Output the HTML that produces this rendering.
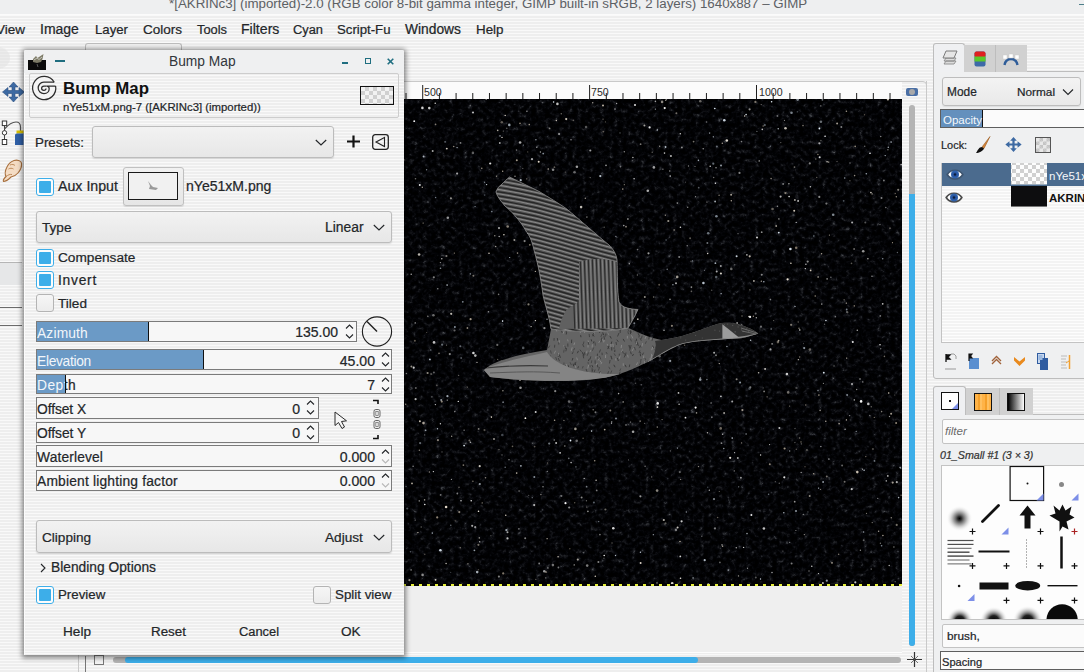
<!DOCTYPE html>
<html><head><meta charset="utf-8"><style>
html,body{margin:0;padding:0;}
body{width:1084px;height:672px;overflow:hidden;position:relative;font-family:"Liberation Sans",sans-serif;
background:repeating-linear-gradient(to bottom,#f9f9f9 0px,#f9f9f9 1px,#eeeeee 1px,#eeeeee 3px);}
div{box-sizing:border-box;}
svg{position:absolute;overflow:visible;pointer-events:none}
</style></head><body>
<div style="position:absolute;left:0px;top:0px;width:1084px;height:14px;background:#eeeff0"></div>
<div style="position:absolute;left:0px;top:14px;width:1084px;height:1px;background:#fbfbfb"></div>
<svg style="left:168.6px;top:-16px" width="900" height="32"><text x="0" y="23.50" font-size="13.32" fill="#5c6064" font-weight="400" font-family="Liberation Sans">*[AKRINc3] (imported)-2.0 (RGB color 8-bit gamma integer, GIMP built-in sRGB, 2 layers) 1640x887 – GIMP</text></svg>
<svg style="left:-4.2px;top:10px" width="900" height="32"><text x="0" y="24.00" font-size="13.5" fill="#232629" font-weight="400" stroke="#232629" stroke-width="0.22" font-family="Liberation Sans">View</text></svg>
<svg style="left:40px;top:10px" width="900" height="32"><text x="0" y="24.00" font-size="14.0" fill="#232629" font-weight="400" stroke="#232629" stroke-width="0.22" font-family="Liberation Sans">Image</text></svg>
<svg style="left:95px;top:10px" width="900" height="32"><text x="0" y="24.00" font-size="13.2" fill="#232629" font-weight="400" stroke="#232629" stroke-width="0.22" font-family="Liberation Sans">Layer</text></svg>
<svg style="left:143px;top:10px" width="900" height="32"><text x="0" y="24.00" font-size="13.5" fill="#232629" font-weight="400" stroke="#232629" stroke-width="0.22" font-family="Liberation Sans">Colors</text></svg>
<svg style="left:197px;top:10px" width="900" height="32"><text x="0" y="24.00" font-size="12.85" fill="#232629" font-weight="400" stroke="#232629" stroke-width="0.22" font-family="Liberation Sans">Tools</text></svg>
<svg style="left:241px;top:10px" width="900" height="32"><text x="0" y="24.00" font-size="14.1" fill="#232629" font-weight="400" stroke="#232629" stroke-width="0.22" font-family="Liberation Sans">Filters</text></svg>
<svg style="left:293px;top:10px" width="900" height="32"><text x="0" y="24.00" font-size="12.85" fill="#232629" font-weight="400" stroke="#232629" stroke-width="0.22" font-family="Liberation Sans">Cyan</text></svg>
<svg style="left:337px;top:10px" width="900" height="32"><text x="0" y="24.00" font-size="13.2" fill="#232629" font-weight="400" stroke="#232629" stroke-width="0.22" font-family="Liberation Sans">Script-Fu</text></svg>
<svg style="left:405px;top:10px" width="900" height="32"><text x="0" y="24.00" font-size="13.8" fill="#232629" font-weight="400" stroke="#232629" stroke-width="0.22" font-family="Liberation Sans">Windows</text></svg>
<svg style="left:475.5px;top:10px" width="900" height="32"><text x="0" y="24.00" font-size="13.4" fill="#232629" font-weight="400" stroke="#232629" stroke-width="0.22" font-family="Liberation Sans">Help</text></svg>
<div style="position:absolute;left:85px;top:43px;width:97px;height:10px;border:1px solid #bdbdbd;border-bottom:none;border-radius:3px 3px 0 0;background:#f0f0f0"></div>
<div style="position:absolute;left:-14px;top:47px;width:24px;height:22px;border-radius:50%;background:#e2e2e2;opacity:.6"></div>
<svg style="left:2px;top:82px" width="23" height="20" viewBox="0 0 23 20">
<path d="M11.5 0 L16 5 L13 5 L13 8.5 L17 8.5 L17 5.5 L22.5 10 L17 14.5 L17 11.5 L13 11.5 L13 15 L16 15 L11.5 20 L7 15 L10 15 L10 11.5 L6 11.5 L6 14.5 L0.5 10 L6 5.5 L6 8.5 L10 8.5 L10 5 L7 5 Z" fill="#3d6aa3" stroke="#2b4f80" stroke-width=".6"/></svg>
<svg style="left:0px;top:119px" width="26" height="28" viewBox="0 0 26 28">
<path d="M4.5 4 V23" stroke="#444" stroke-width="1"/>
<rect x="2.3" y="2" width="4.4" height="4.6" fill="#fff" stroke="#333" stroke-width="1"/>
<circle cx="4.5" cy="13.8" r="2.2" fill="#fff" stroke="#333" stroke-width="1"/>
<rect x="2.3" y="20.5" width="4.4" height="5" fill="#fff" stroke="#333" stroke-width="1"/>
<path d="M4.5 10 C8 6 12 3 16 3 C19 3 20.5 5 20.5 8 V12" fill="none" stroke="#555" stroke-width="1.2"/>
<rect x="16.5" y="11.5" width="7" height="3" fill="#d8c000"/>
<path d="M15 16 Q15 14.5 17 14.5 H23.5 V26 H15 Z" fill="#2f5fa6"/></svg>
<svg style="left:2px;top:159px" width="21" height="24" viewBox="0 0 21 24">
<path d="M12 1.5 C15 0.5 19 1.5 19.5 4 C20 7 18.5 11 16 14 C14 16.5 11 17.5 9 18 C7 20 4 22.5 1.5 22.5 C0.8 21.5 2 19.5 4 17.5 C3 15.5 3 12 4.5 9 C6 5.5 9 2.5 12 1.5 Z" fill="#f4dcc4" stroke="#a8703e" stroke-width="1.1"/>
<path d="M4 17.5 C6 16 8 15 10 15.5 M6.5 10 C8 9 10 9 11.5 10 M8 6 C10 5 12 5.5 13 6.5" fill="none" stroke="#b98250" stroke-width=".9"/></svg>
<div style="position:absolute;left:0px;top:262px;width:22px;height:1px;background:#b5b5b5"></div>
<div style="position:absolute;left:0px;top:263px;width:22px;height:22px;background:#e6e7e8"></div>
<div style="position:absolute;left:0px;top:307px;width:22px;height:1px;background:#6b6b6b"></div>
<div style="position:absolute;left:0px;top:325px;width:22px;height:1px;background:#6b6b6b"></div>
<div style="position:absolute;left:1078.5px;top:3.5px;width:6px;height:1.8px;background:#4d7f8a"></div>
<div style="position:absolute;left:78px;top:81px;width:849px;height:600px;border:1px solid #c9c9c9;border-radius:4px;"></div>
<div style="position:absolute;left:86px;top:82px;width:816px;height:17px;background:#fbfbfb"></div>
<svg style="left:0;top:0" width="1084" height="672"><rect x="405.51" y="93" width="1" height="6" fill="#1e1e1e"/><rect x="422.20" y="85" width="1" height="14" fill="#1e1e1e"/><rect x="438.89" y="93" width="1" height="6" fill="#1e1e1e"/><rect x="455.58" y="93" width="1" height="6" fill="#1e1e1e"/><rect x="472.27" y="93" width="1" height="6" fill="#1e1e1e"/><rect x="488.96" y="93" width="1" height="6" fill="#1e1e1e"/><rect x="505.65" y="93" width="1" height="6" fill="#1e1e1e"/><rect x="522.34" y="93" width="1" height="6" fill="#1e1e1e"/><rect x="539.03" y="93" width="1" height="6" fill="#1e1e1e"/><rect x="555.72" y="93" width="1" height="6" fill="#1e1e1e"/><rect x="572.41" y="93" width="1" height="6" fill="#1e1e1e"/><rect x="589.10" y="85" width="1" height="14" fill="#1e1e1e"/><rect x="605.79" y="93" width="1" height="6" fill="#1e1e1e"/><rect x="622.48" y="93" width="1" height="6" fill="#1e1e1e"/><rect x="639.17" y="93" width="1" height="6" fill="#1e1e1e"/><rect x="655.86" y="93" width="1" height="6" fill="#1e1e1e"/><rect x="672.55" y="93" width="1" height="6" fill="#1e1e1e"/><rect x="689.24" y="93" width="1" height="6" fill="#1e1e1e"/><rect x="705.93" y="93" width="1" height="6" fill="#1e1e1e"/><rect x="722.62" y="93" width="1" height="6" fill="#1e1e1e"/><rect x="739.31" y="93" width="1" height="6" fill="#1e1e1e"/><rect x="756.00" y="85" width="1" height="14" fill="#1e1e1e"/><rect x="772.69" y="93" width="1" height="6" fill="#1e1e1e"/><rect x="789.38" y="93" width="1" height="6" fill="#1e1e1e"/><rect x="806.07" y="93" width="1" height="6" fill="#1e1e1e"/><rect x="822.76" y="93" width="1" height="6" fill="#1e1e1e"/><rect x="839.45" y="93" width="1" height="6" fill="#1e1e1e"/><rect x="856.14" y="93" width="1" height="6" fill="#1e1e1e"/><rect x="872.83" y="93" width="1" height="6" fill="#1e1e1e"/><rect x="889.52" y="93" width="1" height="6" fill="#1e1e1e"/></svg>
<svg style="left:424.0px;top:72px" width="900" height="32"><text x="0" y="24.20" font-size="10.6" fill="#2b2b2b" font-weight="400" font-family="Liberation Sans">500</text></svg>
<svg style="left:590.5px;top:72px" width="900" height="32"><text x="0" y="24.20" font-size="10.6" fill="#2b2b2b" font-weight="400" font-family="Liberation Sans">750</text></svg>
<svg style="left:758.5px;top:72px" width="900" height="32"><text x="0" y="24.20" font-size="10.6" fill="#2b2b2b" font-weight="400" font-family="Liberation Sans">1000</text></svg>
<div style="position:absolute;left:906px;top:88px;width:12px;height:8px;border-radius:2px;background:#4a6fa5"><div style="position:absolute;left:3px;top:1px;width:6px;height:6px;border-radius:50%;background:#a9a9a9"></div></div>
<div style="position:absolute;left:404px;top:99px;width:498px;height:485px;background:#08080a;overflow:hidden"><svg style="left:-404px;top:-99px" width="1084" height="672"><filter id="nz" x="404" y="99" width="498" height="485" filterUnits="userSpaceOnUse" color-interpolation-filters="sRGB"><feTurbulence type="fractalNoise" baseFrequency="0.22" numOctaves="3" seed="11" result="t"/><feColorMatrix in="t" type="matrix" values="1 0 0 0 0  1 0 0 0 0  1 0 0 0 0  0 0 0 0 1"/><feComponentTransfer><feFuncR type="table" tableValues="0 0 0 0.001 0.008 0.034 0.095 0.23 0.46"/><feFuncG type="table" tableValues="0 0 0 0.002 0.01 0.037 0.1 0.24 0.46"/><feFuncB type="table" tableValues="0 0 0 0.006 0.02 0.052 0.115 0.26 0.46"/></feComponentTransfer></filter><rect x="404" y="99" width="498" height="485" filter="url(#nz)"/><circle cx="565.3" cy="172.2" r="0.6" fill="rgb(149,144,134)" opacity="0.5"/><circle cx="586.1" cy="127.1" r="1.3" fill="rgb(167,167,167)" opacity="0.5"/><circle cx="620.0" cy="132.9" r="0.7" fill="rgb(190,200,210)" opacity="0.5"/><circle cx="815.8" cy="159.0" r="0.8" fill="rgb(220,215,205)" opacity="0.5"/><circle cx="691.4" cy="291.4" r="0.8" fill="rgb(145,140,130)" opacity="0.65"/><circle cx="548.2" cy="169.0" r="0.7" fill="rgb(213,203,188)" opacity="1.0"/><circle cx="810.4" cy="186.7" r="0.8" fill="rgb(187,187,187)" opacity="1.0"/><circle cx="758.6" cy="372.7" r="0.8" fill="rgb(203,198,188)" opacity="0.9"/><circle cx="791.1" cy="324.8" r="1.1" fill="rgb(186,176,161)" opacity="0.65"/><circle cx="799.6" cy="438.0" r="0.8" fill="rgb(150,145,135)" opacity="0.8"/><circle cx="665.5" cy="523.4" r="1.1" fill="rgb(176,171,161)" opacity="0.5"/><circle cx="462.8" cy="301.8" r="0.9" fill="rgb(139,149,159)" opacity="0.9"/><circle cx="423.5" cy="423.1" r="1.3" fill="rgb(213,203,188)" opacity="0.8"/><circle cx="750.3" cy="387.3" r="1.1" fill="rgb(148,148,148)" opacity="0.8"/><circle cx="640.1" cy="421.1" r="0.6" fill="rgb(233,223,208)" opacity="1.0"/><circle cx="898.6" cy="497.6" r="0.8" fill="rgb(211,221,231)" opacity="0.8"/><circle cx="415.2" cy="322.9" r="0.7" fill="rgb(218,218,218)" opacity="0.9"/><circle cx="433.4" cy="471.6" r="0.7" fill="rgb(234,234,234)" opacity="0.9"/><circle cx="598.7" cy="521.6" r="0.7" fill="rgb(141,151,161)" opacity="0.9"/><circle cx="677.6" cy="527.4" r="1.0" fill="rgb(250,245,235)" opacity="0.8"/><circle cx="755.8" cy="577.4" r="1.0" fill="rgb(169,169,169)" opacity="0.5"/><circle cx="491.8" cy="211.5" r="0.8" fill="rgb(121,131,141)" opacity="1.0"/><circle cx="494.8" cy="235.7" r="0.7" fill="rgb(193,188,178)" opacity="0.8"/><circle cx="707.7" cy="253.5" r="0.7" fill="rgb(228,223,213)" opacity="1.0"/><circle cx="730.2" cy="457.8" r="1.1" fill="rgb(255,250,240)" opacity="0.9"/><circle cx="602.2" cy="290.1" r="1.1" fill="rgb(201,211,221)" opacity="0.5"/><circle cx="498.9" cy="576.6" r="1.1" fill="rgb(160,160,160)" opacity="0.8"/><circle cx="703.2" cy="148.7" r="0.7" fill="rgb(208,208,208)" opacity="0.8"/><circle cx="709.6" cy="133.1" r="0.8" fill="rgb(198,208,218)" opacity="0.65"/><circle cx="719.9" cy="562.4" r="0.9" fill="rgb(200,200,200)" opacity="0.5"/><circle cx="826.8" cy="580.7" r="1.1" fill="rgb(181,191,201)" opacity="0.8"/><circle cx="446.8" cy="148.6" r="0.9" fill="rgb(234,224,209)" opacity="0.9"/><circle cx="816.8" cy="177.3" r="0.6" fill="rgb(166,161,151)" opacity="0.8"/><circle cx="477.0" cy="362.4" r="0.6" fill="rgb(237,232,222)" opacity="0.8"/><circle cx="891.3" cy="517.7" r="0.8" fill="rgb(206,196,181)" opacity="0.65"/><circle cx="581.1" cy="207.1" r="1.3" fill="rgb(239,234,224)" opacity="0.8"/><circle cx="720.9" cy="396.4" r="0.8" fill="rgb(243,243,243)" opacity="0.9"/><circle cx="772.5" cy="209.0" r="1.3" fill="rgb(203,193,178)" opacity="0.5"/><circle cx="896.8" cy="482.2" r="1.1" fill="rgb(173,173,173)" opacity="1.0"/><circle cx="880.3" cy="315.9" r="0.9" fill="rgb(186,186,186)" opacity="0.65"/><circle cx="454.9" cy="327.0" r="0.9" fill="rgb(146,156,166)" opacity="1.0"/><circle cx="894.7" cy="395.0" r="0.6" fill="rgb(201,191,176)" opacity="0.5"/><circle cx="819.7" cy="157.2" r="1.0" fill="rgb(240,240,240)" opacity="0.9"/><circle cx="846.7" cy="309.5" r="0.9" fill="rgb(131,141,151)" opacity="0.9"/><circle cx="603.9" cy="558.2" r="0.7" fill="rgb(161,161,161)" opacity="0.5"/><circle cx="479.3" cy="537.9" r="0.7" fill="rgb(218,213,203)" opacity="0.9"/><circle cx="731.3" cy="268.9" r="1.3" fill="rgb(210,210,210)" opacity="0.5"/><circle cx="411.1" cy="569.9" r="0.7" fill="rgb(207,207,207)" opacity="0.9"/><circle cx="895.3" cy="193.5" r="0.8" fill="rgb(143,133,118)" opacity="0.65"/><circle cx="549.9" cy="215.7" r="0.9" fill="rgb(173,168,158)" opacity="0.9"/><circle cx="819.4" cy="128.5" r="0.9" fill="rgb(234,244,254)" opacity="1.0"/><circle cx="809.9" cy="349.6" r="1.3" fill="rgb(156,151,141)" opacity="0.65"/><circle cx="664.7" cy="108.1" r="1.1" fill="rgb(239,239,239)" opacity="1.0"/><circle cx="406.0" cy="486.6" r="0.7" fill="rgb(138,148,158)" opacity="1.0"/><circle cx="765.1" cy="368.9" r="0.9" fill="rgb(227,222,212)" opacity="1.0"/><circle cx="680.6" cy="479.4" r="0.7" fill="rgb(253,248,238)" opacity="0.5"/><circle cx="527.8" cy="233.3" r="0.7" fill="rgb(184,194,204)" opacity="1.0"/><circle cx="417.9" cy="532.6" r="0.7" fill="rgb(196,186,171)" opacity="1.0"/><circle cx="888.7" cy="393.0" r="0.8" fill="rgb(228,218,203)" opacity="0.9"/><circle cx="657.1" cy="490.6" r="1.3" fill="rgb(171,166,156)" opacity="0.8"/><circle cx="863.5" cy="532.0" r="0.8" fill="rgb(227,237,247)" opacity="0.65"/><circle cx="611.5" cy="289.3" r="0.9" fill="rgb(149,149,149)" opacity="0.9"/><circle cx="440.4" cy="423.7" r="0.7" fill="rgb(254,254,254)" opacity="0.8"/><circle cx="475.2" cy="527.2" r="1.1" fill="rgb(168,168,168)" opacity="0.9"/><circle cx="844.7" cy="178.0" r="0.8" fill="rgb(140,150,160)" opacity="1.0"/><circle cx="605.1" cy="303.3" r="0.9" fill="rgb(180,180,180)" opacity="0.8"/><circle cx="413.7" cy="367.7" r="1.1" fill="rgb(230,230,230)" opacity="0.9"/><circle cx="569.1" cy="401.6" r="1.3" fill="rgb(148,148,148)" opacity="0.65"/><circle cx="887.9" cy="149.8" r="0.8" fill="rgb(174,174,174)" opacity="0.65"/><circle cx="538.7" cy="161.8" r="1.0" fill="rgb(248,238,223)" opacity="0.9"/><circle cx="478.4" cy="544.8" r="1.1" fill="rgb(229,219,204)" opacity="0.5"/><circle cx="543.0" cy="486.8" r="0.7" fill="rgb(194,194,194)" opacity="0.8"/><circle cx="871.3" cy="406.7" r="0.8" fill="rgb(150,145,135)" opacity="0.65"/><circle cx="437.2" cy="517.4" r="1.1" fill="rgb(141,131,116)" opacity="1.0"/><circle cx="612.0" cy="543.0" r="0.7" fill="rgb(145,140,130)" opacity="0.65"/><circle cx="871.2" cy="569.1" r="0.8" fill="rgb(146,146,146)" opacity="0.65"/><circle cx="868.3" cy="403.9" r="1.3" fill="rgb(237,237,237)" opacity="0.8"/><circle cx="626.0" cy="425.0" r="0.8" fill="rgb(184,184,184)" opacity="0.8"/><circle cx="422.4" cy="107.9" r="1.3" fill="rgb(210,210,210)" opacity="1.0"/><circle cx="640.4" cy="552.3" r="0.7" fill="rgb(204,214,224)" opacity="0.9"/><circle cx="675.9" cy="530.0" r="1.3" fill="rgb(179,179,179)" opacity="0.65"/><circle cx="574.7" cy="502.7" r="0.7" fill="rgb(191,181,166)" opacity="0.5"/><circle cx="820.8" cy="105.9" r="0.8" fill="rgb(195,195,195)" opacity="0.5"/><circle cx="446.1" cy="507.0" r="1.3" fill="rgb(225,215,200)" opacity="1.0"/><circle cx="524.6" cy="241.1" r="1.1" fill="rgb(163,163,163)" opacity="0.8"/><circle cx="626.0" cy="226.7" r="0.9" fill="rgb(210,200,185)" opacity="0.65"/><circle cx="421.2" cy="527.0" r="0.8" fill="rgb(185,185,185)" opacity="0.5"/><circle cx="571.0" cy="139.7" r="0.8" fill="rgb(204,204,204)" opacity="0.65"/><circle cx="655.4" cy="101.4" r="0.8" fill="rgb(244,244,244)" opacity="0.65"/><circle cx="603.0" cy="119.2" r="0.6" fill="rgb(178,168,153)" opacity="0.65"/><circle cx="446.1" cy="563.5" r="0.7" fill="rgb(224,219,209)" opacity="0.9"/><circle cx="784.6" cy="448.5" r="1.1" fill="rgb(159,149,134)" opacity="1.0"/><circle cx="724.3" cy="120.2" r="1.3" fill="rgb(200,210,220)" opacity="1.0"/><circle cx="473.4" cy="353.0" r="1.3" fill="rgb(212,212,212)" opacity="1.0"/><circle cx="801.4" cy="443.9" r="0.8" fill="rgb(150,150,150)" opacity="0.5"/><circle cx="470.3" cy="273.9" r="0.7" fill="rgb(168,178,188)" opacity="1.0"/><circle cx="429.3" cy="108.1" r="1.3" fill="rgb(227,227,227)" opacity="0.9"/><circle cx="535.4" cy="320.6" r="0.7" fill="rgb(235,230,220)" opacity="1.0"/><circle cx="449.8" cy="354.1" r="1.1" fill="rgb(172,172,172)" opacity="0.8"/><circle cx="520.9" cy="465.9" r="0.8" fill="rgb(214,224,234)" opacity="0.9"/><circle cx="825.1" cy="136.2" r="0.8" fill="rgb(238,238,238)" opacity="1.0"/><circle cx="719.1" cy="195.2" r="0.7" fill="rgb(182,172,157)" opacity="0.8"/><circle cx="713.3" cy="163.7" r="1.1" fill="rgb(127,137,147)" opacity="0.8"/><circle cx="888.3" cy="147.3" r="0.8" fill="rgb(206,216,226)" opacity="0.8"/><circle cx="757.0" cy="237.5" r="1.1" fill="rgb(199,199,199)" opacity="1.0"/><circle cx="503.2" cy="573.4" r="1.1" fill="rgb(142,132,117)" opacity="0.9"/><circle cx="442.1" cy="344.7" r="1.1" fill="rgb(154,164,174)" opacity="0.65"/><circle cx="860.4" cy="550.3" r="0.7" fill="rgb(214,214,214)" opacity="0.65"/><circle cx="776.2" cy="226.0" r="0.9" fill="rgb(156,151,141)" opacity="1.0"/><circle cx="543.2" cy="153.6" r="0.9" fill="rgb(149,159,169)" opacity="0.9"/><circle cx="600.3" cy="176.1" r="1.1" fill="rgb(207,217,227)" opacity="0.9"/><circle cx="554.4" cy="167.2" r="0.9" fill="rgb(188,178,163)" opacity="0.5"/><circle cx="822.4" cy="99.8" r="0.9" fill="rgb(227,237,247)" opacity="0.5"/><circle cx="872.1" cy="193.9" r="0.6" fill="rgb(255,245,230)" opacity="0.8"/><circle cx="589.4" cy="289.6" r="0.7" fill="rgb(166,176,186)" opacity="0.8"/><circle cx="829.4" cy="235.1" r="0.6" fill="rgb(246,236,221)" opacity="0.65"/><circle cx="528.2" cy="227.9" r="1.3" fill="rgb(180,180,180)" opacity="0.8"/><circle cx="795.0" cy="306.5" r="0.6" fill="rgb(223,233,243)" opacity="1.0"/><circle cx="677.5" cy="448.0" r="0.6" fill="rgb(213,223,233)" opacity="0.9"/><circle cx="710.2" cy="166.2" r="0.8" fill="rgb(202,202,202)" opacity="1.0"/><circle cx="467.4" cy="328.0" r="0.9" fill="rgb(176,166,151)" opacity="0.8"/><circle cx="772.0" cy="572.5" r="0.8" fill="rgb(191,191,191)" opacity="0.8"/><circle cx="644.6" cy="423.4" r="0.7" fill="rgb(161,161,161)" opacity="0.5"/><circle cx="507.5" cy="538.4" r="1.1" fill="rgb(210,210,210)" opacity="0.9"/><circle cx="855.3" cy="582.3" r="1.1" fill="rgb(194,194,194)" opacity="1.0"/><circle cx="499.8" cy="143.0" r="0.9" fill="rgb(211,211,211)" opacity="0.8"/><circle cx="523.1" cy="224.3" r="0.8" fill="rgb(253,253,253)" opacity="0.9"/><circle cx="594.7" cy="460.7" r="0.8" fill="rgb(188,178,163)" opacity="0.8"/><circle cx="778.6" cy="340.6" r="0.9" fill="rgb(156,151,141)" opacity="1.0"/><circle cx="717.6" cy="517.5" r="0.8" fill="rgb(151,141,126)" opacity="0.65"/><circle cx="595.5" cy="412.2" r="1.0" fill="rgb(179,179,179)" opacity="0.65"/><circle cx="420.1" cy="443.1" r="1.1" fill="rgb(195,205,215)" opacity="0.5"/><circle cx="440.4" cy="550.2" r="1.3" fill="rgb(229,239,249)" opacity="0.9"/><circle cx="527.7" cy="151.9" r="0.7" fill="rgb(159,154,144)" opacity="0.5"/><circle cx="872.9" cy="449.0" r="1.1" fill="rgb(150,145,135)" opacity="0.5"/><circle cx="404.7" cy="159.9" r="0.6" fill="rgb(222,212,197)" opacity="0.65"/><circle cx="716.0" cy="355.2" r="1.0" fill="rgb(229,229,229)" opacity="0.5"/><circle cx="439.0" cy="353.4" r="0.8" fill="rgb(189,179,164)" opacity="0.65"/><circle cx="797.7" cy="99.6" r="1.3" fill="rgb(158,168,178)" opacity="0.8"/><circle cx="881.6" cy="411.6" r="0.8" fill="rgb(200,195,185)" opacity="0.65"/><circle cx="676.4" cy="113.2" r="1.0" fill="rgb(230,220,205)" opacity="0.5"/><circle cx="414.9" cy="340.7" r="1.0" fill="rgb(150,140,125)" opacity="0.65"/><circle cx="736.3" cy="547.7" r="0.8" fill="rgb(203,203,203)" opacity="0.8"/><circle cx="761.7" cy="274.7" r="1.0" fill="rgb(165,165,165)" opacity="0.8"/><circle cx="772.1" cy="343.9" r="0.8" fill="rgb(203,203,203)" opacity="0.8"/><circle cx="785.4" cy="193.1" r="1.1" fill="rgb(168,158,143)" opacity="0.8"/><circle cx="458.3" cy="401.4" r="0.7" fill="rgb(254,254,254)" opacity="0.9"/><circle cx="611.7" cy="421.7" r="0.7" fill="rgb(190,190,190)" opacity="0.65"/><circle cx="415.8" cy="388.1" r="1.0" fill="rgb(146,146,146)" opacity="0.65"/><circle cx="599.9" cy="534.6" r="0.9" fill="rgb(233,233,233)" opacity="0.5"/><circle cx="867.9" cy="258.7" r="0.7" fill="rgb(223,218,208)" opacity="0.9"/><circle cx="419.9" cy="421.2" r="1.0" fill="rgb(247,237,222)" opacity="0.8"/><circle cx="624.3" cy="151.8" r="0.7" fill="rgb(175,175,175)" opacity="0.8"/><circle cx="613.3" cy="528.3" r="1.3" fill="rgb(237,237,237)" opacity="0.9"/><circle cx="581.6" cy="497.5" r="1.0" fill="rgb(151,151,151)" opacity="0.9"/><circle cx="501.5" cy="361.6" r="1.1" fill="rgb(164,154,139)" opacity="0.8"/><circle cx="771.2" cy="329.1" r="1.0" fill="rgb(151,161,171)" opacity="0.5"/><circle cx="591.0" cy="324.1" r="0.6" fill="rgb(172,172,172)" opacity="0.5"/><circle cx="851.5" cy="263.4" r="0.8" fill="rgb(182,177,167)" opacity="0.5"/><circle cx="534.6" cy="446.6" r="0.9" fill="rgb(175,165,150)" opacity="0.5"/><circle cx="763.3" cy="387.9" r="0.7" fill="rgb(143,143,143)" opacity="0.5"/><circle cx="640.6" cy="563.0" r="1.0" fill="rgb(241,231,216)" opacity="0.9"/><circle cx="809.8" cy="163.4" r="1.1" fill="rgb(163,163,163)" opacity="0.8"/><circle cx="813.7" cy="473.8" r="0.8" fill="rgb(181,171,156)" opacity="0.9"/><circle cx="584.2" cy="478.4" r="0.7" fill="rgb(205,205,205)" opacity="0.9"/><circle cx="778.9" cy="218.9" r="0.7" fill="rgb(223,223,223)" opacity="0.9"/><circle cx="679.2" cy="257.0" r="1.0" fill="rgb(253,253,253)" opacity="0.5"/><circle cx="535.9" cy="139.8" r="0.7" fill="rgb(173,183,193)" opacity="0.9"/><circle cx="490.2" cy="163.5" r="1.1" fill="rgb(219,219,219)" opacity="1.0"/><circle cx="825.8" cy="421.2" r="0.7" fill="rgb(239,229,214)" opacity="0.8"/><circle cx="543.1" cy="228.8" r="0.8" fill="rgb(234,224,209)" opacity="0.65"/><circle cx="622.8" cy="189.1" r="0.8" fill="rgb(159,149,134)" opacity="1.0"/><circle cx="497.7" cy="130.4" r="0.8" fill="rgb(171,166,156)" opacity="1.0"/><circle cx="519.2" cy="491.1" r="1.1" fill="rgb(144,144,144)" opacity="0.5"/><circle cx="640.4" cy="496.3" r="1.1" fill="rgb(187,187,187)" opacity="0.8"/><circle cx="520.0" cy="123.4" r="0.8" fill="rgb(149,139,124)" opacity="1.0"/><circle cx="835.3" cy="316.8" r="0.8" fill="rgb(239,239,239)" opacity="0.5"/><circle cx="721.5" cy="443.2" r="0.9" fill="rgb(167,167,167)" opacity="0.8"/><circle cx="573.3" cy="120.4" r="0.8" fill="rgb(144,139,129)" opacity="0.65"/><circle cx="809.7" cy="496.1" r="1.0" fill="rgb(226,216,201)" opacity="0.65"/><circle cx="713.3" cy="136.8" r="0.6" fill="rgb(221,231,241)" opacity="1.0"/><circle cx="644.8" cy="297.0" r="1.0" fill="rgb(224,219,209)" opacity="0.65"/><circle cx="722.3" cy="143.2" r="0.7" fill="rgb(190,180,165)" opacity="0.9"/><circle cx="896.1" cy="422.9" r="1.0" fill="rgb(146,136,121)" opacity="1.0"/><circle cx="844.1" cy="299.8" r="0.6" fill="rgb(250,240,225)" opacity="0.65"/><circle cx="598.6" cy="295.4" r="0.6" fill="rgb(195,195,195)" opacity="0.9"/><circle cx="460.5" cy="142.9" r="0.9" fill="rgb(198,198,198)" opacity="0.65"/><circle cx="411.4" cy="366.5" r="1.0" fill="rgb(151,146,136)" opacity="1.0"/><circle cx="865.8" cy="456.6" r="0.7" fill="rgb(158,148,133)" opacity="0.8"/><circle cx="484.6" cy="182.3" r="0.7" fill="rgb(133,143,153)" opacity="0.9"/><circle cx="779.3" cy="483.2" r="0.8" fill="rgb(178,178,178)" opacity="0.5"/><circle cx="889.8" cy="333.1" r="0.6" fill="rgb(197,207,217)" opacity="0.5"/><circle cx="854.3" cy="399.9" r="0.7" fill="rgb(221,221,221)" opacity="1.0"/><circle cx="605.4" cy="509.5" r="1.1" fill="rgb(163,158,148)" opacity="0.65"/><circle cx="424.8" cy="554.2" r="0.7" fill="rgb(189,179,164)" opacity="0.5"/><circle cx="478.4" cy="569.8" r="0.8" fill="rgb(145,140,130)" opacity="0.5"/><circle cx="736.6" cy="256.2" r="1.0" fill="rgb(196,206,216)" opacity="1.0"/><circle cx="826.8" cy="476.4" r="1.0" fill="rgb(179,174,164)" opacity="0.65"/><circle cx="616.0" cy="418.5" r="1.1" fill="rgb(184,194,204)" opacity="0.65"/><circle cx="415.6" cy="399.2" r="1.1" fill="rgb(199,199,199)" opacity="0.9"/><circle cx="784.3" cy="477.3" r="1.1" fill="rgb(247,247,247)" opacity="0.9"/><circle cx="603.4" cy="131.6" r="0.9" fill="rgb(195,185,170)" opacity="0.5"/><circle cx="803.5" cy="343.6" r="0.6" fill="rgb(145,145,145)" opacity="0.5"/><circle cx="863.2" cy="251.2" r="1.3" fill="rgb(150,150,150)" opacity="1.0"/><circle cx="849.6" cy="415.6" r="0.7" fill="rgb(143,143,143)" opacity="1.0"/><circle cx="768.6" cy="494.3" r="0.8" fill="rgb(136,146,156)" opacity="0.8"/><circle cx="880.4" cy="543.3" r="0.7" fill="rgb(227,227,227)" opacity="0.5"/><circle cx="818.9" cy="395.1" r="0.8" fill="rgb(160,150,135)" opacity="1.0"/><circle cx="540.9" cy="494.6" r="0.7" fill="rgb(172,167,157)" opacity="0.9"/><circle cx="507.7" cy="226.5" r="1.3" fill="rgb(170,160,145)" opacity="0.8"/><circle cx="422.3" cy="187.3" r="0.7" fill="rgb(221,211,196)" opacity="0.8"/><circle cx="849.9" cy="180.8" r="0.8" fill="rgb(154,149,139)" opacity="0.5"/><circle cx="720.9" cy="273.5" r="1.1" fill="rgb(211,206,196)" opacity="1.0"/><circle cx="747.0" cy="533.6" r="0.8" fill="rgb(188,198,208)" opacity="0.8"/><circle cx="535.8" cy="579.4" r="0.7" fill="rgb(186,176,161)" opacity="0.5"/><circle cx="624.3" cy="184.7" r="0.6" fill="rgb(177,172,162)" opacity="0.8"/><circle cx="558.4" cy="567.5" r="0.9" fill="rgb(233,233,233)" opacity="0.5"/><circle cx="514.4" cy="240.1" r="1.0" fill="rgb(193,188,178)" opacity="0.8"/><circle cx="850.0" cy="163.0" r="0.8" fill="rgb(218,218,218)" opacity="0.5"/><circle cx="431.1" cy="374.1" r="0.8" fill="rgb(153,148,138)" opacity="0.8"/><circle cx="670.0" cy="299.4" r="0.8" fill="rgb(215,215,215)" opacity="0.65"/><circle cx="586.4" cy="500.8" r="0.7" fill="rgb(157,157,157)" opacity="0.65"/><circle cx="756.3" cy="317.7" r="0.7" fill="rgb(221,221,221)" opacity="0.8"/><circle cx="604.2" cy="227.2" r="0.6" fill="rgb(147,142,132)" opacity="0.8"/><circle cx="700.2" cy="379.6" r="1.3" fill="rgb(213,223,233)" opacity="0.65"/><circle cx="486.2" cy="99.2" r="0.6" fill="rgb(208,208,208)" opacity="0.9"/><circle cx="496.5" cy="176.2" r="0.7" fill="rgb(141,136,126)" opacity="1.0"/><circle cx="731.1" cy="194.7" r="1.0" fill="rgb(165,160,150)" opacity="1.0"/><circle cx="724.1" cy="413.1" r="1.0" fill="rgb(244,239,229)" opacity="0.65"/><circle cx="657.3" cy="129.9" r="0.6" fill="rgb(233,243,253)" opacity="1.0"/><circle cx="407.2" cy="508.5" r="1.1" fill="rgb(130,140,150)" opacity="0.65"/><circle cx="516.5" cy="150.1" r="0.8" fill="rgb(222,222,222)" opacity="0.5"/><circle cx="571.1" cy="462.6" r="0.8" fill="rgb(231,231,231)" opacity="0.8"/><circle cx="720.7" cy="428.4" r="1.3" fill="rgb(173,163,148)" opacity="0.65"/><circle cx="446.5" cy="345.1" r="0.7" fill="rgb(173,173,173)" opacity="0.65"/><circle cx="874.5" cy="460.9" r="0.9" fill="rgb(144,154,164)" opacity="0.8"/><circle cx="703.4" cy="283.0" r="1.3" fill="rgb(180,190,200)" opacity="1.0"/><circle cx="751.4" cy="514.9" r="1.0" fill="rgb(232,232,232)" opacity="1.0"/><circle cx="844.6" cy="481.8" r="1.0" fill="rgb(219,214,204)" opacity="0.5"/><circle cx="685.5" cy="182.2" r="0.6" fill="rgb(143,143,143)" opacity="0.5"/><circle cx="713.7" cy="177.5" r="0.7" fill="rgb(229,229,229)" opacity="0.5"/><circle cx="424.7" cy="434.9" r="0.6" fill="rgb(229,229,229)" opacity="0.5"/><circle cx="436.8" cy="385.4" r="0.9" fill="rgb(165,160,150)" opacity="0.5"/><circle cx="842.1" cy="465.5" r="1.0" fill="rgb(153,153,153)" opacity="0.65"/><circle cx="505.2" cy="115.4" r="0.7" fill="rgb(245,235,220)" opacity="0.9"/><circle cx="453.7" cy="146.5" r="0.8" fill="rgb(177,167,152)" opacity="0.8"/><circle cx="615.0" cy="109.1" r="0.8" fill="rgb(176,176,176)" opacity="0.8"/><circle cx="857.3" cy="472.1" r="1.3" fill="rgb(200,190,175)" opacity="1.0"/><circle cx="775.3" cy="481.7" r="0.6" fill="rgb(195,190,180)" opacity="0.5"/><circle cx="576.7" cy="440.8" r="1.3" fill="rgb(212,212,212)" opacity="0.5"/><circle cx="690.1" cy="238.2" r="1.0" fill="rgb(140,135,125)" opacity="0.65"/><circle cx="547.6" cy="463.0" r="0.6" fill="rgb(140,130,115)" opacity="0.9"/><circle cx="451.7" cy="436.2" r="0.7" fill="rgb(203,198,188)" opacity="0.8"/><circle cx="880.7" cy="348.8" r="0.7" fill="rgb(176,176,176)" opacity="0.65"/><circle cx="652.2" cy="152.3" r="0.7" fill="rgb(202,197,187)" opacity="0.5"/><circle cx="716.7" cy="271.5" r="1.0" fill="rgb(190,190,190)" opacity="0.9"/><circle cx="846.4" cy="111.2" r="0.8" fill="rgb(178,168,153)" opacity="0.9"/><circle cx="852.8" cy="342.1" r="1.0" fill="rgb(253,253,253)" opacity="0.9"/><circle cx="467.2" cy="387.1" r="0.6" fill="rgb(184,179,169)" opacity="0.8"/><circle cx="663.8" cy="520.0" r="1.1" fill="rgb(224,219,209)" opacity="0.8"/><circle cx="488.4" cy="311.8" r="0.8" fill="rgb(214,214,214)" opacity="0.65"/><circle cx="570.4" cy="410.7" r="0.8" fill="rgb(204,204,204)" opacity="0.8"/><circle cx="554.2" cy="440.0" r="0.7" fill="rgb(232,232,232)" opacity="0.65"/><circle cx="764.1" cy="391.4" r="0.9" fill="rgb(160,160,160)" opacity="0.8"/><circle cx="880.0" cy="224.5" r="0.7" fill="rgb(161,161,161)" opacity="0.65"/><circle cx="595.3" cy="576.2" r="0.8" fill="rgb(233,223,208)" opacity="0.9"/><circle cx="540.4" cy="152.0" r="0.7" fill="rgb(175,175,175)" opacity="0.9"/><circle cx="635.0" cy="105.1" r="1.0" fill="rgb(228,228,228)" opacity="1.0"/><circle cx="892.5" cy="242.7" r="0.6" fill="rgb(158,148,133)" opacity="1.0"/><circle cx="771.6" cy="101.7" r="0.8" fill="rgb(229,239,249)" opacity="1.0"/><circle cx="696.5" cy="412.9" r="0.8" fill="rgb(225,220,210)" opacity="0.65"/><circle cx="742.4" cy="410.1" r="1.1" fill="rgb(195,185,170)" opacity="0.8"/><circle cx="716.9" cy="146.5" r="1.0" fill="rgb(151,161,171)" opacity="0.65"/><circle cx="528.5" cy="304.4" r="1.1" fill="rgb(142,137,127)" opacity="0.9"/><circle cx="662.1" cy="419.6" r="0.7" fill="rgb(254,244,229)" opacity="0.5"/><circle cx="597.6" cy="336.6" r="0.7" fill="rgb(144,134,119)" opacity="1.0"/><circle cx="512.5" cy="446.4" r="0.8" fill="rgb(206,196,181)" opacity="0.5"/><circle cx="825.9" cy="320.5" r="0.8" fill="rgb(211,221,231)" opacity="1.0"/><circle cx="412.0" cy="483.4" r="0.9" fill="rgb(206,196,181)" opacity="0.9"/><circle cx="773.6" cy="320.6" r="0.7" fill="rgb(190,185,175)" opacity="0.5"/><circle cx="767.1" cy="396.8" r="0.6" fill="rgb(172,162,147)" opacity="0.9"/><circle cx="603.0" cy="105.5" r="1.0" fill="rgb(193,183,168)" opacity="1.0"/><circle cx="536.0" cy="207.8" r="1.0" fill="rgb(207,207,207)" opacity="0.9"/><circle cx="634.1" cy="178.8" r="0.7" fill="rgb(243,243,243)" opacity="0.9"/><circle cx="723.8" cy="448.5" r="0.7" fill="rgb(165,175,185)" opacity="0.9"/><circle cx="900.1" cy="467.5" r="0.7" fill="rgb(219,229,239)" opacity="0.8"/><circle cx="794.2" cy="210.8" r="1.0" fill="rgb(227,217,202)" opacity="0.9"/><circle cx="742.1" cy="332.6" r="0.8" fill="rgb(185,185,185)" opacity="0.8"/><circle cx="563.5" cy="334.2" r="0.7" fill="rgb(224,214,199)" opacity="0.65"/><circle cx="866.5" cy="513.4" r="0.6" fill="rgb(150,145,135)" opacity="0.8"/><circle cx="794.5" cy="167.1" r="0.9" fill="rgb(221,216,206)" opacity="0.5"/><circle cx="731.3" cy="200.7" r="0.7" fill="rgb(223,213,198)" opacity="0.8"/><circle cx="706.9" cy="379.6" r="0.8" fill="rgb(143,153,163)" opacity="0.8"/><circle cx="794.9" cy="200.1" r="1.0" fill="rgb(241,236,226)" opacity="0.65"/><circle cx="707.5" cy="432.7" r="0.7" fill="rgb(225,220,210)" opacity="0.8"/><circle cx="502.3" cy="435.0" r="1.3" fill="rgb(130,140,150)" opacity="0.5"/><circle cx="680.4" cy="227.3" r="0.8" fill="rgb(245,245,245)" opacity="0.9"/><circle cx="649.6" cy="127.4" r="1.1" fill="rgb(255,255,255)" opacity="0.9"/><circle cx="526.8" cy="178.8" r="0.6" fill="rgb(160,150,135)" opacity="0.9"/><circle cx="750.6" cy="340.3" r="0.8" fill="rgb(227,237,247)" opacity="0.8"/><circle cx="616.1" cy="584.0" r="0.7" fill="rgb(163,153,138)" opacity="0.5"/><circle cx="414.2" cy="121.2" r="0.9" fill="rgb(243,243,243)" opacity="1.0"/><circle cx="645.1" cy="466.2" r="0.7" fill="rgb(144,144,144)" opacity="0.9"/><circle cx="715.4" cy="263.2" r="0.9" fill="rgb(163,173,183)" opacity="1.0"/><circle cx="680.0" cy="541.5" r="0.8" fill="rgb(195,185,170)" opacity="0.9"/><circle cx="529.3" cy="124.6" r="0.8" fill="rgb(177,167,152)" opacity="0.9"/><circle cx="605.1" cy="343.3" r="0.8" fill="rgb(251,246,236)" opacity="0.8"/><circle cx="889.5" cy="416.5" r="0.7" fill="rgb(182,182,182)" opacity="0.8"/><circle cx="759.2" cy="160.9" r="0.7" fill="rgb(240,240,240)" opacity="0.9"/><circle cx="763.9" cy="528.5" r="1.3" fill="rgb(213,213,213)" opacity="0.9"/><circle cx="553.6" cy="102.0" r="0.8" fill="rgb(225,235,245)" opacity="1.0"/><circle cx="785.5" cy="128.2" r="1.3" fill="rgb(209,204,194)" opacity="0.9"/><circle cx="711.1" cy="403.0" r="0.7" fill="rgb(167,167,167)" opacity="0.9"/><circle cx="715.4" cy="183.3" r="0.7" fill="rgb(251,251,251)" opacity="0.9"/><circle cx="789.7" cy="542.3" r="0.6" fill="rgb(187,187,187)" opacity="0.8"/><circle cx="683.9" cy="224.1" r="0.8" fill="rgb(143,153,163)" opacity="0.5"/><circle cx="562.6" cy="307.9" r="0.6" fill="rgb(203,198,188)" opacity="1.0"/><circle cx="423.6" cy="156.6" r="1.0" fill="rgb(193,203,213)" opacity="0.9"/><circle cx="437.5" cy="428.8" r="0.7" fill="rgb(180,190,200)" opacity="1.0"/><circle cx="454.8" cy="411.6" r="0.8" fill="rgb(254,254,254)" opacity="0.5"/><circle cx="616.6" cy="103.5" r="0.7" fill="rgb(249,249,249)" opacity="0.65"/><circle cx="837.0" cy="161.5" r="0.6" fill="rgb(175,170,160)" opacity="0.65"/><circle cx="628.5" cy="459.9" r="0.6" fill="rgb(186,186,186)" opacity="0.5"/><circle cx="550.0" cy="369.4" r="1.1" fill="rgb(198,188,173)" opacity="0.5"/><circle cx="761.2" cy="104.5" r="0.6" fill="rgb(253,248,238)" opacity="0.5"/><circle cx="597.7" cy="250.6" r="0.7" fill="rgb(230,240,250)" opacity="1.0"/><circle cx="433.8" cy="277.3" r="1.1" fill="rgb(200,200,200)" opacity="0.65"/><circle cx="885.2" cy="155.6" r="0.7" fill="rgb(200,210,220)" opacity="0.9"/><circle cx="596.1" cy="480.3" r="0.8" fill="rgb(240,235,225)" opacity="0.8"/><circle cx="549.6" cy="128.4" r="0.9" fill="rgb(251,246,236)" opacity="0.5"/><circle cx="818.0" cy="390.6" r="0.8" fill="rgb(194,204,214)" opacity="0.65"/><circle cx="591.6" cy="431.1" r="0.8" fill="rgb(223,233,243)" opacity="0.8"/><circle cx="746.9" cy="254.9" r="0.8" fill="rgb(194,194,194)" opacity="1.0"/><circle cx="862.5" cy="469.2" r="0.6" fill="rgb(176,176,176)" opacity="1.0"/><circle cx="477.2" cy="572.1" r="1.3" fill="rgb(207,217,227)" opacity="0.8"/><circle cx="670.2" cy="360.9" r="1.1" fill="rgb(222,232,242)" opacity="0.65"/><circle cx="796.3" cy="449.3" r="0.8" fill="rgb(179,174,164)" opacity="0.5"/><circle cx="741.5" cy="324.7" r="0.8" fill="rgb(172,167,157)" opacity="0.5"/><circle cx="798.2" cy="322.0" r="0.7" fill="rgb(208,198,183)" opacity="0.5"/><circle cx="520.0" cy="380.1" r="0.8" fill="rgb(253,248,238)" opacity="0.8"/><circle cx="641.3" cy="384.8" r="0.8" fill="rgb(167,167,167)" opacity="0.5"/><circle cx="494.0" cy="439.0" r="0.9" fill="rgb(213,208,198)" opacity="0.8"/><circle cx="604.4" cy="349.9" r="0.7" fill="rgb(171,171,171)" opacity="0.9"/><circle cx="590.3" cy="150.5" r="1.1" fill="rgb(240,240,240)" opacity="0.65"/><circle cx="561.3" cy="113.7" r="0.8" fill="rgb(206,201,191)" opacity="0.5"/><circle cx="450.9" cy="198.3" r="1.1" fill="rgb(215,210,200)" opacity="0.65"/><circle cx="534.3" cy="476.9" r="1.0" fill="rgb(132,142,152)" opacity="1.0"/><circle cx="811.8" cy="566.3" r="0.8" fill="rgb(247,247,247)" opacity="0.8"/><circle cx="504.1" cy="186.7" r="0.7" fill="rgb(143,143,143)" opacity="0.5"/><circle cx="681.6" cy="521.3" r="1.1" fill="rgb(202,202,202)" opacity="1.0"/><circle cx="722.6" cy="546.2" r="0.7" fill="rgb(172,162,147)" opacity="1.0"/><circle cx="520.1" cy="142.5" r="1.3" fill="rgb(190,190,190)" opacity="0.9"/><circle cx="827.1" cy="278.9" r="0.8" fill="rgb(232,232,232)" opacity="0.65"/><circle cx="423.2" cy="223.1" r="0.9" fill="rgb(147,142,132)" opacity="0.5"/><circle cx="820.9" cy="121.8" r="1.3" fill="rgb(210,220,230)" opacity="0.5"/><circle cx="454.3" cy="253.1" r="0.6" fill="rgb(165,155,140)" opacity="1.0"/><circle cx="698.5" cy="466.6" r="0.7" fill="rgb(200,190,175)" opacity="0.8"/><circle cx="532.0" cy="159.2" r="1.1" fill="rgb(188,188,188)" opacity="0.9"/><circle cx="522.8" cy="168.4" r="0.6" fill="rgb(199,199,199)" opacity="0.5"/><circle cx="482.2" cy="502.9" r="0.7" fill="rgb(219,209,194)" opacity="0.65"/><circle cx="791.6" cy="563.6" r="1.0" fill="rgb(247,247,247)" opacity="0.5"/><circle cx="629.3" cy="263.8" r="0.8" fill="rgb(201,201,201)" opacity="0.8"/><circle cx="475.1" cy="206.5" r="0.6" fill="rgb(143,153,163)" opacity="1.0"/><circle cx="846.9" cy="311.9" r="0.7" fill="rgb(154,164,174)" opacity="0.9"/><circle cx="526.9" cy="111.3" r="0.8" fill="rgb(182,182,182)" opacity="0.8"/><circle cx="648.5" cy="253.3" r="1.1" fill="rgb(154,154,154)" opacity="1.0"/><circle cx="432.3" cy="533.1" r="0.8" fill="rgb(191,201,211)" opacity="0.8"/><circle cx="463.4" cy="465.1" r="0.9" fill="rgb(195,185,170)" opacity="0.65"/><circle cx="864.7" cy="146.3" r="0.8" fill="rgb(193,193,193)" opacity="0.5"/><circle cx="818.5" cy="573.6" r="0.7" fill="rgb(221,221,221)" opacity="0.9"/><circle cx="805.9" cy="264.3" r="0.7" fill="rgb(196,196,196)" opacity="1.0"/><circle cx="546.6" cy="273.6" r="0.6" fill="rgb(192,192,192)" opacity="0.8"/><circle cx="688.5" cy="166.0" r="0.7" fill="rgb(206,206,206)" opacity="0.65"/><circle cx="502.0" cy="137.4" r="0.7" fill="rgb(253,248,238)" opacity="0.9"/><circle cx="783.1" cy="184.0" r="0.7" fill="rgb(218,218,218)" opacity="1.0"/><circle cx="557.4" cy="103.9" r="1.3" fill="rgb(192,192,192)" opacity="1.0"/><circle cx="807.7" cy="261.6" r="1.1" fill="rgb(151,151,151)" opacity="0.9"/><circle cx="857.3" cy="330.2" r="0.8" fill="rgb(171,171,171)" opacity="1.0"/><circle cx="818.1" cy="277.0" r="0.7" fill="rgb(229,219,204)" opacity="1.0"/><circle cx="700.3" cy="101.3" r="1.3" fill="rgb(197,192,182)" opacity="0.5"/><circle cx="464.1" cy="445.6" r="0.9" fill="rgb(219,229,239)" opacity="1.0"/><circle cx="778.2" cy="128.7" r="0.7" fill="rgb(213,223,233)" opacity="0.9"/><circle cx="659.6" cy="356.3" r="1.3" fill="rgb(157,157,157)" opacity="0.65"/><circle cx="885.8" cy="207.5" r="0.7" fill="rgb(161,161,161)" opacity="0.8"/><circle cx="528.7" cy="495.3" r="0.6" fill="rgb(142,142,142)" opacity="0.65"/><circle cx="534.2" cy="505.1" r="1.1" fill="rgb(206,206,206)" opacity="0.9"/><circle cx="455.2" cy="520.7" r="0.7" fill="rgb(145,135,120)" opacity="0.5"/><circle cx="635.5" cy="383.2" r="0.8" fill="rgb(154,154,154)" opacity="0.5"/><circle cx="606.0" cy="165.4" r="0.8" fill="rgb(250,250,250)" opacity="0.65"/><circle cx="737.1" cy="323.1" r="1.0" fill="rgb(161,161,161)" opacity="0.9"/><circle cx="749.5" cy="388.6" r="1.3" fill="rgb(124,134,144)" opacity="0.5"/><circle cx="790.9" cy="263.2" r="0.8" fill="rgb(247,237,222)" opacity="0.9"/><circle cx="823.8" cy="372.7" r="0.9" fill="rgb(224,234,244)" opacity="1.0"/><circle cx="430.7" cy="349.9" r="0.9" fill="rgb(151,161,171)" opacity="0.5"/><circle cx="585.5" cy="356.4" r="0.7" fill="rgb(161,171,181)" opacity="0.65"/><circle cx="655.4" cy="109.1" r="0.7" fill="rgb(173,183,193)" opacity="0.9"/><circle cx="719.3" cy="491.5" r="0.6" fill="rgb(144,139,129)" opacity="0.8"/><circle cx="861.1" cy="401.4" r="1.3" fill="rgb(243,243,243)" opacity="1.0"/><circle cx="454.1" cy="158.0" r="0.6" fill="rgb(195,195,195)" opacity="0.5"/><circle cx="547.2" cy="247.1" r="0.7" fill="rgb(155,155,155)" opacity="1.0"/><circle cx="881.6" cy="545.7" r="0.8" fill="rgb(130,140,150)" opacity="1.0"/><circle cx="669.8" cy="171.0" r="0.7" fill="rgb(205,205,205)" opacity="0.8"/><circle cx="860.0" cy="379.0" r="0.8" fill="rgb(171,171,171)" opacity="1.0"/><circle cx="547.0" cy="319.3" r="0.8" fill="rgb(203,213,223)" opacity="0.65"/><circle cx="677.2" cy="276.9" r="1.3" fill="rgb(178,173,163)" opacity="0.9"/><circle cx="637.5" cy="249.6" r="0.8" fill="rgb(182,182,182)" opacity="0.65"/><circle cx="659.2" cy="284.8" r="1.0" fill="rgb(141,131,116)" opacity="0.65"/><circle cx="833.2" cy="214.7" r="1.3" fill="rgb(161,171,181)" opacity="0.8"/><circle cx="545.8" cy="577.9" r="0.8" fill="rgb(147,147,147)" opacity="0.65"/><circle cx="678.5" cy="392.9" r="0.9" fill="rgb(196,196,196)" opacity="1.0"/><circle cx="597.2" cy="312.4" r="0.7" fill="rgb(206,206,206)" opacity="0.65"/><circle cx="611.5" cy="423.1" r="0.7" fill="rgb(226,226,226)" opacity="1.0"/><circle cx="708.2" cy="233.2" r="1.3" fill="rgb(132,142,152)" opacity="0.8"/><circle cx="794.9" cy="442.6" r="0.7" fill="rgb(192,192,192)" opacity="0.5"/><circle cx="608.4" cy="365.7" r="0.7" fill="rgb(183,193,203)" opacity="1.0"/><circle cx="478.5" cy="511.2" r="0.8" fill="rgb(251,246,236)" opacity="1.0"/><circle cx="459.3" cy="512.1" r="1.1" fill="rgb(176,166,151)" opacity="0.8"/><circle cx="579.8" cy="354.2" r="1.0" fill="rgb(222,212,197)" opacity="0.5"/><circle cx="796.0" cy="511.0" r="1.1" fill="rgb(168,178,188)" opacity="0.8"/><circle cx="495.7" cy="246.5" r="0.7" fill="rgb(195,190,180)" opacity="0.9"/><circle cx="693.6" cy="141.6" r="0.9" fill="rgb(181,176,166)" opacity="0.65"/><circle cx="881.5" cy="198.1" r="1.0" fill="rgb(254,254,254)" opacity="0.5"/><circle cx="427.6" cy="373.0" r="1.1" fill="rgb(178,173,163)" opacity="0.8"/><circle cx="672.2" cy="583.2" r="1.3" fill="rgb(245,240,230)" opacity="0.9"/><circle cx="598.0" cy="272.5" r="0.9" fill="rgb(197,197,197)" opacity="0.5"/><circle cx="665.6" cy="147.0" r="0.9" fill="rgb(184,194,204)" opacity="1.0"/><circle cx="866.3" cy="173.8" r="0.8" fill="rgb(173,183,193)" opacity="0.9"/><circle cx="623.2" cy="401.9" r="0.9" fill="rgb(228,223,213)" opacity="0.5"/><circle cx="489.0" cy="253.3" r="0.7" fill="rgb(245,235,220)" opacity="1.0"/><circle cx="491.4" cy="417.1" r="0.8" fill="rgb(228,218,203)" opacity="1.0"/><circle cx="846.3" cy="303.1" r="0.7" fill="rgb(207,197,182)" opacity="1.0"/><circle cx="507.5" cy="532.2" r="1.0" fill="rgb(163,163,163)" opacity="1.0"/><circle cx="704.4" cy="270.3" r="0.6" fill="rgb(208,218,228)" opacity="0.5"/><circle cx="796.2" cy="247.8" r="1.3" fill="rgb(140,130,115)" opacity="0.9"/><circle cx="823.4" cy="383.3" r="0.6" fill="rgb(165,165,165)" opacity="0.9"/><circle cx="786.9" cy="374.0" r="1.3" fill="rgb(205,205,205)" opacity="1.0"/><circle cx="502.9" cy="390.8" r="0.7" fill="rgb(160,155,145)" opacity="1.0"/><circle cx="457.1" cy="147.6" r="0.7" fill="rgb(186,196,206)" opacity="0.9"/><circle cx="709.3" cy="490.2" r="0.6" fill="rgb(223,223,223)" opacity="1.0"/><circle cx="564.8" cy="446.0" r="0.9" fill="rgb(175,175,175)" opacity="0.5"/><circle cx="536.8" cy="147.2" r="0.7" fill="rgb(184,184,184)" opacity="0.9"/><circle cx="714.8" cy="108.5" r="0.8" fill="rgb(233,243,253)" opacity="1.0"/><circle cx="784.5" cy="120.3" r="0.6" fill="rgb(219,219,219)" opacity="0.65"/><circle cx="515.0" cy="176.3" r="0.7" fill="rgb(180,180,180)" opacity="0.9"/><circle cx="555.2" cy="391.2" r="1.1" fill="rgb(148,148,148)" opacity="0.9"/><circle cx="740.1" cy="382.6" r="1.0" fill="rgb(159,169,179)" opacity="0.9"/><circle cx="415.2" cy="520.1" r="0.7" fill="rgb(162,162,162)" opacity="0.8"/><circle cx="592.7" cy="102.7" r="0.8" fill="rgb(190,185,175)" opacity="0.8"/><circle cx="461.2" cy="357.9" r="1.0" fill="rgb(162,172,182)" opacity="0.5"/><circle cx="882.7" cy="303.8" r="0.9" fill="rgb(210,210,210)" opacity="0.9"/><circle cx="499.2" cy="236.5" r="0.8" fill="rgb(195,195,195)" opacity="0.8"/><circle cx="734.8" cy="264.6" r="0.7" fill="rgb(170,170,170)" opacity="0.5"/><circle cx="501.8" cy="363.3" r="0.7" fill="rgb(191,201,211)" opacity="0.9"/><circle cx="820.5" cy="489.4" r="0.7" fill="rgb(187,177,162)" opacity="0.65"/><circle cx="763.8" cy="281.8" r="0.8" fill="rgb(158,168,178)" opacity="1.0"/><circle cx="505.8" cy="515.3" r="0.7" fill="rgb(230,220,205)" opacity="1.0"/><circle cx="852.0" cy="384.0" r="0.9" fill="rgb(208,208,208)" opacity="0.9"/><circle cx="706.9" cy="202.1" r="0.7" fill="rgb(226,221,211)" opacity="0.5"/><circle cx="674.2" cy="230.1" r="1.0" fill="rgb(143,138,128)" opacity="0.65"/><circle cx="558.8" cy="288.1" r="0.7" fill="rgb(228,228,228)" opacity="0.65"/><circle cx="563.9" cy="420.4" r="0.7" fill="rgb(148,143,133)" opacity="0.8"/><circle cx="805.0" cy="466.8" r="0.8" fill="rgb(148,138,123)" opacity="0.5"/><circle cx="516.8" cy="160.2" r="1.0" fill="rgb(176,166,151)" opacity="0.9"/><circle cx="824.5" cy="324.3" r="0.7" fill="rgb(175,175,175)" opacity="0.5"/><circle cx="586.6" cy="486.7" r="0.9" fill="rgb(234,244,254)" opacity="0.5"/><circle cx="732.2" cy="438.1" r="0.8" fill="rgb(228,238,248)" opacity="0.8"/><circle cx="855.2" cy="146.4" r="0.8" fill="rgb(154,144,129)" opacity="1.0"/><circle cx="769.6" cy="444.6" r="0.6" fill="rgb(191,191,191)" opacity="1.0"/><circle cx="484.7" cy="195.1" r="0.8" fill="rgb(139,149,159)" opacity="0.5"/><circle cx="679.1" cy="404.3" r="0.7" fill="rgb(212,212,212)" opacity="1.0"/><circle cx="652.0" cy="351.6" r="1.0" fill="rgb(225,220,210)" opacity="0.8"/><circle cx="870.0" cy="153.3" r="0.8" fill="rgb(255,255,255)" opacity="1.0"/><circle cx="706.5" cy="122.0" r="0.8" fill="rgb(227,227,227)" opacity="0.5"/><circle cx="798.1" cy="200.9" r="0.9" fill="rgb(235,235,235)" opacity="0.9"/><circle cx="749.9" cy="289.9" r="0.8" fill="rgb(175,170,160)" opacity="0.5"/><circle cx="577.8" cy="559.6" r="1.1" fill="rgb(183,178,168)" opacity="0.9"/><circle cx="657.3" cy="427.1" r="0.8" fill="rgb(194,189,179)" opacity="0.65"/><circle cx="647.8" cy="190.8" r="1.3" fill="rgb(173,173,173)" opacity="1.0"/><circle cx="485.5" cy="477.7" r="0.8" fill="rgb(209,199,184)" opacity="0.65"/><circle cx="883.9" cy="180.5" r="0.9" fill="rgb(192,192,192)" opacity="0.65"/><circle cx="721.0" cy="165.5" r="1.1" fill="rgb(205,215,225)" opacity="0.65"/><circle cx="755.4" cy="101.9" r="1.1" fill="rgb(157,147,132)" opacity="0.8"/><circle cx="470.4" cy="442.2" r="0.8" fill="rgb(182,182,182)" opacity="1.0"/><circle cx="615.5" cy="555.5" r="0.7" fill="rgb(196,206,216)" opacity="0.9"/><circle cx="817.9" cy="154.5" r="0.8" fill="rgb(141,131,116)" opacity="0.9"/><circle cx="506.8" cy="128.3" r="0.8" fill="rgb(178,178,178)" opacity="0.5"/><circle cx="753.4" cy="316.3" r="0.7" fill="rgb(160,150,135)" opacity="0.9"/><circle cx="637.4" cy="275.0" r="0.7" fill="rgb(211,211,211)" opacity="0.5"/><circle cx="409.4" cy="580.2" r="1.1" fill="rgb(150,140,125)" opacity="1.0"/><circle cx="535.7" cy="411.9" r="1.0" fill="rgb(202,202,202)" opacity="1.0"/><circle cx="564.3" cy="273.3" r="0.7" fill="rgb(222,212,197)" opacity="1.0"/><circle cx="869.8" cy="415.5" r="0.8" fill="rgb(223,223,223)" opacity="0.5"/><circle cx="473.0" cy="112.4" r="1.0" fill="rgb(247,247,247)" opacity="0.8"/><circle cx="587.2" cy="565.6" r="1.3" fill="rgb(248,248,248)" opacity="0.5"/><circle cx="794.7" cy="501.7" r="0.9" fill="rgb(188,188,188)" opacity="0.8"/><circle cx="563.4" cy="277.7" r="1.3" fill="rgb(187,177,162)" opacity="0.65"/><circle cx="432.7" cy="151.0" r="1.0" fill="rgb(255,255,255)" opacity="0.65"/><circle cx="650.2" cy="341.3" r="0.7" fill="rgb(178,173,163)" opacity="1.0"/><circle cx="716.0" cy="167.8" r="0.8" fill="rgb(160,160,160)" opacity="0.9"/><circle cx="721.1" cy="293.7" r="0.6" fill="rgb(228,238,248)" opacity="0.9"/><circle cx="499.0" cy="449.6" r="0.6" fill="rgb(144,139,129)" opacity="1.0"/><circle cx="615.9" cy="236.4" r="0.6" fill="rgb(185,195,205)" opacity="0.8"/><circle cx="435.2" cy="103.3" r="0.7" fill="rgb(255,255,255)" opacity="0.9"/><circle cx="551.3" cy="313.9" r="0.9" fill="rgb(212,212,212)" opacity="0.9"/><circle cx="446.4" cy="256.0" r="1.1" fill="rgb(194,189,179)" opacity="0.65"/><circle cx="889.2" cy="565.5" r="0.7" fill="rgb(243,243,243)" opacity="0.8"/><circle cx="707.4" cy="243.1" r="1.0" fill="rgb(167,177,187)" opacity="0.65"/><circle cx="553.1" cy="265.6" r="0.6" fill="rgb(248,248,248)" opacity="0.65"/><circle cx="742.0" cy="316.0" r="0.7" fill="rgb(158,153,143)" opacity="0.8"/><circle cx="680.3" cy="556.4" r="0.9" fill="rgb(207,207,207)" opacity="1.0"/><circle cx="623.8" cy="225.6" r="0.8" fill="rgb(163,163,163)" opacity="1.0"/><circle cx="777.4" cy="206.3" r="0.8" fill="rgb(223,223,223)" opacity="0.65"/><circle cx="668.3" cy="221.0" r="1.1" fill="rgb(169,164,154)" opacity="0.9"/><circle cx="516.8" cy="376.8" r="0.7" fill="rgb(234,229,219)" opacity="1.0"/><circle cx="686.3" cy="512.0" r="0.7" fill="rgb(222,232,242)" opacity="0.65"/><circle cx="834.0" cy="366.0" r="0.7" fill="rgb(220,215,205)" opacity="0.5"/><circle cx="633.1" cy="431.7" r="1.3" fill="rgb(161,161,161)" opacity="1.0"/><circle cx="640.6" cy="144.2" r="0.9" fill="rgb(239,234,224)" opacity="0.5"/><circle cx="605.4" cy="121.9" r="0.6" fill="rgb(141,136,126)" opacity="0.65"/><circle cx="632.9" cy="157.5" r="0.7" fill="rgb(194,194,194)" opacity="1.0"/><circle cx="896.3" cy="196.8" r="0.7" fill="rgb(233,223,208)" opacity="0.65"/><circle cx="586.8" cy="507.1" r="0.6" fill="rgb(245,235,220)" opacity="0.5"/><circle cx="523.2" cy="347.9" r="1.3" fill="rgb(165,175,185)" opacity="0.5"/><circle cx="810.6" cy="270.4" r="0.9" fill="rgb(210,200,185)" opacity="1.0"/><circle cx="460.3" cy="547.8" r="0.8" fill="rgb(172,162,147)" opacity="0.65"/><circle cx="749.6" cy="109.3" r="1.1" fill="rgb(154,154,154)" opacity="0.9"/><circle cx="459.0" cy="487.3" r="0.7" fill="rgb(159,154,144)" opacity="0.8"/><circle cx="839.1" cy="423.7" r="0.7" fill="rgb(215,205,190)" opacity="1.0"/><circle cx="900.6" cy="468.3" r="0.8" fill="rgb(196,196,196)" opacity="0.5"/><circle cx="574.5" cy="172.2" r="1.3" fill="rgb(201,201,201)" opacity="0.5"/><circle cx="441.2" cy="399.9" r="1.0" fill="rgb(227,237,247)" opacity="0.65"/><circle cx="749.1" cy="316.6" r="0.8" fill="rgb(251,246,236)" opacity="1.0"/><circle cx="441.8" cy="258.7" r="0.8" fill="rgb(179,179,179)" opacity="1.0"/><circle cx="715.1" cy="201.5" r="0.9" fill="rgb(213,223,233)" opacity="0.8"/><circle cx="691.4" cy="287.1" r="0.9" fill="rgb(180,180,180)" opacity="0.8"/><circle cx="692.4" cy="260.9" r="0.6" fill="rgb(151,161,171)" opacity="1.0"/><circle cx="426.6" cy="169.7" r="0.7" fill="rgb(154,164,174)" opacity="0.8"/><circle cx="435.6" cy="579.8" r="0.9" fill="rgb(212,207,197)" opacity="1.0"/><circle cx="695.0" cy="166.5" r="0.6" fill="rgb(211,211,211)" opacity="0.65"/><circle cx="789.6" cy="406.1" r="0.7" fill="rgb(186,176,161)" opacity="0.65"/><circle cx="838.7" cy="554.2" r="0.7" fill="rgb(178,168,153)" opacity="0.8"/><circle cx="657.4" cy="407.1" r="0.9" fill="rgb(251,246,236)" opacity="0.9"/><circle cx="570.5" cy="440.5" r="0.9" fill="rgb(233,243,253)" opacity="1.0"/><circle cx="586.9" cy="217.1" r="0.8" fill="rgb(184,184,184)" opacity="0.65"/><circle cx="506.3" cy="530.1" r="1.1" fill="rgb(171,181,191)" opacity="0.9"/><circle cx="687.2" cy="245.7" r="0.7" fill="rgb(215,215,215)" opacity="0.65"/><circle cx="554.1" cy="248.6" r="1.3" fill="rgb(224,214,199)" opacity="0.5"/><circle cx="862.8" cy="381.9" r="0.7" fill="rgb(214,214,214)" opacity="0.8"/><circle cx="693.1" cy="577.9" r="0.9" fill="rgb(219,229,239)" opacity="0.5"/><circle cx="821.6" cy="253.8" r="0.7" fill="rgb(175,165,150)" opacity="1.0"/><circle cx="415.5" cy="178.8" r="0.8" fill="rgb(170,170,170)" opacity="0.65"/><circle cx="427.8" cy="316.2" r="0.8" fill="rgb(250,245,235)" opacity="0.5"/><circle cx="502.0" cy="454.9" r="0.7" fill="rgb(216,216,216)" opacity="0.5"/><circle cx="440.6" cy="494.9" r="0.9" fill="rgb(232,232,232)" opacity="0.5"/><circle cx="497.7" cy="359.4" r="0.6" fill="rgb(221,211,196)" opacity="0.5"/><circle cx="509.7" cy="257.5" r="0.6" fill="rgb(203,213,223)" opacity="0.9"/><circle cx="707.7" cy="487.2" r="0.7" fill="rgb(127,137,147)" opacity="0.5"/><circle cx="447.4" cy="396.2" r="1.1" fill="rgb(196,206,216)" opacity="0.8"/><circle cx="872.2" cy="522.6" r="0.6" fill="rgb(180,175,165)" opacity="0.8"/><circle cx="431.9" cy="396.8" r="0.9" fill="rgb(160,160,160)" opacity="0.5"/><circle cx="481.8" cy="168.2" r="0.7" fill="rgb(185,175,160)" opacity="0.9"/><circle cx="575.4" cy="428.9" r="1.3" fill="rgb(159,154,144)" opacity="1.0"/><circle cx="568.8" cy="458.4" r="0.8" fill="rgb(224,234,244)" opacity="0.5"/><circle cx="790.4" cy="249.0" r="1.3" fill="rgb(210,220,230)" opacity="1.0"/><circle cx="542.6" cy="352.8" r="0.8" fill="rgb(156,146,131)" opacity="0.5"/><circle cx="681.9" cy="147.4" r="0.9" fill="rgb(159,159,159)" opacity="0.9"/><circle cx="780.8" cy="142.6" r="0.6" fill="rgb(219,219,219)" opacity="0.5"/><circle cx="434.0" cy="342.4" r="1.3" fill="rgb(239,239,239)" opacity="0.8"/><circle cx="872.0" cy="276.3" r="0.7" fill="rgb(255,255,255)" opacity="0.65"/><circle cx="667.2" cy="269.2" r="0.8" fill="rgb(176,186,196)" opacity="0.65"/><circle cx="720.8" cy="266.0" r="1.0" fill="rgb(198,198,198)" opacity="0.8"/><circle cx="797.3" cy="111.8" r="0.6" fill="rgb(128,138,148)" opacity="0.8"/><circle cx="433.9" cy="372.6" r="1.0" fill="rgb(188,188,188)" opacity="0.5"/><circle cx="529.5" cy="226.2" r="1.0" fill="rgb(170,170,170)" opacity="0.8"/><circle cx="505.2" cy="467.2" r="0.8" fill="rgb(158,168,178)" opacity="0.65"/><circle cx="892.7" cy="482.6" r="1.1" fill="rgb(250,240,225)" opacity="0.65"/><circle cx="813.8" cy="236.0" r="0.9" fill="rgb(120,130,140)" opacity="0.65"/><circle cx="484.5" cy="430.1" r="1.1" fill="rgb(167,162,152)" opacity="0.5"/><circle cx="843.7" cy="200.8" r="0.9" fill="rgb(125,135,145)" opacity="0.65"/><circle cx="620.5" cy="166.8" r="0.8" fill="rgb(227,227,227)" opacity="0.5"/><circle cx="479.7" cy="541.7" r="0.7" fill="rgb(178,178,178)" opacity="1.0"/><circle cx="770.5" cy="146.3" r="0.7" fill="rgb(179,189,199)" opacity="0.5"/><circle cx="610.3" cy="410.4" r="1.0" fill="rgb(252,242,227)" opacity="0.5"/><circle cx="695.5" cy="196.7" r="0.6" fill="rgb(144,144,144)" opacity="1.0"/><circle cx="700.4" cy="377.8" r="0.7" fill="rgb(233,233,233)" opacity="0.5"/><circle cx="897.4" cy="252.5" r="0.7" fill="rgb(135,145,155)" opacity="0.65"/><circle cx="665.7" cy="100.2" r="0.8" fill="rgb(227,222,212)" opacity="0.65"/><circle cx="719.3" cy="363.6" r="0.7" fill="rgb(207,197,182)" opacity="0.9"/><circle cx="880.7" cy="136.5" r="0.8" fill="rgb(249,249,249)" opacity="0.5"/><circle cx="539.9" cy="185.0" r="0.8" fill="rgb(174,174,174)" opacity="0.5"/><circle cx="501.8" cy="122.2" r="1.3" fill="rgb(186,176,161)" opacity="0.5"/><circle cx="566.2" cy="119.1" r="1.1" fill="rgb(209,199,184)" opacity="1.0"/><circle cx="568.7" cy="298.0" r="0.8" fill="rgb(171,181,191)" opacity="0.8"/><circle cx="672.9" cy="284.7" r="0.7" fill="rgb(169,179,189)" opacity="0.9"/><circle cx="804.3" cy="534.6" r="0.6" fill="rgb(170,165,155)" opacity="1.0"/><circle cx="865.3" cy="222.5" r="1.0" fill="rgb(170,170,170)" opacity="0.5"/><circle cx="447.2" cy="400.1" r="0.6" fill="rgb(231,231,231)" opacity="0.9"/><circle cx="749.7" cy="256.3" r="1.1" fill="rgb(210,200,185)" opacity="0.9"/><circle cx="887.9" cy="99.5" r="1.1" fill="rgb(205,195,180)" opacity="1.0"/><circle cx="676.0" cy="283.2" r="1.0" fill="rgb(185,185,185)" opacity="0.9"/><circle cx="890.0" cy="228.2" r="0.9" fill="rgb(149,144,134)" opacity="0.65"/><circle cx="864.1" cy="470.2" r="0.8" fill="rgb(227,237,247)" opacity="0.8"/><circle cx="664.0" cy="330.2" r="0.8" fill="rgb(158,158,158)" opacity="1.0"/><circle cx="585.3" cy="198.3" r="0.7" fill="rgb(244,234,219)" opacity="0.65"/><circle cx="739.5" cy="172.9" r="1.1" fill="rgb(162,162,162)" opacity="0.8"/><circle cx="593.9" cy="502.6" r="1.0" fill="rgb(135,145,155)" opacity="0.65"/><circle cx="753.9" cy="280.9" r="0.9" fill="rgb(185,180,170)" opacity="1.0"/><circle cx="554.6" cy="420.2" r="0.8" fill="rgb(190,180,165)" opacity="0.9"/><circle cx="750.1" cy="316.9" r="1.1" fill="rgb(233,233,233)" opacity="1.0"/><circle cx="478.6" cy="428.9" r="0.9" fill="rgb(202,197,187)" opacity="0.65"/><circle cx="714.1" cy="352.8" r="1.0" fill="rgb(172,172,172)" opacity="1.0"/><circle cx="504.0" cy="375.7" r="0.6" fill="rgb(215,215,215)" opacity="0.8"/><circle cx="761.7" cy="232.2" r="0.9" fill="rgb(172,172,172)" opacity="0.8"/><circle cx="819.4" cy="143.3" r="1.1" fill="rgb(249,249,249)" opacity="0.65"/><circle cx="467.9" cy="563.8" r="0.8" fill="rgb(219,209,194)" opacity="0.5"/><circle cx="761.3" cy="281.2" r="0.6" fill="rgb(231,221,206)" opacity="0.9"/><circle cx="618.6" cy="393.6" r="0.8" fill="rgb(185,185,185)" opacity="0.9"/><circle cx="827.1" cy="161.8" r="0.8" fill="rgb(249,244,234)" opacity="0.8"/><circle cx="435.6" cy="197.5" r="0.7" fill="rgb(130,140,150)" opacity="0.9"/><circle cx="599.8" cy="300.1" r="0.6" fill="rgb(153,148,138)" opacity="1.0"/><circle cx="634.3" cy="323.2" r="1.0" fill="rgb(173,183,193)" opacity="0.65"/><circle cx="847.4" cy="312.3" r="1.1" fill="rgb(157,152,142)" opacity="0.5"/><circle cx="737.8" cy="458.1" r="1.0" fill="rgb(209,209,209)" opacity="0.8"/><circle cx="679.8" cy="472.1" r="1.1" fill="rgb(155,155,155)" opacity="0.65"/><circle cx="826.2" cy="375.9" r="0.6" fill="rgb(133,143,153)" opacity="0.5"/><circle cx="826.4" cy="203.6" r="1.1" fill="rgb(147,147,147)" opacity="0.8"/><circle cx="644.4" cy="125.6" r="1.0" fill="rgb(247,242,232)" opacity="0.65"/><circle cx="901.1" cy="495.2" r="0.7" fill="rgb(181,171,156)" opacity="0.65"/><circle cx="662.1" cy="101.9" r="1.3" fill="rgb(175,170,160)" opacity="0.8"/><circle cx="447.1" cy="285.1" r="0.8" fill="rgb(191,201,211)" opacity="1.0"/><circle cx="845.1" cy="429.3" r="0.8" fill="rgb(178,178,178)" opacity="0.9"/><circle cx="803.4" cy="514.5" r="0.8" fill="rgb(179,179,179)" opacity="0.65"/><circle cx="429.9" cy="359.4" r="0.9" fill="rgb(179,189,199)" opacity="1.0"/><circle cx="474.4" cy="550.3" r="0.9" fill="rgb(145,155,165)" opacity="1.0"/><circle cx="734.6" cy="452.7" r="0.6" fill="rgb(208,208,208)" opacity="0.9"/><circle cx="877.8" cy="498.3" r="0.6" fill="rgb(175,175,175)" opacity="0.9"/><circle cx="549.2" cy="443.6" r="1.1" fill="rgb(171,181,191)" opacity="0.65"/><circle cx="841.3" cy="127.0" r="1.0" fill="rgb(249,249,249)" opacity="0.5"/><circle cx="472.2" cy="525.8" r="1.1" fill="rgb(163,163,163)" opacity="1.0"/><circle cx="771.1" cy="178.6" r="0.8" fill="rgb(226,216,201)" opacity="0.65"/><circle cx="670.2" cy="176.1" r="0.8" fill="rgb(206,206,206)" opacity="0.9"/><circle cx="451.4" cy="479.4" r="0.6" fill="rgb(193,193,193)" opacity="0.8"/><circle cx="755.7" cy="313.6" r="1.0" fill="rgb(159,159,159)" opacity="0.65"/><circle cx="424.8" cy="504.5" r="0.8" fill="rgb(237,237,237)" opacity="1.0"/><circle cx="801.0" cy="441.9" r="0.7" fill="rgb(179,169,154)" opacity="0.8"/><circle cx="677.3" cy="203.1" r="0.8" fill="rgb(190,190,190)" opacity="0.8"/><circle cx="593.2" cy="409.8" r="0.8" fill="rgb(223,218,208)" opacity="0.5"/><circle cx="502.7" cy="171.2" r="0.7" fill="rgb(195,185,170)" opacity="0.9"/><circle cx="461.0" cy="500.8" r="0.7" fill="rgb(224,224,224)" opacity="1.0"/><circle cx="666.1" cy="240.0" r="0.9" fill="rgb(122,132,142)" opacity="0.5"/><circle cx="503.9" cy="234.8" r="0.8" fill="rgb(216,211,201)" opacity="1.0"/><circle cx="780.6" cy="196.6" r="1.1" fill="rgb(174,174,174)" opacity="1.0"/><circle cx="864.5" cy="114.7" r="0.7" fill="rgb(140,130,115)" opacity="0.65"/><circle cx="874.3" cy="417.4" r="0.6" fill="rgb(162,152,137)" opacity="0.8"/><circle cx="627.9" cy="219.0" r="0.9" fill="rgb(162,162,162)" opacity="0.8"/><circle cx="806.9" cy="450.0" r="1.1" fill="rgb(152,147,137)" opacity="0.5"/><circle cx="796.4" cy="387.9" r="1.1" fill="rgb(144,144,144)" opacity="0.5"/><circle cx="659.7" cy="146.2" r="0.7" fill="rgb(193,188,178)" opacity="0.8"/><circle cx="442.0" cy="451.9" r="0.7" fill="rgb(186,186,186)" opacity="0.5"/><circle cx="569.2" cy="507.5" r="1.1" fill="rgb(178,178,178)" opacity="0.8"/><circle cx="450.8" cy="525.3" r="0.7" fill="rgb(139,149,159)" opacity="0.8"/><circle cx="670.9" cy="156.0" r="1.1" fill="rgb(171,171,171)" opacity="1.0"/><circle cx="670.7" cy="344.8" r="0.9" fill="rgb(165,155,140)" opacity="0.9"/><circle cx="680.5" cy="578.2" r="0.8" fill="rgb(233,228,218)" opacity="1.0"/><circle cx="523.3" cy="145.1" r="0.7" fill="rgb(126,136,146)" opacity="1.0"/><circle cx="509.0" cy="459.7" r="0.7" fill="rgb(236,236,236)" opacity="0.65"/><circle cx="822.9" cy="583.1" r="1.0" fill="rgb(190,185,175)" opacity="1.0"/><circle cx="458.6" cy="375.4" r="0.7" fill="rgb(150,145,135)" opacity="0.65"/><circle cx="520.5" cy="387.7" r="1.3" fill="rgb(230,230,230)" opacity="0.65"/><circle cx="440.4" cy="262.6" r="0.7" fill="rgb(145,145,145)" opacity="1.0"/><circle cx="788.9" cy="183.7" r="0.8" fill="rgb(183,183,183)" opacity="0.9"/><circle cx="698.7" cy="187.7" r="0.9" fill="rgb(172,182,192)" opacity="0.5"/><circle cx="447.8" cy="217.7" r="1.3" fill="rgb(226,226,226)" opacity="0.65"/><circle cx="801.2" cy="472.5" r="0.8" fill="rgb(165,165,165)" opacity="0.8"/><circle cx="756.9" cy="131.4" r="0.6" fill="rgb(221,231,241)" opacity="0.5"/><circle cx="651.7" cy="476.9" r="0.7" fill="rgb(236,231,221)" opacity="0.5"/><circle cx="503.1" cy="402.2" r="0.9" fill="rgb(220,230,240)" opacity="0.5"/><circle cx="728.2" cy="570.1" r="0.7" fill="rgb(222,232,242)" opacity="0.9"/><circle cx="471.2" cy="500.8" r="0.8" fill="rgb(255,255,255)" opacity="0.9"/><circle cx="818.6" cy="488.1" r="0.7" fill="rgb(175,185,195)" opacity="1.0"/><circle cx="552.9" cy="565.1" r="1.3" fill="rgb(223,223,223)" opacity="0.5"/><circle cx="886.3" cy="480.9" r="0.8" fill="rgb(236,236,236)" opacity="0.65"/><circle cx="502.6" cy="321.1" r="0.8" fill="rgb(232,242,252)" opacity="1.0"/><circle cx="856.2" cy="431.4" r="0.6" fill="rgb(170,180,190)" opacity="0.8"/><circle cx="815.2" cy="296.0" r="0.7" fill="rgb(169,159,144)" opacity="1.0"/><circle cx="854.3" cy="305.9" r="0.8" fill="rgb(140,130,115)" opacity="0.9"/><circle cx="704.7" cy="560.2" r="1.1" fill="rgb(173,183,193)" opacity="1.0"/><circle cx="553.1" cy="169.7" r="1.3" fill="rgb(167,167,167)" opacity="0.8"/><circle cx="600.1" cy="325.0" r="0.6" fill="rgb(177,167,152)" opacity="0.5"/><circle cx="898.2" cy="189.8" r="1.1" fill="rgb(192,187,177)" opacity="0.65"/><circle cx="464.1" cy="430.2" r="0.6" fill="rgb(188,188,188)" opacity="0.9"/><circle cx="539.2" cy="563.5" r="0.9" fill="rgb(161,161,161)" opacity="0.8"/><circle cx="847.1" cy="395.0" r="1.0" fill="rgb(159,169,179)" opacity="0.8"/><circle cx="880.0" cy="344.8" r="0.8" fill="rgb(249,249,249)" opacity="0.9"/><circle cx="666.5" cy="99.2" r="0.7" fill="rgb(153,153,153)" opacity="0.9"/><circle cx="685.5" cy="417.7" r="0.9" fill="rgb(226,226,226)" opacity="1.0"/><circle cx="769.8" cy="464.3" r="1.0" fill="rgb(157,147,132)" opacity="0.9"/><circle cx="441.8" cy="401.6" r="1.1" fill="rgb(174,164,149)" opacity="0.8"/><circle cx="556.1" cy="443.0" r="1.0" fill="rgb(206,206,206)" opacity="0.9"/><circle cx="649.7" cy="434.4" r="0.6" fill="rgb(147,147,147)" opacity="1.0"/><circle cx="591.8" cy="249.9" r="1.3" fill="rgb(254,254,254)" opacity="1.0"/><circle cx="777.4" cy="116.0" r="0.9" fill="rgb(201,201,201)" opacity="0.5"/><circle cx="878.6" cy="531.3" r="0.7" fill="rgb(164,159,149)" opacity="1.0"/><circle cx="657.0" cy="582.9" r="0.7" fill="rgb(235,230,220)" opacity="0.8"/><circle cx="716.4" cy="216.2" r="1.3" fill="rgb(123,133,143)" opacity="1.0"/><circle cx="891.1" cy="413.7" r="1.0" fill="rgb(203,193,178)" opacity="0.8"/><circle cx="565.5" cy="503.2" r="1.1" fill="rgb(245,245,245)" opacity="1.0"/><circle cx="576.9" cy="166.8" r="1.3" fill="rgb(243,243,243)" opacity="0.65"/><circle cx="557.4" cy="351.4" r="0.8" fill="rgb(146,141,131)" opacity="0.8"/><circle cx="887.8" cy="475.9" r="0.9" fill="rgb(228,228,228)" opacity="0.8"/><circle cx="558.1" cy="556.7" r="0.8" fill="rgb(219,209,194)" opacity="0.9"/><circle cx="604.7" cy="429.6" r="0.9" fill="rgb(190,180,165)" opacity="0.9"/><circle cx="799.0" cy="328.2" r="0.7" fill="rgb(166,161,151)" opacity="0.9"/><circle cx="653.6" cy="297.0" r="0.7" fill="rgb(239,229,214)" opacity="0.5"/><circle cx="479.7" cy="466.2" r="1.1" fill="rgb(224,219,209)" opacity="0.9"/><circle cx="778.8" cy="232.6" r="0.9" fill="rgb(211,221,231)" opacity="1.0"/><circle cx="807.9" cy="511.9" r="0.7" fill="rgb(153,163,173)" opacity="0.5"/><circle cx="424.6" cy="499.9" r="0.8" fill="rgb(185,180,170)" opacity="0.8"/><circle cx="536.2" cy="217.0" r="0.7" fill="rgb(252,247,237)" opacity="0.5"/><circle cx="779.4" cy="427.9" r="1.0" fill="rgb(246,246,246)" opacity="0.8"/><circle cx="486.6" cy="184.6" r="0.7" fill="rgb(219,229,239)" opacity="0.9"/><circle cx="823.1" cy="482.0" r="0.9" fill="rgb(171,181,191)" opacity="0.9"/><circle cx="805.3" cy="268.6" r="0.7" fill="rgb(231,231,231)" opacity="1.0"/><circle cx="770.4" cy="299.6" r="0.8" fill="rgb(157,157,157)" opacity="0.8"/><circle cx="743.6" cy="547.4" r="0.7" fill="rgb(204,204,204)" opacity="1.0"/><circle cx="736.6" cy="379.2" r="1.0" fill="rgb(167,162,152)" opacity="0.8"/><circle cx="795.0" cy="428.6" r="0.7" fill="rgb(159,159,159)" opacity="0.65"/><circle cx="653.3" cy="534.7" r="0.6" fill="rgb(215,225,235)" opacity="0.8"/><circle cx="469.4" cy="440.5" r="1.0" fill="rgb(218,208,193)" opacity="0.5"/><circle cx="788.2" cy="392.4" r="1.3" fill="rgb(174,169,159)" opacity="0.65"/><circle cx="854.1" cy="249.0" r="0.9" fill="rgb(226,221,211)" opacity="0.5"/><circle cx="583.1" cy="438.2" r="0.7" fill="rgb(155,145,130)" opacity="0.65"/><circle cx="405.7" cy="404.2" r="0.7" fill="rgb(197,187,172)" opacity="1.0"/><circle cx="433.4" cy="315.2" r="1.3" fill="rgb(216,216,216)" opacity="0.5"/><circle cx="671.9" cy="325.8" r="1.1" fill="rgb(168,158,143)" opacity="0.8"/><circle cx="884.4" cy="356.4" r="0.8" fill="rgb(167,162,152)" opacity="0.65"/><circle cx="544.3" cy="571.3" r="1.3" fill="rgb(231,231,231)" opacity="0.65"/><circle cx="791.5" cy="112.8" r="1.3" fill="rgb(154,164,174)" opacity="0.8"/><circle cx="435.4" cy="404.6" r="0.7" fill="rgb(214,214,214)" opacity="0.9"/><circle cx="598.4" cy="561.9" r="1.0" fill="rgb(168,168,168)" opacity="0.8"/><circle cx="882.7" cy="258.8" r="0.8" fill="rgb(129,139,149)" opacity="1.0"/><circle cx="470.6" cy="319.2" r="1.1" fill="rgb(164,154,139)" opacity="1.0"/><circle cx="498.6" cy="294.4" r="0.8" fill="rgb(237,237,237)" opacity="0.5"/><circle cx="770.5" cy="349.4" r="1.1" fill="rgb(239,239,239)" opacity="0.65"/><circle cx="789.1" cy="196.6" r="0.8" fill="rgb(235,235,235)" opacity="1.0"/><circle cx="762.3" cy="129.4" r="0.8" fill="rgb(193,193,193)" opacity="1.0"/><circle cx="535.4" cy="271.4" r="0.7" fill="rgb(212,202,187)" opacity="0.8"/><circle cx="556.3" cy="120.5" r="0.7" fill="rgb(228,218,203)" opacity="0.9"/><circle cx="851.7" cy="489.2" r="1.1" fill="rgb(238,238,238)" opacity="0.8"/><circle cx="457.1" cy="173.6" r="1.1" fill="rgb(202,202,202)" opacity="0.8"/><circle cx="799.8" cy="330.0" r="0.7" fill="rgb(248,248,248)" opacity="1.0"/><circle cx="684.6" cy="345.3" r="0.8" fill="rgb(185,175,160)" opacity="0.5"/><circle cx="870.9" cy="192.6" r="0.8" fill="rgb(244,239,229)" opacity="0.9"/><circle cx="789.7" cy="451.0" r="0.7" fill="rgb(223,233,243)" opacity="0.65"/><circle cx="472.9" cy="152.9" r="1.3" fill="rgb(188,188,188)" opacity="0.5"/><circle cx="809.0" cy="571.0" r="0.7" fill="rgb(199,199,199)" opacity="0.65"/><circle cx="846.7" cy="358.1" r="0.7" fill="rgb(249,239,224)" opacity="0.8"/><circle cx="715.0" cy="528.4" r="1.1" fill="rgb(238,238,238)" opacity="0.5"/><circle cx="525.2" cy="538.3" r="1.0" fill="rgb(252,252,252)" opacity="0.5"/><circle cx="698.4" cy="160.2" r="0.8" fill="rgb(176,186,196)" opacity="1.0"/><circle cx="695.6" cy="407.6" r="1.1" fill="rgb(237,237,237)" opacity="1.0"/><circle cx="764.8" cy="125.1" r="1.1" fill="rgb(141,151,161)" opacity="0.65"/><circle cx="761.0" cy="326.7" r="1.1" fill="rgb(217,217,217)" opacity="0.5"/><circle cx="856.7" cy="389.5" r="0.7" fill="rgb(229,229,229)" opacity="0.65"/><circle cx="406.4" cy="373.5" r="0.8" fill="rgb(221,221,221)" opacity="0.65"/><circle cx="450.7" cy="572.4" r="0.6" fill="rgb(124,134,144)" opacity="0.5"/><circle cx="604.2" cy="555.5" r="0.8" fill="rgb(239,239,239)" opacity="1.0"/><circle cx="722.0" cy="544.9" r="0.8" fill="rgb(145,145,145)" opacity="0.9"/><circle cx="413.1" cy="466.2" r="0.7" fill="rgb(237,237,237)" opacity="0.65"/><circle cx="475.3" cy="355.6" r="1.3" fill="rgb(181,181,181)" opacity="1.0"/><circle cx="795.9" cy="530.5" r="0.6" fill="rgb(149,149,149)" opacity="1.0"/><circle cx="726.8" cy="140.5" r="1.3" fill="rgb(219,214,204)" opacity="1.0"/><circle cx="798.3" cy="359.7" r="0.6" fill="rgb(224,219,209)" opacity="1.0"/><circle cx="548.9" cy="291.5" r="0.6" fill="rgb(211,211,211)" opacity="0.5"/><circle cx="497.3" cy="344.9" r="1.1" fill="rgb(166,166,166)" opacity="0.65"/><circle cx="738.5" cy="575.9" r="0.7" fill="rgb(209,204,194)" opacity="0.8"/><circle cx="741.5" cy="141.6" r="0.8" fill="rgb(248,248,248)" opacity="0.5"/><circle cx="587.1" cy="245.8" r="0.8" fill="rgb(138,148,158)" opacity="1.0"/><circle cx="691.0" cy="261.4" r="0.8" fill="rgb(140,140,140)" opacity="0.5"/><circle cx="425.7" cy="430.2" r="0.8" fill="rgb(186,196,206)" opacity="0.9"/><circle cx="893.9" cy="547.0" r="0.8" fill="rgb(237,237,237)" opacity="0.5"/><circle cx="820.9" cy="446.6" r="0.6" fill="rgb(225,225,225)" opacity="0.9"/><circle cx="803.0" cy="125.6" r="0.8" fill="rgb(196,186,171)" opacity="0.65"/><circle cx="529.8" cy="244.8" r="0.9" fill="rgb(143,133,118)" opacity="0.9"/><circle cx="451.2" cy="313.8" r="1.1" fill="rgb(237,232,222)" opacity="0.8"/><circle cx="540.5" cy="220.1" r="1.0" fill="rgb(208,208,208)" opacity="0.8"/><circle cx="518.9" cy="528.8" r="0.9" fill="rgb(140,140,140)" opacity="0.8"/><circle cx="799.7" cy="357.0" r="0.7" fill="rgb(144,134,119)" opacity="0.9"/><circle cx="716.2" cy="277.1" r="1.3" fill="rgb(135,145,155)" opacity="0.65"/><circle cx="509.3" cy="124.9" r="1.3" fill="rgb(151,161,171)" opacity="1.0"/><circle cx="747.5" cy="568.2" r="0.7" fill="rgb(222,222,222)" opacity="0.65"/><circle cx="547.1" cy="538.7" r="0.6" fill="rgb(231,221,206)" opacity="0.9"/><circle cx="760.5" cy="579.0" r="0.7" fill="rgb(198,208,218)" opacity="1.0"/><circle cx="746.1" cy="434.0" r="0.8" fill="rgb(216,226,236)" opacity="0.65"/><circle cx="574.2" cy="564.9" r="0.7" fill="rgb(228,228,228)" opacity="0.8"/><circle cx="711.9" cy="417.1" r="0.7" fill="rgb(223,223,223)" opacity="1.0"/><circle cx="437.8" cy="288.7" r="0.7" fill="rgb(148,148,148)" opacity="1.0"/><circle cx="411.2" cy="274.3" r="0.7" fill="rgb(211,211,211)" opacity="0.9"/><circle cx="726.9" cy="346.5" r="0.8" fill="rgb(218,228,238)" opacity="0.65"/><circle cx="852.1" cy="222.6" r="1.0" fill="rgb(192,192,192)" opacity="0.9"/><circle cx="896.7" cy="524.9" r="1.1" fill="rgb(183,173,158)" opacity="0.65"/><circle cx="419.3" cy="500.9" r="0.8" fill="rgb(153,153,153)" opacity="0.8"/><circle cx="738.0" cy="233.7" r="0.6" fill="rgb(248,248,248)" opacity="0.5"/><circle cx="854.6" cy="175.6" r="0.8" fill="rgb(224,214,199)" opacity="0.65"/><circle cx="426.7" cy="332.5" r="0.6" fill="rgb(189,179,164)" opacity="0.5"/><circle cx="687.7" cy="207.3" r="0.7" fill="rgb(177,177,177)" opacity="0.8"/><circle cx="828.6" cy="162.1" r="0.9" fill="rgb(186,181,171)" opacity="0.65"/><circle cx="472.9" cy="481.2" r="0.8" fill="rgb(187,177,162)" opacity="0.65"/><circle cx="664.5" cy="153.1" r="0.8" fill="rgb(241,241,241)" opacity="0.8"/><circle cx="782.9" cy="551.1" r="0.6" fill="rgb(168,168,168)" opacity="0.65"/><circle cx="783.8" cy="512.8" r="0.8" fill="rgb(202,212,222)" opacity="0.8"/><circle cx="837.1" cy="123.5" r="1.0" fill="rgb(247,237,222)" opacity="0.65"/><circle cx="544.4" cy="328.2" r="1.1" fill="rgb(154,154,154)" opacity="0.9"/><circle cx="680.5" cy="337.7" r="1.0" fill="rgb(135,145,155)" opacity="0.9"/><circle cx="863.7" cy="540.3" r="1.0" fill="rgb(196,196,196)" opacity="0.5"/><circle cx="499.0" cy="228.1" r="1.1" fill="rgb(200,200,200)" opacity="0.8"/><circle cx="680.3" cy="133.7" r="0.8" fill="rgb(201,201,201)" opacity="1.0"/><circle cx="708.3" cy="584.0" r="1.0" fill="rgb(154,154,154)" opacity="0.9"/><circle cx="665.4" cy="215.3" r="0.7" fill="rgb(205,195,180)" opacity="0.65"/><circle cx="454.5" cy="330.5" r="1.1" fill="rgb(198,198,198)" opacity="0.5"/><circle cx="805.8" cy="405.0" r="0.7" fill="rgb(166,156,141)" opacity="0.8"/><circle cx="437.9" cy="440.2" r="1.1" fill="rgb(201,191,176)" opacity="0.65"/><circle cx="657.7" cy="403.4" r="1.3" fill="rgb(255,255,255)" opacity="0.9"/><circle cx="746.1" cy="114.6" r="0.8" fill="rgb(218,228,238)" opacity="1.0"/><circle cx="473.4" cy="275.8" r="1.0" fill="rgb(242,232,217)" opacity="0.5"/><circle cx="830.9" cy="277.3" r="0.7" fill="rgb(229,229,229)" opacity="0.5"/><circle cx="701.8" cy="536.3" r="0.7" fill="rgb(197,197,197)" opacity="0.5"/><circle cx="546.0" cy="572.1" r="0.8" fill="rgb(178,168,153)" opacity="1.0"/><circle cx="503.3" cy="131.1" r="0.6" fill="rgb(226,226,226)" opacity="0.5"/><circle cx="583.2" cy="333.8" r="0.7" fill="rgb(201,191,176)" opacity="1.0"/><circle cx="828.9" cy="459.1" r="0.8" fill="rgb(219,219,219)" opacity="0.65"/><circle cx="819.3" cy="196.9" r="1.1" fill="rgb(174,174,174)" opacity="0.8"/><circle cx="419.8" cy="185.1" r="1.0" fill="rgb(225,225,225)" opacity="1.0"/><circle cx="590.2" cy="177.6" r="0.6" fill="rgb(159,154,144)" opacity="0.8"/><circle cx="706.1" cy="329.4" r="1.3" fill="rgb(211,221,231)" opacity="0.65"/><circle cx="534.0" cy="371.6" r="0.8" fill="rgb(193,193,193)" opacity="0.65"/><circle cx="901.2" cy="164.6" r="0.9" fill="rgb(253,253,253)" opacity="0.65"/><circle cx="520.7" cy="180.2" r="1.1" fill="rgb(221,231,241)" opacity="0.8"/><circle cx="846.4" cy="419.9" r="0.7" fill="rgb(235,225,210)" opacity="0.9"/><circle cx="451.2" cy="310.3" r="0.7" fill="rgb(142,132,117)" opacity="0.5"/><circle cx="547.9" cy="567.9" r="0.7" fill="rgb(193,193,193)" opacity="1.0"/><circle cx="591.7" cy="244.6" r="1.3" fill="rgb(214,214,214)" opacity="0.9"/><circle cx="525.4" cy="418.2" r="0.9" fill="rgb(255,250,240)" opacity="1.0"/><circle cx="500.0" cy="135.9" r="0.8" fill="rgb(193,203,213)" opacity="0.65"/><circle cx="832.0" cy="562.9" r="0.8" fill="rgb(192,182,167)" opacity="1.0"/><circle cx="532.2" cy="497.7" r="0.6" fill="rgb(199,209,219)" opacity="0.65"/><circle cx="738.7" cy="486.8" r="0.6" fill="rgb(176,186,196)" opacity="0.8"/><circle cx="741.6" cy="442.9" r="0.7" fill="rgb(199,189,174)" opacity="0.65"/><circle cx="891.1" cy="142.1" r="0.8" fill="rgb(189,199,209)" opacity="0.9"/><circle cx="882.9" cy="535.5" r="0.8" fill="rgb(187,177,162)" opacity="0.9"/><circle cx="734.3" cy="470.9" r="0.7" fill="rgb(168,168,168)" opacity="0.8"/><circle cx="460.3" cy="346.3" r="1.0" fill="rgb(198,208,218)" opacity="0.5"/><circle cx="637.8" cy="319.2" r="0.9" fill="rgb(213,208,198)" opacity="0.8"/><circle cx="575.9" cy="466.8" r="0.9" fill="rgb(142,152,162)" opacity="0.5"/><circle cx="740.9" cy="477.8" r="1.0" fill="rgb(187,187,187)" opacity="0.8"/><circle cx="820.1" cy="410.4" r="0.8" fill="rgb(230,225,215)" opacity="0.65"/><circle cx="587.9" cy="511.4" r="0.8" fill="rgb(160,160,160)" opacity="1.0"/><circle cx="630.6" cy="422.0" r="0.6" fill="rgb(165,165,165)" opacity="1.0"/><circle cx="670.4" cy="450.9" r="0.8" fill="rgb(143,143,143)" opacity="0.5"/><circle cx="820.9" cy="140.6" r="0.8" fill="rgb(140,140,140)" opacity="0.65"/><circle cx="490.9" cy="535.8" r="0.8" fill="rgb(142,142,142)" opacity="0.5"/><circle cx="445.1" cy="141.9" r="0.8" fill="rgb(139,149,159)" opacity="0.8"/><circle cx="440.5" cy="268.2" r="0.8" fill="rgb(173,183,193)" opacity="0.8"/><circle cx="569.8" cy="548.7" r="0.8" fill="rgb(160,150,135)" opacity="0.5"/><circle cx="435.6" cy="124.4" r="0.8" fill="rgb(156,146,131)" opacity="0.8"/><circle cx="653.9" cy="167.4" r="1.3" fill="rgb(243,243,243)" opacity="0.65"/><circle cx="821.8" cy="304.1" r="0.8" fill="rgb(231,231,231)" opacity="0.65"/><circle cx="559.1" cy="134.0" r="1.1" fill="rgb(152,152,152)" opacity="1.0"/><circle cx="479.8" cy="484.0" r="1.1" fill="rgb(222,232,242)" opacity="0.65"/><circle cx="714.0" cy="499.1" r="1.1" fill="rgb(192,202,212)" opacity="0.65"/><circle cx="410.5" cy="551.8" r="0.8" fill="rgb(133,143,153)" opacity="0.65"/><circle cx="777.9" cy="342.1" r="1.3" fill="rgb(208,198,183)" opacity="0.5"/><circle cx="419.4" cy="450.3" r="0.8" fill="rgb(205,195,180)" opacity="0.65"/><circle cx="722.6" cy="434.2" r="0.8" fill="rgb(255,255,255)" opacity="0.65"/><circle cx="895.2" cy="581.7" r="0.8" fill="rgb(156,156,156)" opacity="0.5"/><circle cx="516.7" cy="473.1" r="0.8" fill="rgb(190,180,165)" opacity="1.0"/><circle cx="763.2" cy="126.0" r="0.9" fill="rgb(151,141,126)" opacity="0.5"/><circle cx="565.9" cy="213.6" r="0.7" fill="rgb(220,220,220)" opacity="0.9"/><circle cx="419.1" cy="254.5" r="1.3" fill="rgb(231,226,216)" opacity="0.8"/><circle cx="745.5" cy="330.1" r="0.8" fill="rgb(239,239,239)" opacity="0.5"/><circle cx="732.2" cy="401.5" r="1.0" fill="rgb(201,201,201)" opacity="0.8"/><circle cx="804.2" cy="348.1" r="1.1" fill="rgb(160,170,180)" opacity="0.9"/><circle cx="787.6" cy="279.3" r="1.1" fill="rgb(239,229,214)" opacity="1.0"/><circle cx="429.4" cy="472.0" r="0.7" fill="rgb(221,211,196)" opacity="0.65"/><circle cx="422.6" cy="574.9" r="1.3" fill="rgb(156,156,156)" opacity="0.9"/><circle cx="744.7" cy="116.0" r="0.7" fill="rgb(249,239,224)" opacity="0.9"/><circle cx="662.9" cy="169.2" r="0.7" fill="rgb(231,231,231)" opacity="0.5"/><circle cx="547.4" cy="471.4" r="0.7" fill="rgb(207,207,207)" opacity="0.5"/><circle cx="561.4" cy="496.0" r="1.0" fill="rgb(161,161,161)" opacity="0.65"/><circle cx="596.7" cy="490.4" r="0.9" fill="rgb(186,186,186)" opacity="0.65"/><circle cx="632.1" cy="366.7" r="0.7" fill="rgb(153,163,173)" opacity="0.9"/><circle cx="516.8" cy="188.7" r="0.8" fill="rgb(217,227,237)" opacity="0.9"/><circle cx="760.6" cy="455.0" r="0.7" fill="rgb(235,235,235)" opacity="0.9"/><circle cx="457.3" cy="493.5" r="0.9" fill="rgb(242,242,242)" opacity="0.5"/><circle cx="531.1" cy="326.6" r="0.7" fill="rgb(249,244,234)" opacity="0.8"/><circle cx="560.1" cy="452.8" r="0.9" fill="rgb(227,227,227)" opacity="0.9"/><circle cx="432.1" cy="99.1" r="0.8" fill="rgb(213,203,188)" opacity="0.5"/><circle cx="796.2" cy="222.4" r="0.6" fill="rgb(255,255,255)" opacity="0.8"/><circle cx="517.5" cy="253.1" r="0.8" fill="rgb(186,176,161)" opacity="0.8"/><circle cx="711.7" cy="290.3" r="0.8" fill="rgb(154,154,154)" opacity="0.5"/><defs><clipPath id="cw"><path d="M551 329 C549 315 545 305 543 295 C541 280 539 268 534 250 C532 240 529 235 526 231 C520 220 510 210 505 206 C500 200 497 196 496 192 C497 189 499 186 501 185 C504 182 507 179 509.5 177 C520 182 530 187 539 191.4 C550 198 558 203 566 208.4 C580 220 598 236 609 245 C613 249 616 253 617 260 C617.5 275 617 290 619 302 C622 308 630 309 638 309.5 C635 316 631 323 628 328 C610 332 580 333 551 329 Z"/></clipPath><clipPath id="cb"><path d="M484 370 C492 362 510 356 547 350 L551 329 C580 333 610 332 628 328 C640 333 650 338 661.5 340 C670 339 676 337 682 336 C692 333 703 329 717 324 C722 322.5 730 322 738 324 C748 327 754 330 758.5 333.5 C750 336 745 338 737.6 338.7 C725 339 710 340 696 341.5 C685 343 678 345 675 347 C668 350 662 354 648 362 C635 368 628 371 620 374 C600 380 580 381 560 381 C530 381 505 379 490 377 Z"/></clipPath></defs><path d="M484 370 C492 362 510 356 547 350 L551 329 C580 333 610 332 628 328 C640 333 650 338 661.5 340 C670 339 676 337 682 336 C692 333 703 329 717 324 C722 322.5 730 322 738 324 C748 327 754 330 758.5 333.5 C750 336 745 338 737.6 338.7 C725 339 710 340 696 341.5 C685 343 678 345 675 347 C668 350 662 354 648 362 C635 368 628 371 620 374 C600 380 580 381 560 381 C530 381 505 379 490 377 Z" fill="#646464"/><g clip-path="url(#cb)"><path d="M564.0 362.5 l-0.1 2.3" stroke="#474747" stroke-width="1"/><path d="M636.2 368.4 l0.0 2.4" stroke="#404040" stroke-width="1"/><path d="M545.4 346.6 l-1.3 3.2" stroke="#858585" stroke-width="1"/><path d="M571.7 339.6 l-0.2 3.5" stroke="#3a3a3a" stroke-width="1"/><path d="M633.6 348.3 l-1.4 2.5" stroke="#858585" stroke-width="1"/><path d="M602.2 333.8 l-1.4 3.1" stroke="#474747" stroke-width="1"/><path d="M555.2 368.4 l-0.1 2.8" stroke="#3a3a3a" stroke-width="1"/><path d="M584.4 352.2 l0.5 2.7" stroke="#404040" stroke-width="1"/><path d="M639.3 331.7 l-0.9 3.5" stroke="#404040" stroke-width="1"/><path d="M647.8 365.7 l-1.1 2.7" stroke="#3a3a3a" stroke-width="1"/><path d="M640.1 338.1 l1.2 2.6" stroke="#404040" stroke-width="1"/><path d="M587.0 350.6 l-0.5 2.7" stroke="#858585" stroke-width="1"/><path d="M575.6 369.7 l0.7 3.5" stroke="#404040" stroke-width="1"/><path d="M602.0 352.6 l0.2 2.5" stroke="#404040" stroke-width="1"/><path d="M657.7 333.6 l0.4 3.3" stroke="#404040" stroke-width="1"/><path d="M583.2 366.1 l-0.8 2.3" stroke="#474747" stroke-width="1"/><path d="M651.2 336.7 l-0.4 3.0" stroke="#858585" stroke-width="1"/><path d="M622.7 372.9 l-0.3 3.5" stroke="#404040" stroke-width="1"/><path d="M655.6 357.5 l-0.0 2.6" stroke="#474747" stroke-width="1"/><path d="M573.4 371.8 l0.2 2.7" stroke="#404040" stroke-width="1"/><path d="M591.9 365.1 l1.0 2.1" stroke="#3a3a3a" stroke-width="1"/><path d="M574.7 342.5 l-0.8 2.6" stroke="#858585" stroke-width="1"/><path d="M645.1 360.3 l1.5 3.1" stroke="#404040" stroke-width="1"/><path d="M600.1 340.6 l-1.4 2.3" stroke="#858585" stroke-width="1"/><path d="M641.4 367.8 l0.3 2.6" stroke="#474747" stroke-width="1"/><path d="M611.8 370.5 l-1.1 2.9" stroke="#474747" stroke-width="1"/><path d="M561.0 364.0 l0.6 3.4" stroke="#858585" stroke-width="1"/><path d="M547.7 357.7 l1.1 2.9" stroke="#404040" stroke-width="1"/><path d="M574.6 348.3 l-1.1 2.1" stroke="#404040" stroke-width="1"/><path d="M555.8 329.3 l0.9 2.1" stroke="#858585" stroke-width="1"/><path d="M558.7 342.1 l0.1 2.5" stroke="#474747" stroke-width="1"/><path d="M601.8 339.0 l-1.0 3.3" stroke="#404040" stroke-width="1"/><path d="M568.2 365.2 l0.3 2.8" stroke="#3a3a3a" stroke-width="1"/><path d="M630.7 330.8 l-0.3 3.3" stroke="#3a3a3a" stroke-width="1"/><path d="M590.8 356.3 l-0.7 3.0" stroke="#404040" stroke-width="1"/><path d="M581.1 330.1 l-1.0 3.1" stroke="#858585" stroke-width="1"/><path d="M658.9 368.9 l1.3 2.1" stroke="#858585" stroke-width="1"/><path d="M614.1 353.4 l1.4 2.5" stroke="#474747" stroke-width="1"/><path d="M625.4 354.3 l-1.3 3.2" stroke="#404040" stroke-width="1"/><path d="M657.3 345.8 l0.5 2.6" stroke="#474747" stroke-width="1"/><path d="M644.8 360.6 l0.0 3.4" stroke="#858585" stroke-width="1"/><path d="M623.2 363.3 l0.1 2.6" stroke="#858585" stroke-width="1"/><path d="M591.2 339.3 l0.5 2.1" stroke="#3a3a3a" stroke-width="1"/><path d="M576.7 357.5 l0.7 2.7" stroke="#858585" stroke-width="1"/><path d="M572.2 347.3 l-0.8 3.4" stroke="#858585" stroke-width="1"/><path d="M620.2 329.9 l-0.0 3.1" stroke="#404040" stroke-width="1"/><path d="M647.4 367.0 l-0.8 3.4" stroke="#474747" stroke-width="1"/><path d="M589.4 358.7 l-1.0 2.3" stroke="#3a3a3a" stroke-width="1"/><path d="M645.7 363.8 l0.2 2.1" stroke="#3a3a3a" stroke-width="1"/><path d="M579.8 375.2 l1.4 3.5" stroke="#858585" stroke-width="1"/><path d="M564.1 349.7 l-0.4 2.9" stroke="#474747" stroke-width="1"/><path d="M566.7 332.1 l-0.5 2.4" stroke="#3a3a3a" stroke-width="1"/><path d="M642.2 335.7 l-0.8 3.0" stroke="#404040" stroke-width="1"/><path d="M627.4 335.9 l-0.1 2.7" stroke="#858585" stroke-width="1"/><path d="M616.0 342.0 l0.5 2.9" stroke="#404040" stroke-width="1"/><path d="M556.4 376.8 l-1.4 3.2" stroke="#404040" stroke-width="1"/><path d="M652.5 363.2 l-1.3 2.9" stroke="#3a3a3a" stroke-width="1"/><path d="M590.8 350.1 l-0.8 2.0" stroke="#858585" stroke-width="1"/><path d="M607.6 332.7 l-0.9 2.6" stroke="#474747" stroke-width="1"/><path d="M545.3 336.3 l0.1 2.1" stroke="#858585" stroke-width="1"/><path d="M566.6 348.1 l-0.8 3.2" stroke="#404040" stroke-width="1"/><path d="M642.0 374.3 l0.5 2.1" stroke="#3a3a3a" stroke-width="1"/><path d="M595.1 369.6 l-1.0 2.7" stroke="#404040" stroke-width="1"/><path d="M605.6 354.8 l-0.1 3.2" stroke="#858585" stroke-width="1"/><path d="M583.9 341.5 l-0.6 3.0" stroke="#474747" stroke-width="1"/><path d="M546.1 368.3 l-0.9 2.1" stroke="#3a3a3a" stroke-width="1"/><path d="M640.3 346.0 l-1.3 2.1" stroke="#474747" stroke-width="1"/><path d="M601.9 362.0 l-1.0 2.2" stroke="#858585" stroke-width="1"/><path d="M652.0 354.9 l-0.9 2.3" stroke="#858585" stroke-width="1"/><path d="M654.7 349.2 l1.0 2.3" stroke="#474747" stroke-width="1"/><path d="M549.7 345.6 l-1.4 2.6" stroke="#404040" stroke-width="1"/><path d="M600.0 371.2 l0.9 3.4" stroke="#858585" stroke-width="1"/><path d="M623.1 338.9 l1.4 2.6" stroke="#3a3a3a" stroke-width="1"/><path d="M653.3 374.8 l-1.5 2.5" stroke="#474747" stroke-width="1"/><path d="M615.6 358.4 l0.4 2.2" stroke="#858585" stroke-width="1"/><path d="M652.0 354.8 l-0.9 3.5" stroke="#858585" stroke-width="1"/><path d="M608.8 366.8 l1.2 2.4" stroke="#474747" stroke-width="1"/><path d="M613.9 345.6 l0.2 3.5" stroke="#474747" stroke-width="1"/><path d="M649.8 375.7 l1.5 3.1" stroke="#3a3a3a" stroke-width="1"/><path d="M630.3 338.6 l1.2 2.8" stroke="#474747" stroke-width="1"/><path d="M559.1 340.0 l0.3 2.7" stroke="#858585" stroke-width="1"/><path d="M601.9 337.5 l-0.7 2.6" stroke="#404040" stroke-width="1"/><path d="M588.5 352.5 l-1.4 3.3" stroke="#474747" stroke-width="1"/><path d="M568.7 367.5 l0.3 3.2" stroke="#474747" stroke-width="1"/><path d="M629.7 364.5 l-0.4 2.6" stroke="#404040" stroke-width="1"/><path d="M545.4 361.2 l0.2 3.5" stroke="#474747" stroke-width="1"/><path d="M567.6 339.4 l0.5 2.0" stroke="#858585" stroke-width="1"/><path d="M650.4 334.6 l-0.1 2.6" stroke="#474747" stroke-width="1"/><path d="M617.3 357.9 l1.1 3.1" stroke="#3a3a3a" stroke-width="1"/><path d="M588.1 340.5 l0.9 3.4" stroke="#858585" stroke-width="1"/><path d="M567.9 370.4 l0.7 2.4" stroke="#3a3a3a" stroke-width="1"/><path d="M559.9 365.6 l-1.2 2.9" stroke="#474747" stroke-width="1"/><path d="M619.3 353.7 l-0.0 3.1" stroke="#404040" stroke-width="1"/><path d="M570.1 362.3 l1.3 2.8" stroke="#474747" stroke-width="1"/><path d="M546.1 370.1 l-1.3 3.0" stroke="#474747" stroke-width="1"/><path d="M592.6 334.2 l1.5 2.3" stroke="#3a3a3a" stroke-width="1"/><path d="M626.0 352.4 l-0.2 2.0" stroke="#474747" stroke-width="1"/><path d="M654.4 335.1 l0.8 3.0" stroke="#858585" stroke-width="1"/><path d="M597.5 353.7 l-0.2 2.3" stroke="#404040" stroke-width="1"/><path d="M643.0 372.9 l0.8 3.4" stroke="#404040" stroke-width="1"/><path d="M631.2 345.2 l-1.0 3.2" stroke="#404040" stroke-width="1"/><path d="M582.6 344.4 l1.4 2.7" stroke="#404040" stroke-width="1"/><path d="M568.2 328.5 l1.0 2.3" stroke="#404040" stroke-width="1"/><path d="M557.9 354.7 l0.4 2.2" stroke="#3a3a3a" stroke-width="1"/><path d="M559.3 363.0 l0.1 2.1" stroke="#404040" stroke-width="1"/><path d="M572.9 358.0 l-0.8 2.6" stroke="#3a3a3a" stroke-width="1"/><path d="M635.7 374.4 l-0.3 3.4" stroke="#3a3a3a" stroke-width="1"/><path d="M637.7 362.4 l-1.4 2.7" stroke="#858585" stroke-width="1"/><path d="M647.5 366.6 l-1.0 3.4" stroke="#858585" stroke-width="1"/><path d="M554.2 376.2 l0.7 2.8" stroke="#858585" stroke-width="1"/><path d="M563.9 345.0 l0.5 2.6" stroke="#858585" stroke-width="1"/><path d="M637.1 330.7 l0.3 2.7" stroke="#474747" stroke-width="1"/><path d="M639.4 334.9 l-0.6 2.6" stroke="#404040" stroke-width="1"/><path d="M576.0 361.9 l-1.4 3.1" stroke="#404040" stroke-width="1"/><path d="M640.2 353.6 l0.4 2.7" stroke="#3a3a3a" stroke-width="1"/><path d="M609.0 346.2 l-1.4 2.9" stroke="#404040" stroke-width="1"/><path d="M614.9 349.7 l-0.2 2.3" stroke="#3a3a3a" stroke-width="1"/><path d="M548.6 338.7 l-1.5 3.2" stroke="#474747" stroke-width="1"/><path d="M642.8 376.2 l0.7 2.8" stroke="#404040" stroke-width="1"/><path d="M588.2 342.0 l0.6 2.7" stroke="#404040" stroke-width="1"/><path d="M582.8 372.6 l-0.6 3.1" stroke="#404040" stroke-width="1"/><path d="M625.1 364.8 l1.1 2.4" stroke="#3a3a3a" stroke-width="1"/><path d="M659.6 344.4 l1.0 3.2" stroke="#858585" stroke-width="1"/><path d="M628.0 329.4 l1.2 2.3" stroke="#474747" stroke-width="1"/><path d="M658.2 366.3 l0.9 3.3" stroke="#404040" stroke-width="1"/><path d="M647.8 369.2 l-0.0 3.1" stroke="#404040" stroke-width="1"/><path d="M604.1 376.5 l-0.4 3.4" stroke="#858585" stroke-width="1"/><path d="M633.5 354.0 l-1.1 2.0" stroke="#3a3a3a" stroke-width="1"/><path d="M555.6 350.7 l-1.4 3.0" stroke="#858585" stroke-width="1"/><path d="M557.8 353.5 l0.5 3.3" stroke="#474747" stroke-width="1"/><path d="M578.5 366.3 l-0.7 2.0" stroke="#3a3a3a" stroke-width="1"/><path d="M592.1 367.6 l-0.1 3.4" stroke="#474747" stroke-width="1"/><path d="M646.4 341.3 l-1.1 2.5" stroke="#474747" stroke-width="1"/><path d="M652.7 345.6 l1.0 2.4" stroke="#404040" stroke-width="1"/><path d="M635.1 328.2 l-1.4 3.2" stroke="#474747" stroke-width="1"/><path d="M624.7 353.2 l0.9 2.3" stroke="#3a3a3a" stroke-width="1"/><path d="M610.9 355.7 l1.0 2.9" stroke="#404040" stroke-width="1"/><path d="M564.4 366.0 l-1.0 3.1" stroke="#3a3a3a" stroke-width="1"/><path d="M592.4 344.3 l-0.3 3.2" stroke="#858585" stroke-width="1"/><path d="M579.1 374.4 l-0.8 2.5" stroke="#3a3a3a" stroke-width="1"/><path d="M580.0 349.7 l1.5 2.1" stroke="#404040" stroke-width="1"/><path d="M655.9 373.9 l0.6 3.4" stroke="#858585" stroke-width="1"/><path d="M566.1 364.0 l1.4 3.3" stroke="#858585" stroke-width="1"/><path d="M649.8 332.2 l1.2 3.4" stroke="#858585" stroke-width="1"/><path d="M639.0 373.5 l0.7 2.0" stroke="#3a3a3a" stroke-width="1"/><path d="M580.6 335.1 l0.4 2.1" stroke="#3a3a3a" stroke-width="1"/><path d="M654.4 376.3 l-1.2 2.6" stroke="#858585" stroke-width="1"/><path d="M658.1 371.2 l-0.0 2.4" stroke="#858585" stroke-width="1"/><path d="M610.1 360.0 l-0.6 3.4" stroke="#404040" stroke-width="1"/><path d="M561.4 373.9 l0.2 3.2" stroke="#474747" stroke-width="1"/><path d="M590.1 365.2 l0.1 2.1" stroke="#474747" stroke-width="1"/><path d="M554.1 338.1 l-0.1 2.7" stroke="#404040" stroke-width="1"/><path d="M604.3 340.1 l-0.7 2.3" stroke="#858585" stroke-width="1"/><path d="M610.8 343.8 l0.1 3.1" stroke="#858585" stroke-width="1"/><path d="M617.8 374.4 l-0.9 2.3" stroke="#474747" stroke-width="1"/><path d="M607.2 376.0 l-1.2 3.1" stroke="#404040" stroke-width="1"/><path d="M575.5 365.5 l0.3 2.4" stroke="#858585" stroke-width="1"/><path d="M602.7 332.4 l1.0 2.8" stroke="#3a3a3a" stroke-width="1"/><path d="M552.2 377.7 l0.6 2.8" stroke="#404040" stroke-width="1"/><path d="M608.7 376.5 l0.4 3.0" stroke="#404040" stroke-width="1"/><path d="M659.6 370.4 l-0.7 3.0" stroke="#858585" stroke-width="1"/><path d="M594.6 328.8 l1.4 2.6" stroke="#474747" stroke-width="1"/><path d="M647.6 360.8 l1.3 2.9" stroke="#474747" stroke-width="1"/><path d="M643.6 352.6 l-1.3 2.5" stroke="#404040" stroke-width="1"/><path d="M588.0 345.1 l0.0 2.4" stroke="#858585" stroke-width="1"/><path d="M563.5 372.8 l-1.2 3.0" stroke="#404040" stroke-width="1"/><path d="M649.3 336.6 l-0.6 2.8" stroke="#404040" stroke-width="1"/><path d="M650.7 358.2 l1.4 3.3" stroke="#3a3a3a" stroke-width="1"/><path d="M600.3 371.0 l-1.0 2.6" stroke="#404040" stroke-width="1"/><path d="M639.4 351.2 l1.4 2.2" stroke="#3a3a3a" stroke-width="1"/><path d="M652.7 347.0 l-1.0 3.2" stroke="#858585" stroke-width="1"/><path d="M589.1 333.9 l0.4 3.2" stroke="#404040" stroke-width="1"/><path d="M556.4 377.0 l-1.2 2.6" stroke="#3a3a3a" stroke-width="1"/><path d="M620.1 355.5 l-0.7 3.2" stroke="#858585" stroke-width="1"/><path d="M650.3 330.7 l-1.1 2.8" stroke="#474747" stroke-width="1"/><path d="M555.2 370.1 l-0.3 3.0" stroke="#858585" stroke-width="1"/><path d="M638.8 366.1 l-0.3 3.0" stroke="#3a3a3a" stroke-width="1"/><path d="M551.2 367.7 l-0.8 2.4" stroke="#474747" stroke-width="1"/><path d="M611.0 356.0 l0.8 3.4" stroke="#404040" stroke-width="1"/><path d="M634.4 347.0 l1.2 3.3" stroke="#474747" stroke-width="1"/><path d="M637.8 343.7 l0.8 2.4" stroke="#474747" stroke-width="1"/><path d="M596.3 376.1 l1.4 2.1" stroke="#3a3a3a" stroke-width="1"/><path d="M558.5 352.9 l-0.5 3.3" stroke="#858585" stroke-width="1"/><path d="M593.7 347.5 l-1.3 3.3" stroke="#474747" stroke-width="1"/><path d="M565.4 365.5 l-0.9 2.9" stroke="#3a3a3a" stroke-width="1"/><path d="M605.9 376.3 l-0.0 3.4" stroke="#858585" stroke-width="1"/><path d="M631.5 335.3 l1.3 3.1" stroke="#858585" stroke-width="1"/><path d="M652.8 337.6 l-0.8 3.2" stroke="#404040" stroke-width="1"/><path d="M547.1 360.4 l-1.3 2.9" stroke="#404040" stroke-width="1"/><path d="M613.8 364.8 l1.3 2.4" stroke="#3a3a3a" stroke-width="1"/><path d="M555.7 357.1 l1.1 3.1" stroke="#474747" stroke-width="1"/><path d="M549.2 365.8 l1.3 3.2" stroke="#404040" stroke-width="1"/><path d="M593.6 331.1 l0.7 2.4" stroke="#858585" stroke-width="1"/><path d="M547.2 372.7 l1.4 2.8" stroke="#3a3a3a" stroke-width="1"/><path d="M612.8 343.8 l0.6 3.4" stroke="#858585" stroke-width="1"/><path d="M611.8 341.5 l-0.7 2.5" stroke="#3a3a3a" stroke-width="1"/><path d="M566.2 330.1 l0.2 3.2" stroke="#404040" stroke-width="1"/><path d="M603.8 336.1 l0.9 3.5" stroke="#404040" stroke-width="1"/><path d="M574.8 362.7 l0.9 2.5" stroke="#3a3a3a" stroke-width="1"/><path d="M599.6 367.2 l-1.3 3.5" stroke="#474747" stroke-width="1"/><path d="M630.0 345.0 l-0.8 2.2" stroke="#474747" stroke-width="1"/><path d="M599.9 360.4 l1.3 2.2" stroke="#858585" stroke-width="1"/><path d="M606.0 352.0 l1.3 2.1" stroke="#474747" stroke-width="1"/><path d="M565.7 369.5 l0.4 3.0" stroke="#404040" stroke-width="1"/><path d="M570.7 374.1 l-0.9 2.5" stroke="#404040" stroke-width="1"/><path d="M600.5 330.5 l-1.1 2.5" stroke="#404040" stroke-width="1"/><path d="M593.2 375.8 l-0.4 2.6" stroke="#474747" stroke-width="1"/><path d="M644.8 358.0 l1.1 2.0" stroke="#474747" stroke-width="1"/><path d="M635.2 340.3 l0.4 2.9" stroke="#474747" stroke-width="1"/><path d="M591.8 360.3 l-0.5 2.8" stroke="#474747" stroke-width="1"/><path d="M630.4 330.4 l0.9 2.2" stroke="#3a3a3a" stroke-width="1"/><path d="M622.4 350.7 l1.0 2.8" stroke="#404040" stroke-width="1"/><path d="M595.1 360.3 l0.1 3.5" stroke="#404040" stroke-width="1"/><path d="M607.6 345.1 l1.3 3.5" stroke="#3a3a3a" stroke-width="1"/><path d="M594.0 341.3 l-0.6 2.0" stroke="#3a3a3a" stroke-width="1"/><path d="M573.4 351.5 l-1.3 2.5" stroke="#404040" stroke-width="1"/><path d="M628.7 345.2 l1.4 3.3" stroke="#404040" stroke-width="1"/><path d="M586.1 369.0 l0.9 2.8" stroke="#404040" stroke-width="1"/><path d="M657.1 368.7 l1.1 2.1" stroke="#858585" stroke-width="1"/><path d="M564.7 345.7 l0.9 3.2" stroke="#404040" stroke-width="1"/><path d="M643.8 355.5 l-0.3 2.5" stroke="#858585" stroke-width="1"/><path d="M567.8 343.5 l0.1 3.2" stroke="#404040" stroke-width="1"/><path d="M588.0 361.9 l0.3 2.0" stroke="#474747" stroke-width="1"/><path d="M620.6 328.0 l-0.2 3.2" stroke="#474747" stroke-width="1"/><path d="M640.9 362.3 l-1.4 2.4" stroke="#3a3a3a" stroke-width="1"/><path d="M622.6 349.5 l-1.0 2.3" stroke="#858585" stroke-width="1"/><path d="M596.0 356.4 l-0.3 2.1" stroke="#858585" stroke-width="1"/><path d="M600.5 349.5 l-1.1 3.0" stroke="#404040" stroke-width="1"/><path d="M545.2 330.9 l-1.1 2.3" stroke="#474747" stroke-width="1"/><path d="M634.4 373.9 l-0.6 2.6" stroke="#3a3a3a" stroke-width="1"/><path d="M627.8 331.4 l0.8 2.8" stroke="#474747" stroke-width="1"/><path d="M593.5 375.0 l-0.2 3.5" stroke="#3a3a3a" stroke-width="1"/><path d="M559.9 372.9 l1.0 2.4" stroke="#858585" stroke-width="1"/><path d="M627.6 354.8 l0.6 2.8" stroke="#858585" stroke-width="1"/><path d="M555.4 371.0 l-0.8 2.4" stroke="#474747" stroke-width="1"/><path d="M593.8 332.8 l-1.5 3.5" stroke="#474747" stroke-width="1"/><path d="M584.0 376.3 l1.1 3.1" stroke="#3a3a3a" stroke-width="1"/><path d="M620.8 368.5 l-1.1 2.6" stroke="#474747" stroke-width="1"/><path d="M561.6 331.0 l0.7 2.2" stroke="#404040" stroke-width="1"/><path d="M650.2 358.0 l0.0 2.4" stroke="#858585" stroke-width="1"/><path d="M609.9 336.0 l1.4 2.5" stroke="#3a3a3a" stroke-width="1"/><path d="M595.0 342.3 l0.4 3.3" stroke="#474747" stroke-width="1"/><path d="M636.4 338.7 l0.3 2.7" stroke="#404040" stroke-width="1"/><path d="M582.3 352.2 l1.0 2.3" stroke="#3a3a3a" stroke-width="1"/><path d="M646.4 335.6 l-1.4 3.3" stroke="#858585" stroke-width="1"/><path d="M636.2 341.4 l0.4 2.8" stroke="#858585" stroke-width="1"/><path d="M620.2 371.7 l-1.2 3.2" stroke="#404040" stroke-width="1"/><path d="M596.8 364.1 l1.3 3.4" stroke="#3a3a3a" stroke-width="1"/><path d="M637.6 343.1 l-0.7 2.3" stroke="#3a3a3a" stroke-width="1"/><path d="M619.0 333.0 l-1.5 3.5" stroke="#404040" stroke-width="1"/><path d="M583.9 330.1 l0.8 2.8" stroke="#858585" stroke-width="1"/><path d="M583.0 353.6 l1.0 2.5" stroke="#3a3a3a" stroke-width="1"/><path d="M654.3 367.9 l-0.4 2.9" stroke="#3a3a3a" stroke-width="1"/><path d="M653.6 375.4 l-0.2 3.5" stroke="#404040" stroke-width="1"/><path d="M651.2 353.8 l0.9 2.3" stroke="#858585" stroke-width="1"/><path d="M637.0 341.8 l0.9 2.2" stroke="#404040" stroke-width="1"/><path d="M655.8 346.6 l0.2 3.3" stroke="#404040" stroke-width="1"/><path d="M601.3 329.5 l1.1 2.6" stroke="#3a3a3a" stroke-width="1"/><path d="M640.0 350.3 l-1.0 2.7" stroke="#474747" stroke-width="1"/><path d="M651.5 357.2 l-1.0 2.6" stroke="#858585" stroke-width="1"/><path d="M611.7 347.2 l0.1 3.4" stroke="#3a3a3a" stroke-width="1"/><path d="M546.0 367.7 l-0.6 2.4" stroke="#404040" stroke-width="1"/><path d="M583.1 355.1 l0.6 3.2" stroke="#404040" stroke-width="1"/><path d="M607.1 343.9 l0.7 2.0" stroke="#858585" stroke-width="1"/><path d="M548.1 366.0 l-0.1 2.2" stroke="#858585" stroke-width="1"/><path d="M605.6 333.5 l-0.5 3.4" stroke="#474747" stroke-width="1"/><path d="M597.1 363.2 l-0.8 2.1" stroke="#858585" stroke-width="1"/><path d="M548.2 334.3 l-1.4 3.1" stroke="#3a3a3a" stroke-width="1"/><path d="M597.4 357.4 l1.2 2.6" stroke="#474747" stroke-width="1"/><path d="M592.9 369.3 l-1.1 3.4" stroke="#404040" stroke-width="1"/><path d="M557.3 338.0 l0.4 2.7" stroke="#3a3a3a" stroke-width="1"/><path d="M573.1 363.7 l0.6 2.6" stroke="#3a3a3a" stroke-width="1"/><path d="M630.2 347.6 l-0.5 3.0" stroke="#404040" stroke-width="1"/><path d="M636.8 367.6 l0.1 2.7" stroke="#404040" stroke-width="1"/><path d="M616.8 339.6 l1.5 2.2" stroke="#404040" stroke-width="1"/><path d="M656.7 376.3 l-1.2 2.9" stroke="#858585" stroke-width="1"/><path d="M550.5 350.4 l0.8 3.2" stroke="#474747" stroke-width="1"/><path d="M558.3 358.1 l1.2 3.1" stroke="#404040" stroke-width="1"/><path d="M642.7 343.1 l-0.8 3.4" stroke="#858585" stroke-width="1"/><path d="M545.7 368.1 l-0.0 3.1" stroke="#474747" stroke-width="1"/><path d="M599.5 356.0 l1.3 3.3" stroke="#474747" stroke-width="1"/><path d="M621.6 344.9 l-0.5 3.2" stroke="#858585" stroke-width="1"/><path d="M608.6 371.3 l-0.9 2.5" stroke="#404040" stroke-width="1"/><path d="M554.8 344.8 l-0.3 2.8" stroke="#404040" stroke-width="1"/><path d="M607.6 332.5 l0.8 2.4" stroke="#858585" stroke-width="1"/><path d="M578.4 350.9 l-1.0 2.3" stroke="#3a3a3a" stroke-width="1"/><path d="M588.6 365.0 l-0.9 3.5" stroke="#858585" stroke-width="1"/><path d="M599.2 358.3 l-1.0 2.1" stroke="#858585" stroke-width="1"/><path d="M559.3 354.5 l1.1 3.3" stroke="#3a3a3a" stroke-width="1"/><path d="M640.2 345.2 l0.8 2.4" stroke="#474747" stroke-width="1"/><path d="M637.7 369.4 l-1.4 2.7" stroke="#3a3a3a" stroke-width="1"/><path d="M659.5 331.5 l1.2 3.0" stroke="#474747" stroke-width="1"/><path d="M643.8 331.8 l0.6 3.4" stroke="#858585" stroke-width="1"/><path d="M564.0 331.2 l-1.0 2.6" stroke="#858585" stroke-width="1"/><path d="M630.5 351.5 l0.8 2.7" stroke="#3a3a3a" stroke-width="1"/><path d="M550.2 355.5 l-0.6 3.1" stroke="#3a3a3a" stroke-width="1"/><path d="M602.3 339.3 l1.4 2.2" stroke="#858585" stroke-width="1"/><path d="M641.1 359.0 l-0.5 3.2" stroke="#404040" stroke-width="1"/><path d="M588.6 372.3 l-1.4 2.1" stroke="#474747" stroke-width="1"/><path d="M602.8 328.6 l-0.6 2.8" stroke="#858585" stroke-width="1"/><path d="M480 370 C500 362 530 356 547 352 C555 365 580 375 622 374 C600 381 560 383 480 378 Z" fill="#848484"/><path d="M486 368 C505 366 525 365 548 366" stroke="#3a3a3a" stroke-width="1.2" fill="none"/><path d="M490 373 C515 372 535 371 560 373" stroke="#5a5a5a" stroke-width="1" fill="none"/><path d="M655 341 C670 339 676 337 682 336 C692 333 703 329 717 324 C722 322.5 730 322 738 324 C748 327 754 330 758.5 333.5 C750 336 745 338 737.6 338.7 C725 339 710 340 696 341.5 C685 343 678 345 675 347 C668 350 662 354 652 360 C655 352 657 346 655 341 Z" fill="#333"/><circle cx="743.3" cy="331.4" r=".6" fill="#555"/><circle cx="732.7" cy="325.4" r=".6" fill="#555"/><circle cx="702.3" cy="338.0" r=".6" fill="#555"/><circle cx="704.5" cy="326.1" r=".6" fill="#555"/><circle cx="741.6" cy="329.9" r=".6" fill="#555"/><circle cx="746.7" cy="328.9" r=".6" fill="#555"/><circle cx="738.6" cy="324.7" r=".6" fill="#555"/><circle cx="724.1" cy="342.9" r=".6" fill="#555"/><circle cx="719.6" cy="331.1" r=".6" fill="#555"/><circle cx="753.2" cy="343.3" r=".6" fill="#555"/><circle cx="738.1" cy="326.9" r=".6" fill="#555"/><circle cx="668.5" cy="335.5" r=".6" fill="#555"/><circle cx="672.7" cy="323.3" r=".6" fill="#555"/><circle cx="712.8" cy="342.8" r=".6" fill="#555"/><circle cx="685.7" cy="340.1" r=".6" fill="#555"/><circle cx="751.3" cy="342.7" r=".6" fill="#555"/><circle cx="667.7" cy="325.0" r=".6" fill="#555"/><circle cx="750.8" cy="343.2" r=".6" fill="#555"/><circle cx="676.3" cy="326.0" r=".6" fill="#555"/><circle cx="727.7" cy="324.1" r=".6" fill="#555"/><circle cx="669.9" cy="325.5" r=".6" fill="#555"/><circle cx="714.9" cy="330.2" r=".6" fill="#555"/><circle cx="740.0" cy="325.4" r=".6" fill="#555"/><circle cx="745.2" cy="339.3" r=".6" fill="#555"/><circle cx="695.6" cy="335.3" r=".6" fill="#555"/><circle cx="724.3" cy="324.7" r=".6" fill="#555"/><circle cx="748.6" cy="331.7" r=".6" fill="#555"/><circle cx="708.9" cy="340.7" r=".6" fill="#555"/><circle cx="662.0" cy="327.9" r=".6" fill="#555"/><circle cx="662.9" cy="338.2" r=".6" fill="#555"/><circle cx="680.8" cy="337.8" r=".6" fill="#555"/><circle cx="728.2" cy="343.9" r=".6" fill="#555"/><circle cx="677.1" cy="331.1" r=".6" fill="#555"/><circle cx="734.9" cy="331.8" r=".6" fill="#555"/><circle cx="676.7" cy="336.8" r=".6" fill="#555"/><circle cx="735.5" cy="331.8" r=".6" fill="#555"/><circle cx="696.3" cy="324.9" r=".6" fill="#555"/><circle cx="698.6" cy="340.5" r=".6" fill="#555"/><circle cx="693.7" cy="343.0" r=".6" fill="#555"/><circle cx="694.0" cy="332.5" r=".6" fill="#555"/><path d="M758 334 C745 338 725 339 696 341.5 C685 343 678 345 675 347 C668 350 662 354 648 362" stroke="#8a8a8a" stroke-width="1.4" fill="none"/><path d="M722.4 324.2 L739 337.4 L722.4 338.7 Z" fill="#9c9c9c"/><path d="M741 328 L757 333 M742 331 L756 334" stroke="#777" stroke-width=".8"/></g><path d="M551 329 C549 315 545 305 543 295 C541 280 539 268 534 250 C532 240 529 235 526 231 C520 220 510 210 505 206 C500 200 497 196 496 192 C497 189 499 186 501 185 C504 182 507 179 509.5 177 C520 182 530 187 539 191.4 C550 198 558 203 566 208.4 C580 220 598 236 609 245 C613 249 616 253 617 260 C617.5 275 617 290 619 302 C622 308 630 309 638 309.5 C635 316 631 323 628 328 C610 332 580 333 551 329 Z" fill="#575757"/><g clip-path="url(#cw)"><path d="M480 168.0 Q520 172.0 560 184.0 T650 208.0" stroke="#262626" stroke-width="1.4" fill="none"/><path d="M480 170.0 Q520 174.0 560 186.0 T650 210.0" stroke="#909090" stroke-width=".9" fill="none"/><path d="M480 172.3 Q520 176.3 560 188.3 T650 212.3" stroke="#262626" stroke-width="1.4" fill="none"/><path d="M480 174.3 Q520 178.3 560 190.3 T650 214.3" stroke="#909090" stroke-width=".9" fill="none"/><path d="M480 176.6 Q520 180.6 560 192.6 T650 216.6" stroke="#262626" stroke-width="1.4" fill="none"/><path d="M480 178.6 Q520 182.6 560 194.6 T650 218.6" stroke="#909090" stroke-width=".9" fill="none"/><path d="M480 180.9 Q520 184.9 560 196.9 T650 220.9" stroke="#262626" stroke-width="1.4" fill="none"/><path d="M480 182.9 Q520 186.9 560 198.9 T650 222.9" stroke="#909090" stroke-width=".9" fill="none"/><path d="M480 185.2 Q520 189.2 560 201.2 T650 225.2" stroke="#262626" stroke-width="1.4" fill="none"/><path d="M480 187.2 Q520 191.2 560 203.2 T650 227.2" stroke="#909090" stroke-width=".9" fill="none"/><path d="M480 189.5 Q520 193.5 560 205.5 T650 229.5" stroke="#262626" stroke-width="1.4" fill="none"/><path d="M480 191.5 Q520 195.5 560 207.5 T650 231.5" stroke="#909090" stroke-width=".9" fill="none"/><path d="M480 193.8 Q520 197.8 560 209.8 T650 233.8" stroke="#262626" stroke-width="1.4" fill="none"/><path d="M480 195.8 Q520 199.8 560 211.8 T650 235.8" stroke="#909090" stroke-width=".9" fill="none"/><path d="M480 198.1 Q520 202.1 560 214.1 T650 238.1" stroke="#262626" stroke-width="1.4" fill="none"/><path d="M480 200.1 Q520 204.1 560 216.1 T650 240.1" stroke="#909090" stroke-width=".9" fill="none"/><path d="M480 202.4 Q520 206.4 560 218.4 T650 242.4" stroke="#262626" stroke-width="1.4" fill="none"/><path d="M480 204.4 Q520 208.4 560 220.4 T650 244.4" stroke="#909090" stroke-width=".9" fill="none"/><path d="M480 206.7 Q520 210.7 560 222.7 T650 246.7" stroke="#262626" stroke-width="1.4" fill="none"/><path d="M480 208.7 Q520 212.7 560 224.7 T650 248.7" stroke="#909090" stroke-width=".9" fill="none"/><path d="M480 211.0 Q520 215.0 560 227.0 T650 251.0" stroke="#262626" stroke-width="1.4" fill="none"/><path d="M480 213.0 Q520 217.0 560 229.0 T650 253.0" stroke="#909090" stroke-width=".9" fill="none"/><path d="M480 215.3 Q520 219.3 560 231.3 T650 255.3" stroke="#262626" stroke-width="1.4" fill="none"/><path d="M480 217.3 Q520 221.3 560 233.3 T650 257.3" stroke="#909090" stroke-width=".9" fill="none"/><path d="M480 219.6 Q520 223.6 560 235.6 T650 259.6" stroke="#262626" stroke-width="1.4" fill="none"/><path d="M480 221.6 Q520 225.6 560 237.6 T650 261.6" stroke="#909090" stroke-width=".9" fill="none"/><path d="M480 223.9 Q520 227.9 560 239.9 T650 263.9" stroke="#262626" stroke-width="1.4" fill="none"/><path d="M480 225.9 Q520 229.9 560 241.9 T650 265.9" stroke="#909090" stroke-width=".9" fill="none"/><path d="M480 228.2 Q520 232.2 560 244.2 T650 268.2" stroke="#262626" stroke-width="1.4" fill="none"/><path d="M480 230.2 Q520 234.2 560 246.2 T650 270.2" stroke="#909090" stroke-width=".9" fill="none"/><path d="M480 232.5 Q520 236.5 560 248.5 T650 272.5" stroke="#262626" stroke-width="1.4" fill="none"/><path d="M480 234.5 Q520 238.5 560 250.5 T650 274.5" stroke="#909090" stroke-width=".9" fill="none"/><path d="M480 236.8 Q520 240.8 560 252.8 T650 276.8" stroke="#262626" stroke-width="1.4" fill="none"/><path d="M480 238.8 Q520 242.8 560 254.8 T650 278.8" stroke="#909090" stroke-width=".9" fill="none"/><path d="M480 241.1 Q520 245.1 560 257.1 T650 281.1" stroke="#262626" stroke-width="1.4" fill="none"/><path d="M480 243.1 Q520 247.1 560 259.1 T650 283.1" stroke="#909090" stroke-width=".9" fill="none"/><path d="M480 245.4 Q520 249.4 560 261.4 T650 285.4" stroke="#262626" stroke-width="1.4" fill="none"/><path d="M480 247.4 Q520 251.4 560 263.4 T650 287.4" stroke="#909090" stroke-width=".9" fill="none"/><path d="M480 249.7 Q520 253.7 560 265.7 T650 289.7" stroke="#262626" stroke-width="1.4" fill="none"/><path d="M480 251.7 Q520 255.7 560 267.7 T650 291.7" stroke="#909090" stroke-width=".9" fill="none"/><path d="M480 254.0 Q520 258.0 560 270.0 T650 294.0" stroke="#262626" stroke-width="1.4" fill="none"/><path d="M480 256.0 Q520 260.0 560 272.0 T650 296.0" stroke="#909090" stroke-width=".9" fill="none"/><path d="M480 258.3 Q520 262.3 560 274.3 T650 298.3" stroke="#262626" stroke-width="1.4" fill="none"/><path d="M480 260.3 Q520 264.3 560 276.3 T650 300.3" stroke="#909090" stroke-width=".9" fill="none"/><path d="M480 262.6 Q520 266.6 560 278.6 T650 302.6" stroke="#262626" stroke-width="1.4" fill="none"/><path d="M480 264.6 Q520 268.6 560 280.6 T650 304.6" stroke="#909090" stroke-width=".9" fill="none"/><path d="M480 266.9 Q520 270.9 560 282.9 T650 306.9" stroke="#262626" stroke-width="1.4" fill="none"/><path d="M480 268.9 Q520 272.9 560 284.9 T650 308.9" stroke="#909090" stroke-width=".9" fill="none"/><path d="M480 271.2 Q520 275.2 560 287.2 T650 311.2" stroke="#262626" stroke-width="1.4" fill="none"/><path d="M480 273.2 Q520 277.2 560 289.2 T650 313.2" stroke="#909090" stroke-width=".9" fill="none"/><path d="M480 275.5 Q520 279.5 560 291.5 T650 315.5" stroke="#262626" stroke-width="1.4" fill="none"/><path d="M480 277.5 Q520 281.5 560 293.5 T650 317.5" stroke="#909090" stroke-width=".9" fill="none"/><path d="M480 279.8 Q520 283.8 560 295.8 T650 319.8" stroke="#262626" stroke-width="1.4" fill="none"/><path d="M480 281.8 Q520 285.8 560 297.8 T650 321.8" stroke="#909090" stroke-width=".9" fill="none"/><path d="M480 284.1 Q520 288.1 560 300.1 T650 324.1" stroke="#262626" stroke-width="1.4" fill="none"/><path d="M480 286.1 Q520 290.1 560 302.1 T650 326.1" stroke="#909090" stroke-width=".9" fill="none"/><path d="M480 288.4 Q520 292.4 560 304.4 T650 328.4" stroke="#262626" stroke-width="1.4" fill="none"/><path d="M480 290.4 Q520 294.4 560 306.4 T650 330.4" stroke="#909090" stroke-width=".9" fill="none"/><path d="M480 292.7 Q520 296.7 560 308.7 T650 332.7" stroke="#262626" stroke-width="1.4" fill="none"/><path d="M480 294.7 Q520 298.7 560 310.7 T650 334.7" stroke="#909090" stroke-width=".9" fill="none"/><path d="M480 297.0 Q520 301.0 560 313.0 T650 337.0" stroke="#262626" stroke-width="1.4" fill="none"/><path d="M480 299.0 Q520 303.0 560 315.0 T650 339.0" stroke="#909090" stroke-width=".9" fill="none"/><path d="M480 301.3 Q520 305.3 560 317.3 T650 341.3" stroke="#262626" stroke-width="1.4" fill="none"/><path d="M480 303.3 Q520 307.3 560 319.3 T650 343.3" stroke="#909090" stroke-width=".9" fill="none"/><path d="M480 305.6 Q520 309.6 560 321.6 T650 345.6" stroke="#262626" stroke-width="1.4" fill="none"/><path d="M480 307.6 Q520 311.6 560 323.6 T650 347.6" stroke="#909090" stroke-width=".9" fill="none"/><path d="M480 309.9 Q520 313.9 560 325.9 T650 349.9" stroke="#262626" stroke-width="1.4" fill="none"/><path d="M480 311.9 Q520 315.9 560 327.9 T650 351.9" stroke="#909090" stroke-width=".9" fill="none"/><path d="M480 314.2 Q520 318.2 560 330.2 T650 354.2" stroke="#262626" stroke-width="1.4" fill="none"/><path d="M480 316.2 Q520 320.2 560 332.2 T650 356.2" stroke="#909090" stroke-width=".9" fill="none"/><path d="M480 318.5 Q520 322.5 560 334.5 T650 358.5" stroke="#262626" stroke-width="1.4" fill="none"/><path d="M480 320.5 Q520 324.5 560 336.5 T650 360.5" stroke="#909090" stroke-width=".9" fill="none"/><path d="M480 322.8 Q520 326.8 560 338.8 T650 362.8" stroke="#262626" stroke-width="1.4" fill="none"/><path d="M480 324.8 Q520 328.8 560 340.8 T650 364.8" stroke="#909090" stroke-width=".9" fill="none"/><path d="M480 327.1 Q520 331.1 560 343.1 T650 367.1" stroke="#262626" stroke-width="1.4" fill="none"/><path d="M480 329.1 Q520 333.1 560 345.1 T650 369.1" stroke="#909090" stroke-width=".9" fill="none"/><path d="M480 331.4 Q520 335.4 560 347.4 T650 371.4" stroke="#262626" stroke-width="1.4" fill="none"/><path d="M480 333.4 Q520 337.4 560 349.4 T650 373.4" stroke="#909090" stroke-width=".9" fill="none"/><path d="M480 335.7 Q520 339.7 560 351.7 T650 375.7" stroke="#262626" stroke-width="1.4" fill="none"/><path d="M480 337.7 Q520 341.7 560 353.7 T650 377.7" stroke="#909090" stroke-width=".9" fill="none"/><clipPath id="cs"><path d="M579 262 C579 280 579 295 579 301 C575 305 570 307 567 309 C563 315 560 322 559 329 L628 328 C631 323 635 316 638 309.5 C630 309 622 308 619 302 C617 290 617.5 275 617 262 C605 258 590 258 579 262 Z"/></clipPath><path d="M579 262 C579 280 579 295 579 301 C575 305 570 307 567 309 C563 315 560 322 559 329 L628 328 C631 323 635 316 638 309.5 C630 309 622 308 619 302 C617 290 617.5 275 617 262 C605 258 590 258 579 262 Z" fill="#606060"/><g clip-path="url(#cs)"><path d="M572 250 C573 280 574 300 575 335" stroke="#2c2c2c" stroke-width="1.2" fill="none"/><path d="M574 250 C575 280 576 300 577 335" stroke="#8a8a8a" stroke-width=".8" fill="none"/><path d="M576 250 C577 280 578 300 579 335" stroke="#2c2c2c" stroke-width="1.2" fill="none"/><path d="M578 250 C579 280 580 300 581 335" stroke="#8a8a8a" stroke-width=".8" fill="none"/><path d="M580 250 C581 280 582 300 583 335" stroke="#2c2c2c" stroke-width="1.2" fill="none"/><path d="M582 250 C583 280 584 300 585 335" stroke="#8a8a8a" stroke-width=".8" fill="none"/><path d="M584 250 C585 280 586 300 587 335" stroke="#2c2c2c" stroke-width="1.2" fill="none"/><path d="M586 250 C587 280 588 300 589 335" stroke="#8a8a8a" stroke-width=".8" fill="none"/><path d="M588 250 C589 280 590 300 591 335" stroke="#2c2c2c" stroke-width="1.2" fill="none"/><path d="M590 250 C591 280 592 300 593 335" stroke="#8a8a8a" stroke-width=".8" fill="none"/><path d="M592 250 C593 280 594 300 595 335" stroke="#2c2c2c" stroke-width="1.2" fill="none"/><path d="M594 250 C595 280 596 300 597 335" stroke="#8a8a8a" stroke-width=".8" fill="none"/><path d="M596 250 C597 280 598 300 599 335" stroke="#2c2c2c" stroke-width="1.2" fill="none"/><path d="M598 250 C599 280 600 300 601 335" stroke="#8a8a8a" stroke-width=".8" fill="none"/><path d="M600 250 C601 280 602 300 603 335" stroke="#2c2c2c" stroke-width="1.2" fill="none"/><path d="M602 250 C603 280 604 300 605 335" stroke="#8a8a8a" stroke-width=".8" fill="none"/><path d="M604 250 C605 280 606 300 607 335" stroke="#2c2c2c" stroke-width="1.2" fill="none"/><path d="M606 250 C607 280 608 300 609 335" stroke="#8a8a8a" stroke-width=".8" fill="none"/><path d="M608 250 C609 280 610 300 611 335" stroke="#2c2c2c" stroke-width="1.2" fill="none"/><path d="M610 250 C611 280 612 300 613 335" stroke="#8a8a8a" stroke-width=".8" fill="none"/><path d="M612 250 C613 280 614 300 615 335" stroke="#2c2c2c" stroke-width="1.2" fill="none"/><path d="M614 250 C615 280 616 300 617 335" stroke="#8a8a8a" stroke-width=".8" fill="none"/><path d="M616 250 C617 280 618 300 619 335" stroke="#2c2c2c" stroke-width="1.2" fill="none"/><path d="M618 250 C619 280 620 300 621 335" stroke="#8a8a8a" stroke-width=".8" fill="none"/><path d="M620 250 C621 280 622 300 623 335" stroke="#2c2c2c" stroke-width="1.2" fill="none"/><path d="M622 250 C623 280 624 300 625 335" stroke="#8a8a8a" stroke-width=".8" fill="none"/><path d="M624 250 C625 280 626 300 627 335" stroke="#2c2c2c" stroke-width="1.2" fill="none"/><path d="M626 250 C627 280 628 300 629 335" stroke="#8a8a8a" stroke-width=".8" fill="none"/><path d="M628 250 C629 280 630 300 631 335" stroke="#2c2c2c" stroke-width="1.2" fill="none"/><path d="M630 250 C631 280 632 300 633 335" stroke="#8a8a8a" stroke-width=".8" fill="none"/><path d="M632 250 C633 280 634 300 635 335" stroke="#2c2c2c" stroke-width="1.2" fill="none"/><path d="M634 250 C635 280 636 300 637 335" stroke="#8a8a8a" stroke-width=".8" fill="none"/></g></g><path d="M551 329 C549 315 545 305 543 295 C541 280 539 268 534 250 C532 240 529 235 526 231 C520 220 510 210 505 206 C500 200 497 196 496 192 C497 189 499 186 501 185 C504 182 507 179 509.5 177 C520 182 530 187 539 191.4 C550 198 558 203 566 208.4 C580 220 598 236 609 245 C613 249 616 253 617 260 C617.5 275 617 290 619 302 C622 308 630 309 638 309.5 C635 316 631 323 628 328 C610 332 580 333 551 329 Z" fill="none" stroke="#8a8a8a" stroke-width=".8"/></svg></div>
<div style="position:absolute;left:404px;top:584px;width:498px;height:2px;background:repeating-linear-gradient(to right,#e6ef3a 0 3.5px,#050505 3.5px 8px);background-position:-1px 0"></div>
<div style="position:absolute;left:404px;top:586px;width:498px;height:66px;background:#efefef"></div>
<div style="position:absolute;left:86px;top:652px;width:816px;height:1px;background:#fdfdfd"></div>
<div style="position:absolute;left:113px;top:657px;width:788px;height:6px;background:#b4b4b4;border-radius:3px"></div>
<div style="position:absolute;left:125px;top:657px;width:573px;height:6px;background:#3daee9;border-radius:3px"></div>
<div style="position:absolute;left:94px;top:655px;width:10px;height:10px;border:1px solid #777;background:#f4f4f4"></div>
<div style="position:absolute;left:85px;top:656px;width:1px;height:16px;background:#777"></div>
<div style="position:absolute;left:909px;top:105px;width:6px;height:541px;background:#b4b4b4;border-radius:3px"></div>
<div style="position:absolute;left:909px;top:194px;width:6px;height:452px;background:#3daee9;border-radius:0 0 3px 3px"></div>
<svg style="left:907px;top:652px" width="15" height="15" viewBox="0 0 15 15"><path d="M7.5 0 V15 M0 7.5 H15" stroke="#333" stroke-width="1.2"/><path d="M4 4 L11 11 M11 4 L4 11" stroke="#555" stroke-width=".8"/></svg>
<div style="position:absolute;left:933px;top:71px;width:160px;height:308px;background:#eff0f1;border:1px solid #bdbdbd;border-radius:0 0 3px 3px"></div>
<div style="position:absolute;left:933px;top:43px;width:32px;height:29px;background:#eff0f2;border:1px solid #bdbdbd;border-bottom:none;border-radius:3px 3px 0 0"></div>
<div style="position:absolute;left:964px;top:45px;width:32px;height:27px;background:#d1d1d1"></div>
<div style="position:absolute;left:995px;top:45px;width:32px;height:27px;background:#d1d1d1;border-left:1px solid #bdbdbd"></div>
<svg style="left:941px;top:49px" width="17" height="18" viewBox="0 0 17 18">
<path d="M3 12 L5 9 L15 9 L13 12 Z M3 15 L5 12 L15 12 L13 15 Z" fill="#dcdcdc" stroke="#8a8a8a" stroke-width=".9"/>
<path d="M2 9 L5 2 L16 2 L13 9 Z" fill="#e6e6e6" stroke="#7a7a7a" stroke-width="1"/></svg>
<svg style="left:974px;top:51px" width="12" height="16" viewBox="0 0 12 16">
<rect x="0.5" y="0.5" width="11" height="15" rx="2" fill="#3d6aa8"/>
<rect x="0.5" y="0.5" width="11" height="6" rx="2" fill="#e02020"/>
<rect x="0.5" y="5.5" width="11" height="5" fill="#5cc82a"/></svg>
<svg style="left:1003px;top:54px" width="16" height="12" viewBox="0 0 16 12">
<path d="M1.5 11 C3 3 13 3 14.5 11" fill="none" stroke="#2f5d99" stroke-width="2.4"/>
<rect x="0" y="1" width="4" height="4" fill="#fff" stroke="#ccc" stroke-width=".5"/><rect x="6" y="0" width="4" height="4" fill="#fff" stroke="#ccc" stroke-width=".5"/><rect x="12" y="1" width="4" height="4" fill="#fff" stroke="#ccc" stroke-width=".5"/></svg>
<div style="position:absolute;left:941.5px;top:76.5px;width:139px;height:29px;background:linear-gradient(#f3f3f3,#e9e9e9);border:1px solid #bdbdbd;border-radius:3px;box-shadow:0 1px 1px rgba(0,0,0,.08)"></div>
<svg style="left:947.3px;top:72px" width="900" height="32"><text x="0" y="23.60" font-size="11.9" fill="#232629" font-weight="400" stroke="#232629" stroke-width="0.22" font-family="Liberation Sans">Mode</text></svg>
<svg style="left:1016.6px;top:72px" width="900" height="32"><text x="0" y="23.60" font-size="11.8" fill="#232629" font-weight="400" stroke="#232629" stroke-width="0.22" font-family="Liberation Sans">Normal</text></svg>
<svg style="left:1062px;top:88px" width="12" height="8" viewBox="0 0 12 8"><path d="M1 1.5 L6 6.5 L11 1.5" fill="none" stroke="#232629" stroke-width="1.1"/></svg>
<div style="position:absolute;left:940px;top:109px;width:150px;height:19px;background:#fbfbfb;border:1px solid #5e5e5e"></div>
<div style="position:absolute;left:941px;top:110px;width:41px;height:17px;background:#6490bd"></div>
<div style="position:absolute;left:982px;top:110px;width:1px;height:17px;background:#111"></div>
<svg style="left:942.6px;top:100px" width="900" height="32"><text x="0" y="23.50" font-size="11.5" fill="#f4f8fc" font-weight="400" font-family="Liberation Sans">Opacity</text></svg>
<svg style="left:940.6px;top:125px" width="900" height="32"><text x="0" y="24.00" font-size="10.95" fill="#232629" font-weight="400" stroke="#232629" stroke-width="0.22" font-family="Liberation Sans">Lock:</text></svg>
<svg style="left:975px;top:136px" width="16" height="18" viewBox="0 0 16 18">
<path d="M15 0.5 L7 11 L9 12.5 Z" fill="#d3843a" stroke="#9a5a20" stroke-width=".6"/>
<path d="M7 11 C4 11 3 14 1 17 C4 17 8 15 9 12.5 Z" fill="#111"/></svg>
<svg style="left:1005px;top:136px" width="17" height="17" viewBox="0 0 23 20">
<path d="M11.5 0 L16 5 L13 5 L13 8.5 L17 8.5 L17 5.5 L22.5 10 L17 14.5 L17 11.5 L13 11.5 L13 15 L16 15 L11.5 20 L7 15 L10 15 L10 11.5 L6 11.5 L6 14.5 L0.5 10 L6 5.5 L6 8.5 L10 8.5 L10 5 L7 5 Z" fill="#3d6aa3"/></svg>
<div style="position:absolute;left:1035px;top:137px;width:16px;height:16px;border:1px solid #555;background:#e8e8e8;background-image:linear-gradient(45deg,#c4c4c4 25%,transparent 25%,transparent 75%,#c4c4c4 75%),linear-gradient(45deg,#c4c4c4 25%,transparent 25%,transparent 75%,#c4c4c4 75%);background-size:7px 7px;background-position:0 0,3.5px 3.5px"></div>
<div style="position:absolute;left:940.5px;top:162.5px;width:150px;height:180px;background:repeating-linear-gradient(to bottom,#fdfdfd 0px,#fdfdfd 1px,#f3f3f3 1px,#f3f3f3 3px);border:1px solid #c3c3c3"></div>
<div style="position:absolute;left:941.5px;top:163px;width:145px;height:23px;background:#4b6b8e"></div>
<svg style="left:945.5px;top:168px" width="18" height="13" viewBox="0 0 18 13">
<path d="M1.2 6.5 C4.5 0.8 13.5 0.8 16.8 6.5 C13.5 12.2 4.5 12.2 1.2 6.5 Z" fill="#fff" stroke="#3e5570" stroke-width="1.7"/>
<circle cx="9" cy="6.5" r="4" fill="#2f62ad"/><circle cx="9" cy="6.5" r="2.6" fill="#2a55a0"/><circle cx="9" cy="6.5" r="1.2" fill="#0d1f3c"/></svg>
<svg style="left:945px;top:190.5px" width="18" height="13" viewBox="0 0 18 13">
<path d="M1.2 6.5 C4.5 0.8 13.5 0.8 16.8 6.5 C13.5 12.2 4.5 12.2 1.2 6.5 Z" fill="#fff" stroke="#4a4a4a" stroke-width="1.7"/>
<circle cx="9" cy="6.5" r="4" fill="#2f62ad"/><circle cx="9" cy="6.5" r="2.6" fill="#2a55a0"/><circle cx="9" cy="6.5" r="1.2" fill="#0d1f3c"/></svg>
<div style="position:absolute;left:1011px;top:163px;width:36px;height:22px;background:#fdfdfd;background-image:linear-gradient(45deg,#d0d0d0 25%,transparent 25%,transparent 75%,#d0d0d0 75%),linear-gradient(45deg,#d0d0d0 25%,transparent 25%,transparent 75%,#d0d0d0 75%);background-size:8px 8px;background-position:1px 2px,5px 6px;border-bottom:1px solid #9ab"></div>
<svg style="left:1049.3px;top:156px" width="900" height="32"><text x="0" y="23.50" font-size="11.5" fill="#f6f8fa" font-weight="400" font-family="Liberation Sans">nYe51xM.png</text></svg>
<div style="position:absolute;left:1011px;top:186px;width:36px;height:21px;background:#0d0d0f;border-bottom:1px solid #777"></div>
<svg style="left:1049.3px;top:178px" width="900" height="32"><text x="0" y="23.50" font-size="11.5" fill="#111" font-weight="700" font-family="Liberation Sans">AKRINc3</text></svg>
<svg style="left:945px;top:353px" width="12" height="17" viewBox="0 0 12 17">
<path d="M1 1 V9 M1 2 H5 L3 4 L5 6 H1" fill="#111" stroke="#111" stroke-width="1.3"/><path d="M6 1 H9 L11 3 V6" fill="none" stroke="#888" stroke-width=".8"/><path d="M0 16 H11" stroke="#999" stroke-width="1"/></svg>
<svg style="left:968px;top:353px" width="11" height="16" viewBox="0 0 11 16">
<rect x="1" y="5" width="10" height="11" fill="#5a8fd0"/><path d="M1 0.5 V8 M1 1 H4 L2.5 3 L4 5 H1" fill="#111" stroke="#111" stroke-width="1.2"/></svg>
<svg style="left:991px;top:355px" width="11" height="10" viewBox="0 0 11 10"><path d="M1 6 L5.5 1.5 L10 6 M1 9 L5.5 4.5 L10 9" fill="none" stroke="#a0623a" stroke-width="1.3"/></svg>
<svg style="left:1014px;top:356px" width="11" height="10" viewBox="0 0 11 10"><path d="M0 1 L5.5 5.5 L11 1 L11 4.5 L5.5 10 L0 4.5 Z" fill="#e98a1e"/></svg>
<svg style="left:1037px;top:353px" width="11" height="17" viewBox="0 0 11 17">
<rect x="0.5" y="0.5" width="7" height="10" fill="#c8d8ee" stroke="#2f5ca0" stroke-width="1"/><rect x="3" y="5" width="8" height="12" fill="#2f5ca0"/><rect x="1.5" y="2" width="4" height="5" fill="#9cb9e0"/></svg>
<svg style="left:1060px;top:354px" width="11" height="15" viewBox="0 0 11 15"><path d="M1 2 H7 M1 5 H6 M1 8 H7 M1 11 H6 M1 14 H7" stroke="#bbb" stroke-width="1"/><path d="M9.5 1 V15" stroke="#f0a030" stroke-width="1.5"/><path d="M6 9 L9 7" stroke="#f0a030" stroke-width="1"/></svg>
<div style="position:absolute;left:933px;top:414px;width:160px;height:260px;background:#eff0f1;border:1px solid #bdbdbd"></div>
<div style="position:absolute;left:933px;top:386px;width:33px;height:29px;background:#eff0f2;border:1px solid #bdbdbd;border-bottom:none;border-radius:3px 3px 0 0"></div>
<div style="position:absolute;left:966px;top:388px;width:33px;height:27px;background:#d1d1d1"></div>
<div style="position:absolute;left:999px;top:388px;width:34px;height:27px;background:#d1d1d1;border-left:1px solid #bdbdbd"></div>
<div style="position:absolute;left:941px;top:392px;width:18px;height:18px;border:1.5px solid #111;background:#fff;overflow:hidden"><div style="position:absolute;left:7px;top:7px;width:2px;height:2px;background:#111"></div><div style="position:absolute;right:0;bottom:0;width:0;height:0;border-left:6px solid transparent;border-bottom:6px solid #7d8fe8"></div></div>
<div style="position:absolute;left:974px;top:393px;width:18px;height:18px;border:1.5px solid #111;background:repeating-linear-gradient(to right,#ffb347 0 3px,#f5a02a 3px 5px,#ffc060 5px 7px);"></div>
<div style="position:absolute;left:1007px;top:393px;width:18px;height:18px;border:1.5px solid #111;background:linear-gradient(to right,#000,#fff)"></div>
<div style="position:absolute;left:941.5px;top:419px;width:145px;height:25px;background:#fbfbfb;border:1px solid #c3c3c3;border-radius:2px"></div>
<svg style="left:945px;top:411px" width="900" height="32"><text x="0" y="24.00" font-size="11.6" fill="#6b6b6b" font-weight="400" font-style="italic" font-family="Liberation Sans">filter</text></svg>
<svg style="left:940px;top:435px" width="900" height="32"><text x="0" y="24.20" font-size="10.66" fill="#333" font-weight="400" font-style="italic" stroke="#333" stroke-width="0.22" font-family="Liberation Sans">01_Small #1 (3 × 3)</text></svg>
<div style="position:absolute;left:940.5px;top:464.5px;width:145px;height:155px;overflow:hidden;border:1px solid #c3c3c3"><svg style="left:0;top:0" width="150" height="155"><rect x="0" y="0" width="150" height="155" fill="#fdfdfd"/><rect x="68.1" y="0.5" width="33.5" height="34" fill="none" stroke="#111" stroke-width="1.2"/><circle cx="85.5" cy="17.5" r="1" fill="#111"/><circle cx="119.5" cy="18.5" r="2.5" fill="#555" opacity=".7"/><path d="M101.5 34.5 l-7 0 l7 -7 z" fill="#7d8fe8"/><path d="M136.5 34.5 l-7 0 l7 -7 z" fill="#7d8fe8"/><defs><radialGradient id="rg"><stop offset="0" stop-color="#000"/><stop offset=".35" stop-color="#222"/><stop offset="1" stop-color="#fff" stop-opacity="0"/></radialGradient><radialGradient id="rg2"><stop offset="0" stop-color="#000"/><stop offset=".15" stop-color="#222" stop-opacity=".95"/><stop offset=".5" stop-color="#666" stop-opacity=".55"/><stop offset="1" stop-color="#fff" stop-opacity="0"/></radialGradient></defs><circle cx="17.5" cy="52.5" r="13" fill="url(#rg2)"/><path d="M40.5 55.5 l16 -16" stroke="#111" stroke-width="2.8" stroke-linecap="round"/><path d="M85.5 39.5 l-8 10 h5 v13 h6 v-13 h5 z" fill="#111"/><path d="M117.5 55.5 l-10 -6 l6 -2 l-2 -8 l6 5 l3 -6 l3 6 l6 -4 l-2 8 l5 3 l-8 4 l2 8 l-6 -3 l-3 5 z" fill="#111"/><path d="M27.5 65.5 h6 M30.5 62.5 v6" stroke="#111" stroke-width="1.2"/><path d="M66.5 68.5 l-7 0 l7 -7 z" fill="#7d8fe8"/><path d="M95.5 65.5 h6 M98.5 62.5 v6" stroke="#111" stroke-width="1.2"/><path d="M129.5 65.5 h6 M132.5 62.5 v6" stroke="#a22" stroke-width="1.2"/><path d="M5.5 74.5 h26" stroke="#333" stroke-width="1.2" opacity=".85"/><path d="M5.5 78.4 h26" stroke="#333" stroke-width="1.2" opacity=".85"/><path d="M5.5 82.3 h24" stroke="#333" stroke-width="0.9" opacity=".85"/><path d="M5.5 86.2 h22" stroke="#333" stroke-width="1.5" opacity=".85"/><path d="M5.5 90.1 h26" stroke="#333" stroke-width="1.5" opacity=".85"/><path d="M5.5 94.0 h22" stroke="#333" stroke-width="0.9" opacity=".85"/><path d="M5.5 97.9 h24" stroke="#333" stroke-width="0.9" opacity=".85"/><path d="M36.5 85.5 h31" stroke="#111" stroke-width="2"/><path d="M84.5 73.5 v28" stroke="#666" stroke-width="1" stroke-dasharray="1 2"/><path d="M119.5 70.5 v32" stroke="#111" stroke-width="2.5"/><path d="M27.5 99.9 h6 M30.5 96.9 v6" stroke="#111" stroke-width="1.2"/><path d="M61.5 99.9 h6 M64.5 96.9 v6" stroke="#111" stroke-width="1.2"/><path d="M95.5 99.9 h6 M98.5 96.9 v6" stroke="#111" stroke-width="1.2"/><path d="M129.5 99.9 h6 M132.5 96.9 v6" stroke="#111" stroke-width="1.2"/><circle cx="17.1" cy="120.0" r="1.3" fill="#111"/><rect x="37.5" y="116.5" width="29" height="7" fill="#111"/><ellipse cx="85.7" cy="119.7" rx="12.5" ry="4.8" fill="#111"/><path d="M105.5 119.7 h30" stroke="#111" stroke-width="1.4"/><path d="M32.5 135.0 l-7 0 l7 -7 z" fill="#7d8fe8"/><path d="M61.5 134.4 h6 M64.5 131.4 v6" stroke="#111" stroke-width="1.2"/><path d="M95.5 134.4 h6 M98.5 131.4 v6" stroke="#111" stroke-width="1.2"/><path d="M129.5 134.4 h6 M132.5 131.4 v6" stroke="#111" stroke-width="1.2"/><circle cx="17.8" cy="154.5" r="13" fill="url(#rg)"/><circle cx="51.8" cy="154.5" r="14" fill="url(#rg)"/><circle cx="85.7" cy="154.5" r="15" fill="url(#rg)"/><circle cx="120.1" cy="153.9" r="15.6" fill="#0a0a0a"/></svg></div>
<div style="position:absolute;left:941.5px;top:624px;width:145px;height:24px;background:#fbfbfb;border:1px solid #c3c3c3;border-radius:2px"></div>
<svg style="left:946.5px;top:616px" width="900" height="32"><text x="0" y="23.80" font-size="11.8" fill="#232629" font-weight="400" stroke="#232629" stroke-width="0.22" font-family="Liberation Sans">brush,</text></svg>
<div style="position:absolute;left:940px;top:651px;width:150px;height:18.5px;background:#fbfbfb;border:1px solid #5e5e5e"></div>
<svg style="left:942.4px;top:642px" width="900" height="32"><text x="0" y="24.00" font-size="11.1" fill="#232629" font-weight="400" stroke="#232629" stroke-width="0.22" font-family="Liberation Sans">Spacing</text></svg>
<div style="position:absolute;left:925.5px;top:81px;width:1px;height:600px;background:#c9c9c9"></div>
<div style="position:absolute;left:24px;top:50px;width:380px;height:605px;background:repeating-linear-gradient(to bottom,#f9f9f9 0px,#f9f9f9 1px,#eeeeee 1px,#eeeeee 3px);background-position:0 -2px;box-shadow:0 1px 5px 2px rgba(0,0,0,.45);border-left:1px solid #fbfbfb;border-radius:2px 2px 0 0"></div>
<div style="position:absolute;left:24px;top:50px;width:380px;height:23px;background:#eff0f1;border-radius:2px 2px 0 0"></div>
<svg style="left:28px;top:54px" width="18" height="16" viewBox="0 0 18 16">
<rect x="0" y="6" width="18" height="10" fill="#0a0a0a"/>
<path d="M5 5 L8 2 L9.5 4 L11 3 L15.5 0 L14.5 5 L13 8 L9 9 L5 8 Z" fill="#7c7a66"/>
<path d="M6 6 L9 4 L11 5.5 L14 3" stroke="#c8c8c0" stroke-width=".9" fill="none"/>
<path d="M9 10 L10 13" stroke="#555" stroke-width="1"/></svg>
<div style="position:absolute;left:55px;top:59.5px;width:10px;height:2.5px;background:#1f6e80"></div>
<svg style="left:169px;top:42px" width="900" height="32"><text x="0" y="24.00" font-size="13.77" fill="#31363b" font-weight="400" font-family="Liberation Sans">Bump Map</text></svg>
<div style="position:absolute;left:342px;top:62px;width:6px;height:2px;background:#1f6e80"></div>
<div style="position:absolute;left:364.5px;top:58px;width:6.5px;height:6px;border:1.8px solid #1f6e80"></div>
<svg style="left:387px;top:58px" width="7" height="7" viewBox="0 0 7 7"><path d="M.7 .7 L6.3 6.3 M6.3 .7 L.7 6.3" stroke="#1f6e80" stroke-width="1.6"/></svg>
<div style="position:absolute;left:29px;top:73px;width:370px;height:45px;border:1px solid #cdcdcd;border-radius:2px"></div>
<svg style="left:28px;top:72px" width="32" height="32" viewBox="0 0 32 32">
<path d="M26.2 10.2 A11.6 11.6 0 1 0 27.6 14" fill="#f4f4f4" stroke="#2e2e2e" stroke-width="1.25"/>
<path d="M26.2 10.2 H15.8 C12.3 10.2 10.2 13 10.2 16 C10.2 19.3 12.8 21.6 16 21.6 C19.3 21.6 21.2 19.3 21.2 16.8 C21.2 15.2 20 14 18.6 14 H27.6" fill="none" stroke="#2e2e2e" stroke-width="1.25"/>
<path d="M18.6 14 H16 C14.3 14 13.6 15.3 13.6 16.3 C13.6 17.5 14.6 18.3 15.8 18.3 C17.4 18.3 18 17 18 16.5" fill="none" stroke="#2e2e2e" stroke-width="1.25"/>
</svg>
<svg style="left:62.7px;top:70px" width="900" height="32"><text x="0" y="23.70" font-size="16.83" fill="#111" font-weight="700" font-family="Liberation Sans">Bump Map</text></svg>
<svg style="left:62.7px;top:86px" width="900" height="32"><text x="0" y="24.50" font-size="11.37" fill="#232629" font-weight="400" stroke="#232629" stroke-width="0.22" font-family="Liberation Sans">nYe51xM.png-7 ([AKRINc3] (imported))</text></svg>
<div style="position:absolute;left:360px;top:86px;width:34px;height:19px;border:1.3px solid #111;background:#f2f2f2;background-image:linear-gradient(45deg,#d0d0d0 25%,transparent 25%,transparent 75%,#d0d0d0 75%),linear-gradient(45deg,#d0d0d0 25%,transparent 25%,transparent 75%,#d0d0d0 75%);background-size:8px 8px;background-position:0 0,4px 4px"></div>
<svg style="left:35.2px;top:122px" width="900" height="32"><text x="0" y="24.50" font-size="13.36" fill="#232629" font-weight="400" stroke="#232629" stroke-width="0.22" font-family="Liberation Sans">Presets:</text></svg>
<div style="position:absolute;left:92px;top:125.5px;width:242px;height:32.5px;background:linear-gradient(#f2f2f2,#e7e7e7);border:1px solid #bcbcbc;border-radius:3px;box-shadow:0 1px 1.5px rgba(0,0,0,.12)"></div>
<svg style="left:315px;top:139px" width="12" height="7" viewBox="0 0 12 7"><path d="M.8 1 L6 6 L11.2 1" fill="none" stroke="#232629" stroke-width="1.15"/></svg>
<svg style="left:346px;top:135px" width="15" height="13" viewBox="0 0 15 13"><path d="M7.5 .5 V12.5 M1 6.5 H14" stroke="#111" stroke-width="2.2"/></svg>
<svg style="left:372px;top:133.5px" width="17" height="16" viewBox="0 0 17 16"><rect x=".7" y=".7" width="15.6" height="14.6" rx="2.5" fill="none" stroke="#222" stroke-width="1.3"/><path d="M12.5 3.5 L4 8 L12.5 12.5 Z" fill="none" stroke="#222" stroke-width="1.1"/></svg>
<div style="position:absolute;left:36px;top:177.5px;width:18px;height:18px;border:1px solid #3daee9;border-radius:3px;background:#fcfcfc"><div style="position:absolute;left:2px;top:2px;width:12px;height:12px;background:#3daee9;border-radius:1px"></div></div>
<svg style="left:58px;top:167px" width="900" height="32"><text x="0" y="24.40" font-size="14.2" fill="#232629" font-weight="400" stroke="#232629" stroke-width="0.22" font-family="Liberation Sans">Aux Input</text></svg>
<div style="position:absolute;left:123px;top:167px;width:61px;height:38.5px;background:linear-gradient(#f1f1f1,#e6e6e6);border:1px solid #c0c0c0;border-radius:3px;box-shadow:0 1px 1px rgba(0,0,0,.1)"></div>
<div style="position:absolute;left:128px;top:172px;width:50px;height:28px;border:1.2px solid #1a1a1a;background:#f1f1f1"></div>
<svg style="left:145px;top:180px" width="14" height="12" viewBox="0 0 14 12"><path d="M3 1 L5 6 L4 9 L11 10 L13 8 L8 7 L6 5 Z" fill="#9a9a9a"/></svg>
<svg style="left:186px;top:167px" width="900" height="32"><text x="0" y="24.40" font-size="14.06" fill="#232629" font-weight="400" stroke="#232629" stroke-width="0.22" font-family="Liberation Sans">nYe51xM.png</text></svg>
<div style="position:absolute;left:36px;top:210.5px;width:356px;height:32.5px;background:linear-gradient(#f2f2f2,#e7e7e7);border:1px solid #bcbcbc;border-radius:3px;box-shadow:0 1px 1.5px rgba(0,0,0,.12)"></div>
<svg style="left:42.2px;top:208px" width="900" height="32"><text x="0" y="24.00" font-size="13.6" fill="#232629" font-weight="400" stroke="#232629" stroke-width="0.22" font-family="Liberation Sans">Type</text></svg>
<svg style="left:324.7px;top:208px" width="900" height="32"><text x="0" y="24.00" font-size="13.89" fill="#232629" font-weight="400" stroke="#232629" stroke-width="0.22" font-family="Liberation Sans">Linear</text></svg>
<svg style="left:373px;top:224px" width="12" height="7" viewBox="0 0 12 7"><path d="M.8 1 L6 6 L11.2 1" fill="none" stroke="#232629" stroke-width="1.15"/></svg>
<div style="position:absolute;left:36px;top:248.5px;width:18px;height:18px;border:1px solid #3daee9;border-radius:3px;background:#fcfcfc"><div style="position:absolute;left:2px;top:2px;width:12px;height:12px;background:#3daee9;border-radius:1px"></div></div>
<svg style="left:58px;top:238px" width="900" height="32"><text x="0" y="23.50" font-size="13.67" fill="#232629" font-weight="400" stroke="#232629" stroke-width="0.22" font-family="Liberation Sans">Compensate</text></svg>
<div style="position:absolute;left:36px;top:271px;width:18px;height:18px;border:1px solid #3daee9;border-radius:3px;background:#fcfcfc"><div style="position:absolute;left:2px;top:2px;width:12px;height:12px;background:#3daee9;border-radius:1px"></div></div>
<svg style="left:58px;top:260px" width="900" height="32"><text x="0" y="24.50" font-size="13.8" fill="#232629" font-weight="400" textLength="38.3" lengthAdjust="spacing" stroke="#232629" stroke-width="0.22" font-family="Liberation Sans">Invert</text></svg>
<div style="position:absolute;left:36px;top:294px;width:18px;height:18px;border:1px solid #b4b4b4;border-radius:3px;background:linear-gradient(#f6f6f6,#ececec)"></div>
<svg style="left:58px;top:284px" width="900" height="32"><text x="0" y="23.50" font-size="13.6" fill="#232629" font-weight="400" stroke="#232629" stroke-width="0.22" font-family="Liberation Sans">Tiled</text></svg>
<div style="position:absolute;left:35.6px;top:320.5px;width:321px;height:21.2px;border:1px solid #7b7b7b;background:#f7f7f7;"></div>
<svg style="left:37.3px;top:313px" width="900" height="32"><text x="0" y="24.30" font-size="13.8" fill="#232629" font-weight="400" textLength="50.8" lengthAdjust="spacing" stroke="#232629" stroke-width="0.22" font-family="Liberation Sans">Azimuth</text></svg>
<svg style="left:-561.6px;top:313px" width="900" height="32"><text x="900" y="24.30" font-size="13.99" fill="#232629" font-weight="400" stroke="#232629" stroke-width="0.22" text-anchor="end" font-family="Liberation Sans">135.00</text></svg>
<div style="position:absolute;left:36.6px;top:321.5px;width:112.9px;height:19.2px;background:#6b9ac6;border-right:1px solid #111;overflow:hidden">
<svg style="left:0.6999999999999957px;top:-8px" width="900" height="32"><text x="0" y="23.80" font-size="13.8" fill="#f2f6fa" font-weight="400" textLength="50.8" lengthAdjust="spacing" font-family="Liberation Sans">Azimuth</text></svg>
</div>
<svg style="left:344.5px;top:321.6px" width="9" height="19" viewBox="0 0 9 19"><path d="M1 6.5 L4.5 3 L8 6.5" fill="none" stroke="#232629" stroke-width="1.1"/><path d="M1 12.5 L4.5 16 L8 12.5" fill="none" stroke="#232629" stroke-width="1.1"/></svg>
<svg style="left:361px;top:315.5px" width="32" height="31" viewBox="0 0 32 31"><circle cx="16" cy="15.5" r="14.6" fill="none" stroke="#1f1f1f" stroke-width="1.1"/><path d="M16 15.5 L6 5.5" stroke="#1f1f1f" stroke-width="1.4"/></svg>
<div style="position:absolute;left:35.6px;top:349px;width:356.5px;height:21.3px;border:1px solid #7b7b7b;background:#f7f7f7;"></div>
<svg style="left:37.3px;top:342px" width="900" height="32"><text x="0" y="24.00" font-size="13.8" fill="#232629" font-weight="400" textLength="54.3" lengthAdjust="spacing" stroke="#232629" stroke-width="0.22" font-family="Liberation Sans">Elevation</text></svg>
<svg style="left:-525.5px;top:342px" width="900" height="32"><text x="900" y="24.00" font-size="14.1" fill="#232629" font-weight="400" stroke="#232629" stroke-width="0.22" text-anchor="end" font-family="Liberation Sans">45.00</text></svg>
<div style="position:absolute;left:36.6px;top:350px;width:167.9px;height:19.3px;background:#6b9ac6;border-right:1px solid #111;overflow:hidden">
<svg style="left:0.6999999999999957px;top:-8px" width="900" height="32"><text x="0" y="24.00" font-size="13.8" fill="#f2f6fa" font-weight="400" textLength="54.3" lengthAdjust="spacing" font-family="Liberation Sans">Elevation</text></svg>
</div>
<svg style="left:380.5px;top:350.1px" width="9" height="19" viewBox="0 0 9 19"><path d="M1 6.5 L4.5 3 L8 6.5" fill="none" stroke="#232629" stroke-width="1.1"/><path d="M1 12.5 L4.5 16 L8 12.5" fill="none" stroke="#232629" stroke-width="1.1"/></svg>
<div style="position:absolute;left:35.6px;top:373.8px;width:356.5px;height:20.5px;border:1px solid #7b7b7b;background:#f7f7f7;"></div>
<svg style="left:37.3px;top:366px" width="900" height="32"><text x="0" y="24.00" font-size="13.8" fill="#232629" font-weight="400" textLength="38.6" lengthAdjust="spacing" stroke="#232629" stroke-width="0.22" font-family="Liberation Sans">Depth</text></svg>
<svg style="left:-525.5px;top:366px" width="900" height="32"><text x="900" y="24.00" font-size="14.1" fill="#232629" font-weight="400" stroke="#232629" stroke-width="0.22" text-anchor="end" font-family="Liberation Sans">7</text></svg>
<div style="position:absolute;left:36.6px;top:374.8px;width:29.4px;height:18.5px;background:#6b9ac6;border-right:1px solid #111;overflow:hidden">
<svg style="left:0.6999999999999957px;top:-9px" width="900" height="32"><text x="0" y="24.20" font-size="13.8" fill="#f2f6fa" font-weight="400" textLength="38.6" lengthAdjust="spacing" font-family="Liberation Sans">Depth</text></svg>
</div>
<svg style="left:380.5px;top:374.6px" width="9" height="19" viewBox="0 0 9 19"><path d="M1 6.5 L4.5 3 L8 6.5" fill="none" stroke="#232629" stroke-width="1.1"/><path d="M1 12.5 L4.5 16 L8 12.5" fill="none" stroke="#232629" stroke-width="1.1"/></svg>
<div style="position:absolute;left:35.6px;top:397px;width:283px;height:21.7px;border:1px solid #7b7b7b;background:#f7f7f7;"></div>
<svg style="left:37.3px;top:390px" width="900" height="32"><text x="0" y="23.80" font-size="13.8" fill="#232629" font-weight="400" textLength="49.1" lengthAdjust="spacing" stroke="#232629" stroke-width="0.22" font-family="Liberation Sans">Offset X</text></svg>
<svg style="left:-600.5px;top:390px" width="900" height="32"><text x="900" y="23.80" font-size="14.1" fill="#232629" font-weight="400" stroke="#232629" stroke-width="0.22" text-anchor="end" font-family="Liberation Sans">0</text></svg>
<svg style="left:305.5px;top:398.4px" width="9" height="19" viewBox="0 0 9 19"><path d="M1 6.5 L4.5 3 L8 6.5" fill="none" stroke="#232629" stroke-width="1.1"/><path d="M1 12.5 L4.5 16 L8 12.5" fill="none" stroke="#232629" stroke-width="1.1"/></svg>
<div style="position:absolute;left:35.6px;top:421.5px;width:283px;height:21.2px;border:1px solid #7b7b7b;background:#f7f7f7;"></div>
<svg style="left:37.3px;top:414px" width="900" height="32"><text x="0" y="24.00" font-size="13.8" fill="#232629" font-weight="400" textLength="49.1" lengthAdjust="spacing" stroke="#232629" stroke-width="0.22" font-family="Liberation Sans">Offset Y</text></svg>
<svg style="left:-600.5px;top:414px" width="900" height="32"><text x="900" y="24.00" font-size="14.1" fill="#232629" font-weight="400" stroke="#232629" stroke-width="0.22" text-anchor="end" font-family="Liberation Sans">0</text></svg>
<svg style="left:305.5px;top:422.6px" width="9" height="19" viewBox="0 0 9 19"><path d="M1 6.5 L4.5 3 L8 6.5" fill="none" stroke="#232629" stroke-width="1.1"/><path d="M1 12.5 L4.5 16 L8 12.5" fill="none" stroke="#232629" stroke-width="1.1"/></svg>
<svg style="left:372px;top:399px" width="9" height="41" viewBox="0 0 9 41"><path d="M1 1.5 H6 V5 M1 39.5 H6 V36" fill="none" stroke="#111" stroke-width="1.6"/><rect x="2" y="10.5" width="6" height="8" rx="1.8" fill="#f0f0f0" stroke="#666" stroke-width="1"/><rect x="2" y="21.5" width="6" height="8" rx="1.8" fill="#f0f0f0" stroke="#666" stroke-width="1"/><rect x="3.8" y="12.5" width="2.4" height="4" fill="none" stroke="#777" stroke-width=".8"/><rect x="3.8" y="23.5" width="2.4" height="4" fill="none" stroke="#777" stroke-width=".8"/></svg>
<svg style="left:334px;top:410.5px" width="14" height="19" viewBox="0 0 14 19"><path d="M1 1 L1 14.5 L4.5 11.5 L8 17.5 L10.5 16 L7.5 10.5 L12.5 9.8 Z" fill="#f6f6f6" stroke="#2a2a2a" stroke-width="1"/></svg>
<div style="position:absolute;left:35.6px;top:445.4px;width:356.5px;height:21.6px;border:1px solid #7b7b7b;background:#f7f7f7;"></div>
<svg style="left:37.3px;top:438px" width="900" height="32"><text x="0" y="23.90" font-size="13.8" fill="#232629" font-weight="400" textLength="65.9" lengthAdjust="spacing" stroke="#232629" stroke-width="0.22" font-family="Liberation Sans">Waterlevel</text></svg>
<svg style="left:-525.5px;top:438px" width="900" height="32"><text x="900" y="23.90" font-size="14.1" fill="#232629" font-weight="400" stroke="#232629" stroke-width="0.22" text-anchor="end" font-family="Liberation Sans">0.000</text></svg>
<svg style="left:380.5px;top:446.7px" width="9" height="19" viewBox="0 0 9 19"><path d="M1 6.5 L4.5 3 L8 6.5" fill="none" stroke="#232629" stroke-width="1.1"/><path d="M1 12.5 L4.5 16 L8 12.5" fill="none" stroke="#b8b8b8" stroke-width="1.1"/></svg>
<div style="position:absolute;left:35.6px;top:470px;width:356.5px;height:21.3px;border:1px solid #7b7b7b;background:#f7f7f7;"></div>
<svg style="left:37.3px;top:462px" width="900" height="32"><text x="0" y="23.70" font-size="13.8" fill="#232629" font-weight="400" textLength="140.7" lengthAdjust="spacing" stroke="#232629" stroke-width="0.22" font-family="Liberation Sans">Ambient lighting factor</text></svg>
<svg style="left:-525.5px;top:462px" width="900" height="32"><text x="900" y="23.70" font-size="14.1" fill="#232629" font-weight="400" stroke="#232629" stroke-width="0.22" text-anchor="end" font-family="Liberation Sans">0.000</text></svg>
<svg style="left:380.5px;top:471.1px" width="9" height="19" viewBox="0 0 9 19"><path d="M1 6.5 L4.5 3 L8 6.5" fill="none" stroke="#232629" stroke-width="1.1"/><path d="M1 12.5 L4.5 16 L8 12.5" fill="none" stroke="#b8b8b8" stroke-width="1.1"/></svg>
<div style="position:absolute;left:36px;top:520.3px;width:356px;height:32.3px;background:linear-gradient(#f2f2f2,#e7e7e7);border:1px solid #bcbcbc;border-radius:3px;box-shadow:0 1px 1.5px rgba(0,0,0,.12)"></div>
<svg style="left:42.2px;top:518px" width="900" height="32"><text x="0" y="24.00" font-size="13.6" fill="#232629" font-weight="400" stroke="#232629" stroke-width="0.22" font-family="Liberation Sans">Clipping</text></svg>
<svg style="left:324.7px;top:518px" width="900" height="32"><text x="0" y="24.00" font-size="13.6" fill="#232629" font-weight="400" stroke="#232629" stroke-width="0.22" font-family="Liberation Sans">Adjust</text></svg>
<svg style="left:373px;top:534px" width="12" height="7" viewBox="0 0 12 7"><path d="M.8 1 L6 6 L11.2 1" fill="none" stroke="#232629" stroke-width="1.15"/></svg>
<svg style="left:39.5px;top:563px" width="6" height="10" viewBox="0 0 6 10"><path d="M1 1 L5 5 L1 9" fill="none" stroke="#232629" stroke-width="1.1"/></svg>
<svg style="left:51px;top:548px" width="900" height="32"><text x="0" y="24.30" font-size="13.79" fill="#232629" font-weight="400" stroke="#232629" stroke-width="0.22" font-family="Liberation Sans">Blending Options</text></svg>
<div style="position:absolute;left:36px;top:585.5px;width:18px;height:18px;border:1px solid #3daee9;border-radius:3px;background:#fcfcfc"><div style="position:absolute;left:2px;top:2px;width:12px;height:12px;background:#3daee9;border-radius:1px"></div></div>
<svg style="left:58px;top:575px" width="900" height="32"><text x="0" y="24.00" font-size="13.3" fill="#232629" font-weight="400" stroke="#232629" stroke-width="0.22" font-family="Liberation Sans">Preview</text></svg>
<div style="position:absolute;left:313px;top:585.5px;width:18px;height:18px;border:1px solid #b4b4b4;border-radius:3px;background:linear-gradient(#f6f6f6,#ececec)"></div>
<svg style="left:335px;top:575px" width="900" height="32"><text x="0" y="24.00" font-size="13.33" fill="#232629" font-weight="400" stroke="#232629" stroke-width="0.22" font-family="Liberation Sans">Split view</text></svg>
<svg style="left:63px;top:612px" width="900" height="32"><text x="0" y="24.00" font-size="13.6" fill="#232629" font-weight="400" stroke="#232629" stroke-width="0.22" font-family="Liberation Sans">Help</text></svg>
<svg style="left:151px;top:612px" width="900" height="32"><text x="0" y="24.00" font-size="13.4" fill="#232629" font-weight="400" stroke="#232629" stroke-width="0.22" font-family="Liberation Sans">Reset</text></svg>
<svg style="left:239px;top:612px" width="900" height="32"><text x="0" y="24.00" font-size="12.85" fill="#232629" font-weight="400" stroke="#232629" stroke-width="0.22" font-family="Liberation Sans">Cancel</text></svg>
<svg style="left:341px;top:612px" width="900" height="32"><text x="0" y="24.00" font-size="13.6" fill="#232629" font-weight="400" stroke="#232629" stroke-width="0.22" font-family="Liberation Sans">OK</text></svg>
</body></html>
